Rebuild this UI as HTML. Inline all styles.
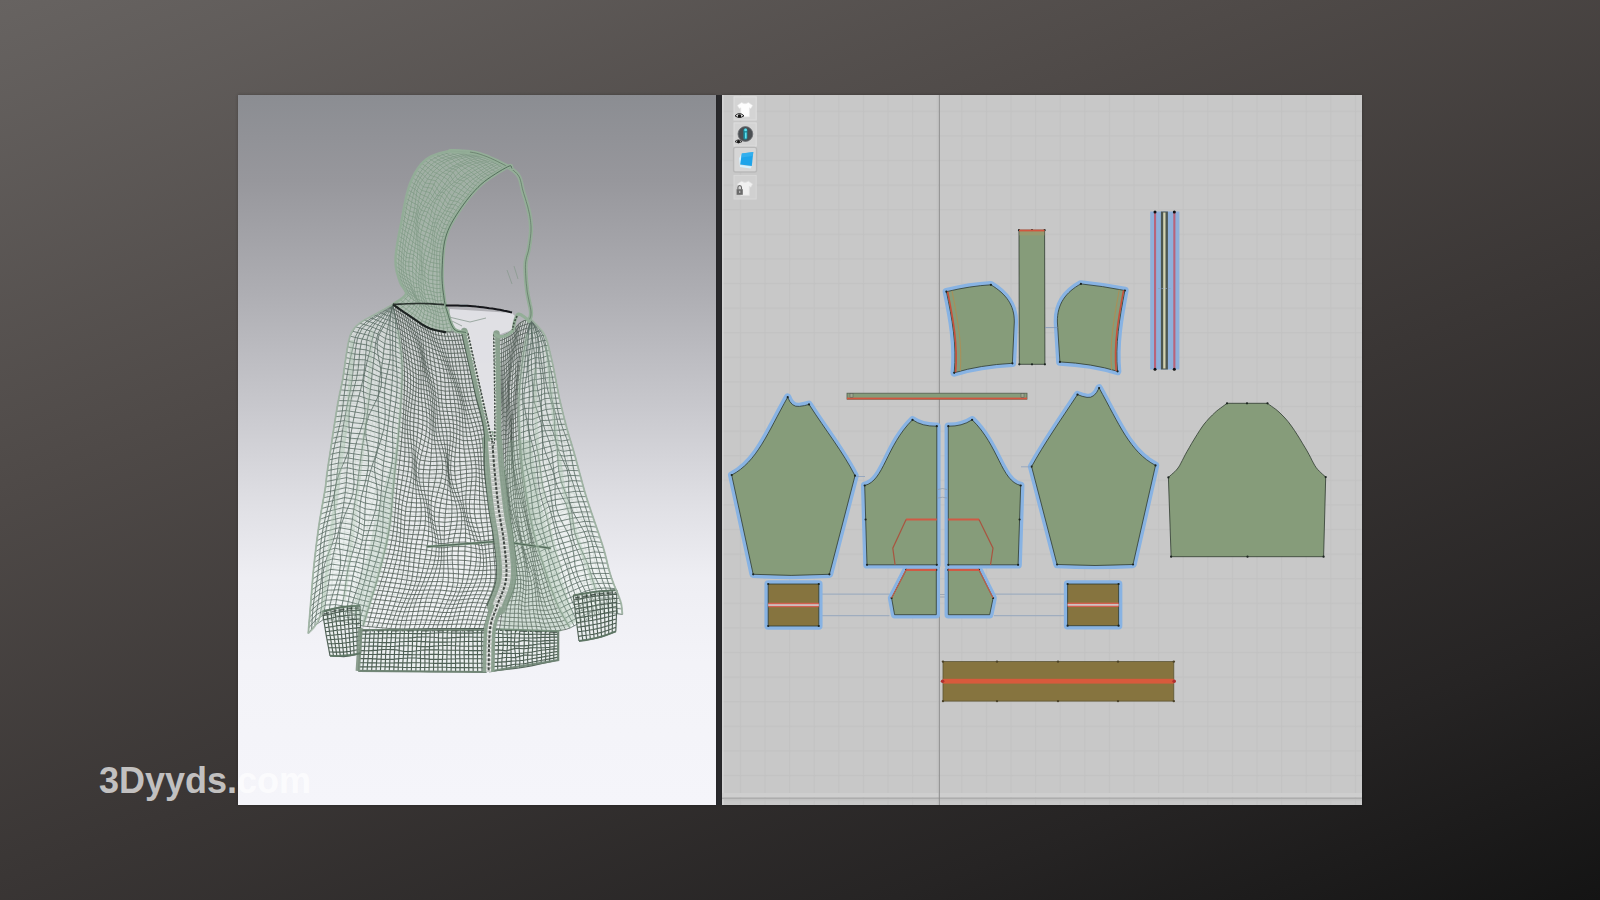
<!DOCTYPE html>
<html>
<head>
<meta charset="utf-8">
<title>3Dyyds hoodie</title>
<style>
html,body{margin:0;padding:0;}
body{width:1600px;height:900px;overflow:hidden;position:relative;
  font-family:"Liberation Sans",sans-serif;
  background:linear-gradient(159deg,#676361 0%,#4f4a48 32%,#3a3635 58%,#262424 82%,#141414 100%);}
#left{position:absolute;left:238px;top:95px;width:478.2px;height:710px;
  background:linear-gradient(to bottom,#8b8d92 0%,#97979c 12%,#aeaeb3 28%,#c8c8cd 44%,#e0e0e5 58%,#eeeef3 68%,#f3f3f8 80%,#f5f5fa 100%);
  box-shadow:0 0 3px rgba(0,0,0,.25);}
#right{position:absolute;left:722.3px;top:95px;width:640px;height:710px;background:#c8c8c8;
  box-shadow:0 0 3px rgba(0,0,0,.25);overflow:hidden;}
#gap{position:absolute;left:716px;top:95px;width:7px;height:710px;background:#2a2a2d;}
#art{position:absolute;left:0;top:0;width:1600px;height:900px;}
#wm{position:absolute;left:99px;top:760.5px;font-weight:bold;font-size:36px;line-height:40px;color:rgba(255,255,255,.7);letter-spacing:0px;white-space:nowrap;}
</style>
</head>
<body>
<div id="gap"></div>
<div id="left"></div>
<div id="right"></div>
<svg id="art" viewBox="0 0 1600 900" width="1600" height="900">
<defs>
  <pattern id="grid" x="1182.7" y="651.9" width="24.6" height="24.6" patternUnits="userSpaceOnUse">
    <path d="M0.5 0V24.6M0 0.5H24.6" stroke="#c2c2c2" stroke-width="1.3" fill="none"/>
  </pattern>
  <clipPath id="lclip"><rect x="238" y="95" width="479" height="710"/></clipPath>
  <filter id="soft" x="0" y="0" width="100%" height="100%" filterUnits="userSpaceOnUse"><feGaussianBlur stdDeviation="0.45"/></filter>
  <path id="bl" d="M392.8 304.4 397 307.3 401.2 310.3 405.4 313.2 409.6 316 413.9 318.9 418.1 321.8 422.3 324.6 426.8 327.1 431.5 329.1 436.4 330.5 441.5 331.5 446.5 332 451.7 332.1 456.8 331.7 461.8 331.2 464.4 331M387.1 307.6 391.4 310.6 395.9 313.5 400.3 316.2 405.4 319.1 411 322.4 415.5 325.8 419.3 328.9 424.3 331.4 430.5 333.3 435.6 334.8 439.8 336.1 445.1 337.1 451.4 337.4 457.5 337 463 336.5 465.6 336.5M381.3 310.8 386.1 313.7 390.8 316.6 395.3 319.5 401.1 322.5 407.7 326 412.8 329.6 416.5 332.7 421.9 335.5 429 337.7 434.4 339.5 438.4 340.9 444.1 341.9 451.6 342.3 458.3 342.1 464 341.9 466.9 342M375.6 314.1 380.9 316.8 385.9 319.7 390.4 322.8 396.7 326.1 404.4 329.7 410 333.3 413.6 336.5 419.5 339.5 427.4 342.1 433.1 344.3 437 345.8 443.4 346.7 451.9 347.1 459 347.2 465 347.3 468.1 347.5M369.8 317.2 375.6 319.7 381 322.7 385.6 325.9 392.4 329.4 400.8 333.3 406.8 337.1 410.6 340.3 416.9 343.6 425.8 346.5 431.9 348.9 435.9 350.5 442.8 351.5 452.1 352 459.7 352.3 465.9 352.7 469.3 353M364 320.2 370.2 322.8 376.2 325.6 381.2 328.8 388.3 332.5 397.2 336.9 403.4 341 407.3 344.5 414.2 347.8 424 350.8 430.9 353.2 435.2 355 442.5 356.3 452.3 357.1 460.1 357.6 466.8 358.1 470.6 358.5M358.6 324 365.3 326.5 371.9 329 377.4 332 384.8 335.8 393.6 340.8 399.9 345.6 404 349.4 411.6 352.5 422.4 355.2 430.1 357.5 434.9 359.5 442.5 361.2 452.5 362.4 460.5 363 467.6 363.6 471.8 364M353.9 328.5 360.9 331 368.2 333.2 374.4 335.8 382 339.6 390.4 345.3 396.5 350.8 401 354.8 409.3 357.7 421 359.9 429.6 361.9 435.1 364.1 442.9 366.3 452.7 367.9 460.8 368.6 468.4 369.1 473 369.6M350.7 334.2 358 336.6 365.9 338.3 372.6 340.5 380.2 344.4 388.1 350.5 393.9 356.7 399 360.9 407.8 363.4 420 365.1 429.4 366.8 435.9 369 443.7 371.6 453.1 373.5 461.2 374.3 469.3 374.7 474.2 375.1M348.8 340.5 356.4 342.6 364.6 344 371.9 346 379.4 349.9 386.5 356.3 392.3 362.7 398.1 366.9 407.3 369.3 419.3 370.7 429.4 372.2 436.9 374.4 445.1 377.1 454 379 461.9 379.9 470.2 380.3 475.4 380.6M347.6 347 355.4 348.5 363.9 349.7 371.5 351.8 378.7 355.9 385.1 362.3 391.3 368.4 398.2 372.4 407.4 374.9 418.6 376.6 429 378.2 437.9 380.2 446.6 382.4 455.1 384.3 462.7 385.3 471.2 385.8 476.7 386.1M346.5 353.5 354.7 354.4 363.2 355.6 370.9 358.1 377.9 362.3 383.7 368.4 390.6 373.8 399 377.4 408 380.3 417.8 382.7 428.3 384.7 438.7 386.3 448.2 387.8 456.4 389.2 463.8 390.4 472.3 391.4 477.9 391.6M345.5 360 354 360.1 362.2 361.4 370.1 364.5 376.8 369.1 382.3 374.6 390.3 379 400.2 382 408.9 385.4 416.9 389 427.2 391.5 439.2 392.6 449.8 393.1 457.8 393.9 465 395.4 473.6 396.9 479.2 397.1M344.6 366.5 353.3 365.9 361.3 367.3 369.3 371.1 375.9 375.8 381 380.8 390.2 384.1 401.9 386.6 410.1 390.5 416.2 395.2 426 398.4 439.6 399 451.2 398.4 459.1 398.6 466.3 400.3 475 402.3 480.6 402.6M343.7 373 352.6 371.8 360.2 373.2 368.5 377.4 375.1 382.4 380 386.9 390.3 389.4 403.5 391.5 411.3 395.8 415.6 401.3 425.1 405 440 405.3 452.4 403.9 460.3 403.5 467.7 405.4 476.5 407.8 482 408M342.7 379.5 351.4 377.9 358.8 379.2 367.7 383.4 374.5 388.3 379.2 392.8 390.1 395.1 404.7 397 412.4 401.4 415.3 407.1 424.5 410.9 440.3 411.1 453.2 409.5 461 408.9 468.8 410.8 478.1 413.2 483.4 413.5M341.4 385.9 349.8 384.3 357.1 385.2 366.7 388.9 374.1 393.7 378.5 398.4 389.6 401.2 405.1 403.2 413 407.3 415.2 412.5 424.3 416.1 440.7 416.6 453.6 415.2 461.2 414.8 469.7 416.4 479.6 418.7 484.7 419M340 392.3 347.8 390.9 355.1 391.2 365.8 394.1 373.9 398.4 377.9 403.8 388.9 407.7 404.9 410.1 413.2 413.6 415.4 417.7 424.6 420.7 441 421.6 453.4 421.1 460.9 421.1 470.3 422.4 481.1 424.1 485.9 424.5M338.7 398.8 345.7 397.6 353.1 397.3 365 399 374 402.9 377.7 409.2 388.1 414.4 404.3 417.4 413.1 420 415.9 422.7 425.3 425 441.3 426.4 453 427.1 460.3 427.7 470.8 428.6 482.5 429.6 487 430M337.5 405.3 343.9 404.4 351.3 403.4 364.1 404 374 407.4 377.7 414.5 387.5 421.2 403.4 424.7 412.9 426.5 416.5 427.7 426.1 429.2 441.4 431.2 452.2 433.2 459.6 434.4 471.1 434.8 483.7 435.2 487.9 435.6M336.5 411.7 342.2 411 349.6 409.5 363.1 409.2 373.9 412.2 377.8 420 387.1 427.7 402.6 431.7 412.5 432.8 417.1 433 426.8 433.9 441.3 436.4 451.4 439.2 459.1 440.8 471.5 440.9 484.7 440.7 488.7 441.2M335.4 418.2 340.8 417.5 348.2 415.6 361.9 414.8 373.3 417.6 377.8 425.7 386.9 433.9 401.8 438 412.1 438.8 417.6 438.5 427.4 439.3 440.8 441.9 450.5 445 458.9 446.8 472 446.6 485.6 446.2 489.4 446.8M334.4 424.7 339.7 423.6 346.9 421.7 360.4 420.8 372.4 423.5 377.9 431.6 387 439.6 401.2 443.5 411.6 444.5 418 444.4 427.6 445.3 440.1 447.8 449.8 450.8 459.1 452.3 472.7 452.1 486.3 451.8 490 452.4M333.4 431.2 338.8 429.6 346 427.7 358.8 427.1 371.1 429.9 377.8 437.6 387.2 445 400.6 448.6 411 449.9 418.3 450.5 427.8 451.8 439.3 454 449.3 456.4 459.6 457.5 473.5 457.4 486.8 457.4 490.6 458M332.4 437.7 338.2 435.5 345.3 433.7 357.4 433.5 369.8 436.4 377.8 443.7 387.4 450.4 399.7 453.6 410.2 455.2 418.7 456.7 428.1 458.4 438.7 460.3 449 461.9 460.4 462.6 474.4 462.6 487.2 463 491.2 463.6M331.5 444.2 337.6 441.5 344.9 439.6 356.2 439.6 368.7 442.7 377.7 449.8 387.3 456 398.4 458.8 409.1 460.7 419.1 462.8 428.7 464.8 438.4 466.4 448.9 467.4 461.3 467.7 475.1 468 487.6 468.6 491.9 469.2M330.5 450.7 337 447.6 344.7 445.5 355.5 445.5 368 448.6 377.6 455.8 386.7 461.9 396.5 464.6 407.7 466.5 419.6 468.7 429.8 470.7 438.6 472.1 449.1 472.9 462.2 473.2 475.7 473.5 487.8 474.2 492.6 474.8M329.5 457.2 336.3 453.9 344.7 451.3 355.1 450.9 367.5 453.9 377.5 461.6 385.7 468.3 394 471.1 405.8 472.7 420.3 474.3 431.4 476 439.3 477.3 449.4 478.4 462.9 479 476.1 479.4 488 479.9 493.3 480.4M328.5 463.7 335.6 460.4 344.7 457.2 355.1 455.9 367.4 458.8 377.4 467.4 384.3 475 391.1 478.1 403.8 479.2 420.9 479.7 433.2 480.7 440.3 482.2 449.9 484 463.4 485.2 476.2 485.4 488.1 485.6 493.9 486M327.5 470.2 334.9 466.9 344.8 463 355.2 460.8 367.4 463.6 377.1 473 382.8 481.9 388.3 485.4 401.8 485.7 421.5 485.1 435 485.2 441.5 487 450.6 489.6 463.9 491.4 476.3 491.6 488.2 491.3 494.6 491.6M326.6 476.7 334.3 473.4 345 468.8 355.4 465.9 367.3 468.5 376.7 478.8 381.4 488.7 385.9 492.5 400.2 492.2 421.9 490.5 436.5 489.9 442.7 491.9 451.4 495.2 464.6 497.6 476.5 497.7 488.3 497 495.3 497.2M325.9 483.3 334 479.7 345.3 474.6 355.4 471.3 367 473.9 376.2 484.7 380.5 495.1 384.4 499 399.1 498.4 422 496.1 437.4 495.2 443.7 497.1 452.4 500.7 465.5 503.3 476.9 503.5 488.5 502.7 496 502.8M325 489.8 333.7 485.7 345.1 480.4 354.9 477.2 366.1 480 375.3 490.8 379.8 501 383.9 504.7 398.6 504.1 421.6 502.1 437.3 501.3 444.1 502.9 453.5 506.2 466.8 508.6 477.7 509 488.9 508.3 496.8 508.4M324 496.2 333.3 491.5 344.6 486.2 353.8 483.5 364.5 486.7 374 497 379.6 506.3 384.4 509.5 398.7 509.4 420.8 508.4 436.4 508.1 444.1 509.2 454.7 511.5 468.3 513.4 478.7 514.1 489.5 513.9 497.7 514M322.8 502.7 332.8 497 343.8 492 352.2 490.2 362.6 493.8 372.5 503.4 379.7 511.2 385.8 513.6 399.4 514.3 419.8 514.8 434.8 515.4 443.8 515.9 455.9 516.8 470.1 517.9 480.1 518.9 490.5 519.5 498.7 519.5M321.6 509.2 332.2 502.6 342.8 497.8 350.6 497.1 360.6 501 371.1 509.7 380.1 516 387.7 517.7 400.6 519.1 418.7 521.3 432.9 522.8 443.3 522.6 457 522.1 471.8 522.3 481.7 523.7 491.6 525 499.9 525.1M320.5 515.7 331.4 508.3 341.4 503.7 348.9 503.7 358.8 507.9 369.7 515.9 380.4 521 389.9 522 402 524.1 417.7 527.7 431 529.9 442.7 529.2 457.9 527.5 473.1 527 483.1 528.6 492.9 530.5 501 530.6M319.4 522.1 330.4 514.2 339.9 509.7 347.5 510 357.5 514.3 368.4 522 380.6 526.3 391.7 526.9 403.3 529.4 416.7 533.7 429.3 536.4 442.3 535.5 458.5 533.1 473.9 532.1 484.2 533.8 494.2 536 502 536.1M318.5 528.7 329.2 520.5 338.3 515.7 346.4 515.9 356.7 520.1 367.3 527.8 380.4 532.2 393.1 532.7 404.4 535.2 416 539.5 428 542.2 442 541.3 458.7 538.8 474 537.8 484.9 539.3 495.3 541.6 502.8 541.7M317.6 535.2 327.8 527 336.5 521.8 345.7 521.4 356.5 525.3 366.5 533.5 379.9 538.5 393.9 539.3 405.2 541.3 415.5 544.9 427.2 547.2 441.9 546.7 458.6 544.8 473.6 543.9 485.2 545.2 496.3 547.1 503.5 547.3M316.7 541.7 326.2 533.7 334.8 527.9 345.1 526.6 356.6 530.2 365.8 539 379.2 545.1 394.3 546.3 405.8 547.6 415.3 550.1 426.9 551.9 442.1 551.8 458.4 550.8 472.9 550.3 485.4 551.3 497.4 552.7 504.1 552.9M315.9 548.2 324.6 540.4 333.1 534.1 344.7 531.8 356.9 535 365.3 544.5 378.3 551.7 394.4 553.4 406.2 554 415.1 555.3 426.8 556.5 442.4 556.9 458 556.8 472 556.8 485.4 557.4 498.4 558.3 504.7 558.6M315.1 554.7 323.1 547 331.5 540.2 344.3 537.2 357.1 540 364.8 550.1 377.5 558.2 394.3 560.2 406.5 560.3 414.9 560.7 426.6 561.4 442.5 562.2 457.6 562.8 471.1 563.1 485.3 563.4 499.1 563.9 505.2 564.2M314.4 561.3 321.8 553.4 330.1 546.3 343.8 542.8 357 545.4 364.2 555.8 376.7 564.4 394.1 566.6 406.5 566.4 414.6 566.2 426.4 566.8 442.5 567.7 457.2 568.6 470.3 569.1 485.1 569.3 499.6 569.5 505.4 569.8M313.7 567.8 320.8 559.7 328.9 552.3 343.1 548.7 356.7 551.3 363.5 561.7 375.9 570.3 393.7 572.4 406.2 572.2 414.1 572.1 425.8 572.6 442.1 573.5 456.6 574.4 469.5 574.8 484.7 574.9 499.6 575.1 505.2 575.5M313.1 574.3 319.9 565.9 327.9 558.4 342.4 554.8 356.1 557.4 362.7 567.6 375 576 393 578 405.4 577.9 413.2 578 425 578.7 441.3 579.5 455.7 580 468.5 580.2 483.9 580.3 499 580.6 504.5 581.1M312.5 580.9 319.1 571.9 327.1 564.3 341.6 560.9 355.4 563.5 361.7 573.6 373.8 581.7 391.6 583.3 404.1 583.4 412 583.9 423.9 584.8 440.2 585.4 454.4 585.5 467.1 585.4 482.4 585.6 497.5 586.1 503 586.5M312 587.4 318.5 578.1 326.4 570.3 340.9 566.8 354.5 569.4 360.7 579.5 372.2 587.4 389.6 588.8 402.2 589 410.7 589.7 422.8 590.6 438.8 591 452.8 590.8 465.3 590.6 480.4 590.8 495.4 591.4 501.1 591.8M311.5 594 317.8 584.3 325.9 576.2 340.3 572.5 353.7 575.1 359.6 585.3 370.5 593.2 387.1 594.6 399.9 594.6 409.3 595.3 421.8 596.1 437.4 596.3 451 596 463.3 595.8 478.1 596 493 596.6 498.8 596.9M311 600.5 317.2 590.6 325.5 582 339.7 578 353 580.5 358.6 591.1 368.5 599.3 384.2 600.8 397.4 600.5 408.1 600.7 421.1 601.2 436.1 601.4 449.1 601.3 461.3 601.2 475.8 601.4 490.5 601.8 496.5 602.1M310.4 607.1 316.6 597 325.2 587.9 339.3 583.4 352.4 585.8 357.7 596.8 366.7 605.6 381.4 607.2 395 606.6 407.1 606.1 420.6 606.2 435 606.5 447.6 606.7 459.6 606.8 473.7 607 488.3 607.2 494.5 607.4M309.9 613.6 316 603.3 324.8 593.8 338.7 588.8 351.7 591.1 356.9 602.6 365.2 612 378.9 613.7 392.8 612.6 406.2 611.6 420.2 611.3 434 611.6 446.2 612.2 458.1 612.6 472 612.6 486.4 612.6 492.8 612.8M309.4 620.2 315.5 609.6 324.4 599.7 338 594.3 350.8 596.6 356 608.4 363.9 618.1 377 619.9 390.9 618.6 405.1 617.2 419.4 616.7 432.7 616.9 444.8 617.6 456.9 618.2 470.4 618.2 484.6 618.1 491.2 618.2M308.8 626.7 315.1 615.8 323.9 605.7 336.9 600.2 349.5 602.4 355 614.3 363 624 375.7 625.6 389.6 624.3 403.9 623 418 622.4 431.1 622.5 443.4 623.1 455.8 623.5 469.1 623.6 482.9 623.5 489.6 623.6M308.3 633.3 314.8 621.8 323 611.7 335 606.5 347.4 608.8 353.7 620.4 362.8 629.4 375.9 630.6 389.1 629.6 402.2 629 415.4 628.8 428.6 628.7 441.8 628.5 455 628.5 468.2 628.7 481.4 628.9 488 629M392.8 304.4 381.3 310.8 369.8 317.2 358.6 324 350.7 334.2 347.6 347 345.5 360 343.7 373 341.4 385.9 338.7 398.8 336.5 411.7 334.4 424.7 332.4 437.7 330.5 450.7 328.5 463.7 326.6 476.7 325 489.8 322.8 502.7 320.5 515.7 318.5 528.7 316.7 541.7 315.1 554.7 313.7 567.8 312.5 580.9 311.5 594 310.4 607.1 309.4 620.2 308.3 633.3M394.9 305.9 383.6 312.3 372.5 318.4 361.7 325.2 354 335.5 351.2 347.9 349.8 360 348.5 372.1 346.2 384.8 342.9 398.2 339.9 411.6 337.5 424.4 335.7 436.6 333.8 449.1 331.6 462.1 329.6 475.4 328.4 488.1 327.1 500 325.7 511.8 324 524.3 321.9 537.6 319.7 550.9 317.9 563.8 316.5 576.4 315.2 589.1 313.7 602.1 312.4 615.1 311.6 627.6M397 307.3 386.1 313.7 375.6 319.7 365.3 326.5 358 336.6 355.4 348.5 354 360.1 352.6 371.8 349.8 384.3 345.7 397.6 342.2 411 339.7 423.6 338.2 435.5 337 447.6 335.6 460.4 334.3 473.4 333.7 485.7 332.8 497 331.4 508.3 329.2 520.5 326.2 533.7 323.1 547 320.8 559.7 319.1 571.9 317.8 584.3 316.6 597 315.5 609.6 314.8 621.8M399.1 308.8 388.5 315.2 378.5 321.2 368.8 327.7 362 337.5 359.7 349.1 358.1 360.5 356.3 372.1 353.1 384.3 348.8 397.2 345 410.3 342.4 422.7 341.1 434.5 340.5 446.3 340 458.6 339.6 471 339.5 483 338.6 494.2 336.8 505.4 333.9 517.5 330.3 530.3 326.7 543.2 324 555.7 322.2 567.7 321 579.8 320 592 319.2 604.3 318.3 616.2M401.2 310.3 390.8 316.6 381 322.7 371.9 329 365.9 338.3 363.9 349.7 362.2 361.4 360.2 373.2 357.1 385.2 353.1 397.3 349.6 409.5 346.9 421.7 345.3 433.7 344.7 445.5 344.7 457.2 345 468.8 345.1 480.4 343.8 492 341.4 503.7 338.3 515.7 334.8 527.9 331.5 540.2 328.9 552.3 327.1 564.3 325.9 576.2 325.2 587.9 324.4 599.7 323 611.7M403.3 311.7 393 318 383.3 324.3 374.7 330.5 369.3 339.3 367.8 350.6 366.3 362.8 364.4 375.1 361.8 386.9 358.8 398 356 409.2 353.2 421.1 350.9 433.4 349.8 445.3 349.7 456.3 350.3 467 350.2 478.4 348.2 490.7 345.3 503.3 342.3 515.4 339.8 526.8 337.6 538.2 335.6 550.1 333.9 562.1 332.7 573.9 331.9 585.1 331 596.5 328.8 608.5M405.4 313.2 395.3 319.5 385.6 325.9 377.4 332 372.6 340.5 371.5 351.8 370.1 364.5 368.5 377.4 366.7 388.9 365 399 363.1 409.2 360.4 420.8 357.4 433.5 355.5 445.5 355.1 455.9 355.4 465.9 354.9 477.2 352.2 490.2 348.9 503.7 346.4 515.9 345.1 526.6 344.3 537.2 343.1 548.7 341.6 560.9 340.3 572.5 339.3 583.4 338 594.3 335 606.5M407.5 314.6 397.9 321 388.6 327.6 380.7 333.7 376.2 342.1 375.1 353.5 373.7 366.6 372.2 379.8 371 391.2 370.3 400.5 369.5 410 367.2 421.4 364 434.2 361.7 446.3 361.1 456.5 361.2 466 360.2 477.4 357 491 353.4 505 351.2 517.3 350.9 527.4 351.1 537.4 350.6 548.7 349.2 560.9 347.7 572.5 346.5 583.1 345 593.9 341.6 606.1M409.6 316 401.1 322.5 392.4 329.4 384.8 335.8 380.2 344.4 378.7 355.9 376.8 369.1 375.1 382.4 374.1 393.7 374 402.9 373.9 412.2 372.4 423.5 369.8 436.4 368 448.6 367.4 458.8 367.3 468.5 366.1 480 362.6 493.8 358.8 507.9 356.7 520.1 356.6 530.2 357.1 540 356.7 551.3 355.4 563.5 353.7 575.1 352.4 585.8 350.8 596.6 347.4 608.8M411.7 317.5 404.5 324.3 396.6 331.4 389.3 338.3 384.3 347.3 382 359 379.5 371.9 377.3 384.9 376 396.3 375.8 406 376 415.9 375.4 427.3 374.1 439.9 373.1 452.1 372.8 462.9 372.6 473.3 371.1 485 367.8 498.4 364.1 512.1 361.8 524.2 361.1 534.6 361 544.9 360.3 556.3 358.7 568.4 356.9 580.1 355.4 591.1 353.8 602.2 350.8 614.5M413.9 318.9 407.7 326 400.8 333.3 393.6 340.8 388.1 350.5 385.1 362.3 382.3 374.6 380 386.9 378.5 398.4 377.7 409.2 377.8 420 377.9 431.6 377.8 443.7 377.6 455.8 377.4 467.4 376.7 478.8 375.3 490.8 372.5 503.4 369.7 515.9 367.3 527.8 365.8 539 364.8 550.1 363.5 561.7 361.7 573.6 359.6 585.3 357.7 596.8 356 608.4 353.7 620.4M416 320.4 410.5 327.9 404.3 335.3 397.2 343.3 391.3 353.8 388.1 365.6 385.8 377 384.3 388.4 382.8 400.1 381.5 412.1 381.1 424.2 381.4 436 381.9 447.5 382 459.3 381.1 471.7 379.5 484.3 378 496.5 376.5 508 375.1 519.1 373.5 530.7 371.7 542.7 370 554.9 368.4 566.8 366.3 578.4 363.7 590.1 361 602.1 358.9 614.2 357.4 625.9M418.1 321.8 412.8 329.6 406.8 337.1 399.9 345.6 393.9 356.7 391.3 368.4 390.3 379 390.3 389.4 389.6 401.2 388.1 414.4 387.1 427.7 387 439.6 387.4 450.4 386.7 461.9 384.3 475 381.4 488.7 379.8 501 379.7 511.2 380.4 521 380.4 532.2 379.2 545.1 377.5 558.2 375.9 570.3 373.8 581.7 370.5 593.2 366.7 605.6 363.9 618.1 362.8 629.4M420.2 323.2 414.6 331.2 408.7 338.7 401.8 347.6 396.3 359 394.6 370.6 395.3 380.5 397.1 390.3 397.7 402 396.4 416.1 394.9 430.1 394.1 442 393.6 452.3 391.6 463.5 387.4 477 383.1 491.3 381.3 503.5 382.4 512.8 385.2 521.5 387.1 532.5 387.1 545.9 386.2 559.6 385 571.9 382.8 582.9 378.8 594.4 373.9 607 370.2 619.6 369.3 630.5M422.3 324.6 416.5 332.7 410.6 340.3 404 349.4 399 360.9 398.2 372.4 400.2 382 403.5 391.5 405.1 403.2 404.3 417.4 402.6 431.7 401.2 443.5 399.7 453.6 396.5 464.6 391.1 478.1 385.9 492.5 383.9 504.7 385.8 513.6 389.9 522 393.1 532.7 394.3 546.3 394.3 560.2 393.7 572.4 391.6 583.3 387.1 594.6 381.4 607.2 377 619.9 375.9 630.6M424.5 325.9 418.8 334.1 413.2 342 407.1 351 402.7 362.3 402.4 373.8 404.8 383.7 408.3 393.4 410.3 405 410.1 418.7 408.7 432.5 407.2 444.3 405.3 454.5 401.9 465.6 396.5 478.8 391.4 492.8 389.5 504.8 391.2 514.1 395.3 522.8 398.8 533.6 400.6 546.8 401.2 560.3 400.9 572.4 398.8 583.4 394.2 594.6 388.5 607 383.9 619.4 382.5 630.1M426.8 327.1 421.9 335.5 416.9 343.6 411.6 352.5 407.8 363.4 407.4 374.9 408.9 385.4 411.3 395.8 413 407.3 413.1 420 412.5 432.8 411.6 444.5 410.2 455.2 407.7 466.5 403.8 479.2 400.2 492.2 398.6 504.1 399.4 514.3 402 524.1 404.4 535.2 405.8 547.6 406.5 560.3 406.2 572.2 404.1 583.4 399.9 594.6 395 606.6 390.9 618.6 389.1 629.6M429.1 328.2 425.5 336.6 421.4 345.1 417 353.9 413.9 364.3 412.9 375.8 412.8 387.2 413.3 398.6 414 409.9 414.4 421.4 414.8 432.9 414.9 444.4 414.5 455.9 413.7 467.6 412.4 479.4 411 491.3 410.1 503.1 409.6 514.5 409.8 525.8 410.2 537.2 410.5 548.8 410.7 560.4 410.1 572 408.1 583.5 404.6 594.8 401 606.2 398 617.7 395.6 629.1M431.5 329.1 429 337.7 425.8 346.5 422.4 355.2 420 365.1 418.6 376.6 416.9 389 415.6 401.3 415.2 412.5 415.9 422.7 417.1 433 418 444.4 418.7 456.7 419.6 468.7 420.9 479.7 421.9 490.5 421.6 502.1 419.8 514.8 417.7 527.7 416 539.5 415.3 550.1 414.9 560.7 414.1 572.1 412 583.9 409.3 595.3 407.1 606.1 405.1 617.2 402.2 629M434 329.8 432 338.6 429.3 347.8 426.9 356.4 425.3 365.9 424.1 377.4 421.7 390.4 419.3 403.5 418.4 414.7 419.3 423.9 420.9 433.3 422.2 444.6 423.1 457.5 425 469.8 428 480.2 430.7 489.9 431 501.4 428.5 515.1 424.8 529.1 421.9 541.2 420.6 551.2 420.1 561 419.1 572.3 417.1 584.4 414.9 595.8 413.6 606.2 412.3 616.8 408.8 628.9M436.4 330.5 434.4 339.5 431.9 348.9 430.1 357.5 429.4 366.8 429 378.2 427.2 391.5 425.1 405 424.3 416.1 425.3 425 426.8 433.9 427.6 445.3 428.1 458.4 429.8 470.7 433.2 480.7 436.5 489.9 437.3 501.3 434.8 515.4 431 529.9 428 542.2 426.9 551.9 426.6 561.4 425.8 572.6 423.9 584.8 421.8 596.1 420.6 606.2 419.4 616.7 415.4 628.8M438.9 331 436.3 340.2 433.8 349.8 432.5 358.5 432.7 367.8 433.6 379.1 433.2 392.2 432.3 405.5 432.2 416.7 433.2 425.8 434.1 435 433.9 446.4 433.3 459.4 434.2 471.5 436.9 481.4 440 490.6 441.1 501.8 439.4 515.6 436.6 529.9 434.6 542.1 434.1 552.1 434.4 561.8 433.8 573 431.9 585.1 429.5 596.3 427.9 606.3 426.2 616.7 422 628.8M441.5 331.5 438.4 340.9 435.9 350.5 434.9 359.5 435.9 369 437.9 380.2 439.2 392.6 440 405.3 440.7 416.6 441.3 426.4 441.3 436.4 440.1 447.8 438.7 460.3 438.6 472.1 440.3 482.2 442.7 491.9 444.1 502.9 443.8 515.9 442.7 529.2 442 541.3 442.1 551.8 442.5 562.2 442.1 573.5 440.2 585.4 437.4 596.3 435 606.5 432.7 616.9 428.6 628.7M444 331.8 440.9 341.5 438.9 351 438.2 360.4 439.4 370.3 442.2 381.3 444.9 392.9 446.9 404.6 448 415.9 448.1 426.8 447.1 437.8 445.4 449.4 443.8 461.2 443.5 472.5 444.5 483.1 446.3 493.5 448 504.5 449.2 516.2 449.9 528.3 450.1 540.1 450.3 551.3 450.4 562.5 449.8 574 447.8 585.5 444.6 596.2 441.6 606.6 438.9 617.3 435.2 628.6M446.5 332 444.1 341.9 442.8 351.5 442.5 361.2 443.7 371.6 446.6 382.4 449.8 393.1 452.4 403.9 453.6 415.2 453 427.1 451.4 439.2 449.8 450.8 449 461.9 449.1 472.9 449.9 484 451.4 495.2 453.5 506.2 455.9 516.8 457.9 527.5 458.7 538.8 458.4 550.8 457.6 562.8 456.6 574.4 454.4 585.5 451 596 447.6 606.7 444.8 617.6 441.8 628.5M449.1 332.1 447.8 342.2 447.5 351.8 447.5 361.9 448.5 372.7 450.9 383.5 454 393.4 456.7 403.4 457.6 414.7 456.6 427.4 455 440.2 454 451.8 454.4 462.3 455.4 473.1 456.5 484.7 457.8 496.7 460.1 507.6 463.2 517.3 466 527 466.8 538 465.9 550.4 464.4 563 462.9 574.7 460.6 585.5 457 595.9 453.4 606.8 450.7 618 448.4 628.5M451.7 332.1 451.6 342.3 452.1 352 452.5 362.4 453.1 373.5 455.1 384.3 457.8 393.9 460.3 403.5 461.2 414.8 460.3 427.7 459.1 440.8 459.1 452.3 460.4 462.6 462.2 473.2 463.4 485.2 464.6 497.6 466.8 508.6 470.1 517.9 473.1 527 474 537.8 472.9 550.3 471.1 563.1 469.5 574.8 467.1 585.4 463.3 595.8 459.6 606.8 456.9 618.2 455 628.5M454.2 331.9 455.1 342.2 456.2 352.2 456.8 362.8 457.4 374 458.9 384.9 461.3 394.6 463.8 404.2 465.1 415.4 465 428.1 464.7 440.9 465.4 452.4 467.2 462.6 469.1 473.3 470.1 485.4 470.8 497.9 472.6 509 475.6 518.5 478.7 527.6 479.9 538.3 479.3 550.7 478.1 563.3 476.8 574.9 474.4 585.5 470.4 595.8 466.4 606.9 463.5 618.2 461.6 628.6M456.8 331.7 458.3 342.1 459.7 352.3 460.5 363 461.2 374.3 462.7 385.3 465 395.4 467.7 405.4 469.7 416.4 470.8 428.6 471.5 440.9 472.7 452.1 474.4 462.6 475.7 473.5 476.2 485.4 476.5 497.7 477.7 509 480.1 518.9 483.1 528.6 484.9 539.3 485.4 551.3 485.3 563.4 484.7 574.9 482.4 585.6 478.1 596 473.7 607 470.4 618.2 468.2 628.7M459.3 331.4 461.2 342 462.8 352.5 463.9 363.3 465.1 374.5 466.7 385.6 469 396.2 471.9 406.7 474.7 417.7 476.9 429.1 478.6 440.7 480.1 451.9 481.3 462.7 482 473.8 482.2 485.4 482.1 497.3 482.8 508.6 484.7 519.3 487.5 529.6 489.7 540.6 491.3 552 492.4 563.6 492.5 574.9 490.4 585.8 485.9 596.3 481.2 607 477.6 618.1 474.8 628.8M461.8 331.2 464 341.9 465.9 352.7 467.6 363.6 469.3 374.7 471.2 385.8 473.6 396.9 476.5 407.8 479.6 418.7 482.5 429.6 484.7 440.7 486.3 451.8 487.2 463 487.8 474.2 488.1 485.6 488.3 497 488.9 508.3 490.5 519.5 492.9 530.5 495.3 541.6 497.4 552.7 499.1 563.9 499.6 575.1 497.5 586.1 493 596.6 488.3 607.2 484.6 618.1 481.4 628.9M464.4 331 466.9 342 469.3 353 471.8 364 474.2 375.1 476.7 386.1 479.2 397.1 482 408 484.7 419 487 430 488.7 441.2 490 452.4 491.2 463.6 492.6 474.8 493.9 486 495.3 497.2 496.8 508.4 498.7 519.5 501 530.6 502.8 541.7 504.1 552.9 505.2 564.2 505.2 575.5 503 586.5 498.8 596.9 494.5 607.4 491.2 618.2 488 629"/>
<path id="br" d="M493.3 333.3 496.6 335.9 500.6 336.6 504.6 335 508.3 333 511.9 330.8 515.1 328.1 517.9 324.9 520.9 322 524.8 320.4 529 319.5 531 319M493.4 339.7 496.6 342.4 502.6 342.4 506.2 340.5 509.8 339.9 514.4 335.6 516.6 333.4 521.7 331.2 524.4 326.1 529.4 325.7 533.2 324.5 535.6 323.8M493.6 346 496.4 348.6 504.6 348.4 507.4 346.1 511.4 346.2 517.3 341 518 338.7 525.9 337.1 527.4 330.6 533.9 331 537.6 329.2 540.2 328.5M493.7 352.4 496.5 354.9 505.9 354.6 508.5 352 512.8 352.6 519.9 346.7 519.5 344.5 529.2 343.1 530 335.7 537.4 336.5 541.3 334.6 544.1 333.9M493.8 358.8 497 361.3 506.2 360.6 509.4 358.4 513.7 358.9 521.5 353 521.3 350.9 530.8 349 532.1 341.9 539.3 342.4 543.9 340.7 546.7 340M494 365.1 498 367.9 505.5 366.6 510.4 365.1 514.4 365 522.4 359.5 523.8 357.7 530.9 354.7 534.3 348.8 540 348.3 545.9 347.2 548.6 346.3M494.1 371.5 499.5 374.5 504.2 372.5 511.2 372 515.1 371 522.7 366.2 526.9 364.7 530.1 360.2 536.5 356 540.1 354.1 547.6 353.8 550.1 352.8M494.2 377.9 500.9 380.9 503 378.6 511.9 378.8 516.2 376.7 522.8 373.2 530.2 371.5 529.3 365.8 538.6 363.2 540.5 359.9 549.3 360.3 551.6 359.2M494.3 384.2 501.9 386.9 502.2 385.1 512.2 385.5 517.5 382.5 522.7 380.4 533 378 529.1 371.6 539.9 370.1 541.3 366 550.5 366.7 553 365.7M494.3 390.6 502.3 392.7 502.4 392 511.9 391.8 518.9 388.3 522.7 387.7 534.7 384.2 529.9 377.9 540.3 376.7 542.8 372.5 551.4 373 554.3 372.2M494.4 397 502 398.1 503.5 399.3 511.2 397.9 520.4 394.2 523 395.2 535.1 390 531.9 384.6 539.9 382.8 545 379.3 552.1 379.1 555.6 378.7M494.5 403.3 501.2 403.5 505.4 406.8 510.7 403.9 521.7 400.2 523.6 402.6 534.3 395.8 534.7 391.4 539.2 388.9 547.6 386.3 552.8 385.1 556.8 385.3M494.5 409.7 500.3 409 507.4 414.2 510.5 410 522.5 406.2 524.4 409.9 532.8 401.7 537.7 398 538.8 395.1 550.1 393.3 553.6 391.2 558.1 391.8M494.6 416.1 499.7 414.8 509.1 421.1 511.2 416.5 522.8 412.2 525.3 416.8 531.3 408 540.2 404.1 539.3 401.7 552.1 399.9 554.9 397.4 559.4 398.3M494.6 422.4 499.6 421.1 510 427.5 512.9 423.3 522.6 418.2 526.3 423.4 530.3 414.8 541.9 409.7 541.2 408.9 553.3 406 556.8 403.7 560.9 404.7M494.6 428.8 500.1 427.9 510 433.3 515.2 430.4 522 424.2 527.3 429.8 530.1 422.1 542.6 414.7 544.1 416.6 553.8 411.7 559.1 410.2 562.4 411.2M494.6 435.1 501 434.9 509.4 438.8 517.6 437.6 521.3 430.2 528.3 435.9 530.7 429.5 542.6 419.6 547.5 424.3 553.8 417.3 561.5 416.9 564 417.6M494.5 441.5 501.9 441.9 508.6 444.3 519.5 444.7 520.9 436.5 529.2 442 532 436.8 542.4 424.8 550.5 431.7 553.8 422.9 563.8 423.5 565.7 424M494.3 447.9 502.4 448.6 507.9 450.1 520.4 451.3 521 443 530.2 448.2 533.6 443.7 542.6 430.7 552.6 438.4 554.5 428.9 565.8 430.1 567.4 430.4M494 454.2 502.3 455 507.9 456.3 520 457.4 521.9 449.8 531.2 454.5 535.3 449.9 543.7 437.6 553.4 444.1 556.1 435.3 567.3 436.4 569.3 436.8M493.9 460.6 501.8 461 508.6 463.1 518.7 463 523.5 456.9 532.4 460.9 537.2 455.6 545.6 445.4 553 448.9 558.5 442.2 568.5 442.7 571.3 443.1M493.9 467 501.3 466.9 509.7 470 516.8 468.2 525.7 464.2 533.5 467.4 539.1 460.9 547.8 453.8 551.9 453.2 561.4 449.4 569.3 448.9 573.2 449.5M494.2 473.3 501.1 472.8 510.9 476.9 515.3 473.5 527.9 471.6 534.6 473.8 541.3 466.3 549.8 462.2 551.1 457.5 564.1 456.5 570 455.2 574.9 455.9M494.6 479.7 501.5 479.1 511.6 483.3 514.6 479.1 529.9 479 535.5 480 543.9 472 551 470.1 551.3 462.3 566.3 463.4 571 461.6 576.7 462.3M495.2 486 502.6 485.9 511.8 489.1 515.2 485.2 531.3 486.3 536.3 485.8 546.8 478.4 551.2 477.3 553.1 467.8 567.6 469.7 572.5 468.2 578.4 468.7M495.8 492.4 504.3 493.2 511.4 494.4 517.2 491.8 532 493.4 537 491.3 549.6 485.3 550.6 483.7 556.3 474 568.1 475.6 574.5 475.1 580.2 475.1M496.6 498.7 506.2 500.7 511 499.3 520.1 498.7 532.1 500.4 537.8 496.5 551.9 492.6 549.8 489.5 560.3 480.9 568.2 481.2 576.8 482 581.9 481.5M497.3 505 507.9 508.2 511.1 504.2 523.4 505.7 531.9 507.4 539 501.8 553.2 499.9 549.7 495.2 564.5 487.8 568.4 486.9 579.3 488.8 583.6 487.9M498.2 511.3 509 515.3 512.2 509.6 526.4 512.4 531.7 514.4 540.7 507.2 553.3 507 550.8 501.1 567.9 494.5 569.4 492.8 581.7 495.5 585.5 494.3M499.2 517.6 509.4 522 514.6 515.5 528.7 518.7 532 521.3 543 512.8 552.3 513.5 553.6 507.5 570.2 500.5 571.5 499.1 584 501.9 587.5 500.6M500.5 523.8 509.2 528 518.1 522.1 530.3 524.5 533 528.2 545.6 518.8 550.8 519.5 557.8 514.5 571.2 506 574.7 505.9 586 508 589.5 506.9M501.7 530.1 508.9 533.7 522 529.1 531.1 530.1 534.5 535 548.3 525.1 549.4 525 562.6 521.8 571.2 511.1 578.4 512.9 587.7 513.9 591.7 513.2M502.9 536.3 508.6 539.2 525.4 536.2 531.3 535.7 536.4 541.6 550.7 531.8 548.8 530.5 566.9 529.1 571 516.3 582 519.9 589.3 519.8 593.8 519.4M503.7 542.6 508.8 544.9 527.5 543.3 531.5 541.5 538.4 547.9 552.3 538.7 549.7 536.3 570 536 571.3 521.9 585 526.6 590.9 525.8 596 525.7M504.5 549 510 550.7 528.2 549.9 532 547.7 540.5 553.8 553.4 545.7 552.3 542.4 571.5 542.2 572.7 528.1 587.1 532.8 592.8 531.9 598.1 532M505.3 555.3 512.1 556.9 527.6 556.1 533 554.4 542.4 559.4 554 552.7 556.5 549 571.4 547.6 575.1 535.1 588.3 538.6 594.9 538.2 600.3 538.3M505.9 561.6 514.6 563.3 526.1 562 534.4 561.5 544.1 564.8 554.2 559.7 561.4 555.9 570.2 552.6 578.2 542.6 588.6 544 597.1 544.6 602.3 544.6M506.3 568 517 569.8 524.4 567.8 535.7 568.6 545.5 570.1 554.3 566.8 566.1 562.9 568.9 557.5 581.2 550.3 588.8 549.4 599.3 551.1 604.3 550.9M506.3 574.3 518.4 576.1 522.8 573.9 536.5 575.6 546.5 575.6 554.3 573.9 569.5 569.9 568.1 562.6 583.5 557.8 589 555.1 601.1 557.5 605.9 557.3M505.6 580.7 518.5 582.2 521.8 580.4 536.4 582.3 546.9 581.2 554.5 581 571.1 576.5 568.3 568.2 584.7 564.9 589.8 561.1 602.7 563.8 607.5 563.8M503.9 586.8 516.8 587.8 521.2 587 535.3 588.5 546.7 587 554.7 588 570.8 582.7 569.6 574.2 584.8 571.3 591.3 567.5 604.1 570 609.1 570.2M501.6 592.7 514 593.1 520.9 593.7 533.6 594.2 546 592.9 555 594.7 569.1 588.5 571.9 580.6 584.3 577.3 593.5 574.1 605.5 576 611 576.6M499 598.5 510.7 598.3 520.8 600.3 531.9 599.8 545.3 598.8 555.5 601.2 567.1 594.2 574.7 586.9 584 583 596.2 580.7 607.4 581.9 613.2 582.8M496.5 604.4 507.8 603.9 520.7 606.6 530.7 605.6 544.5 604.8 556 607.4 565.4 600 577.2 593.2 584.5 588.8 598.8 587.1 609.6 587.8 615.7 589M494.7 610.5 505.9 609.8 520.4 612.8 530.4 611.6 544.1 611 556.6 613.5 564.8 606.1 579.1 599.3 586 594.8 601.1 593.2 612 593.8 618.3 595.1M493 616.6 504.7 616.2 519.5 618.7 530.4 617.9 543.6 617.4 556.8 619.6 565.1 612.5 579.9 605.4 587.9 601 602.7 599.2 614.2 600.1 620.6 601.3M491.5 622.8 503.9 622.8 518.1 624.4 530.3 624.3 543 624 556.4 625.6 565.8 619.1 579.4 611.7 589.4 607.4 603.1 605.4 615.5 606.7 621.9 607.8M490 629 503.1 629.5 516.2 630 529.3 630.5 542.4 631.2 555.5 631.4 567 625.6 578.1 618.7 590 613.2 602.9 611.8 615.9 613.6 622.4 614.4M493.3 333.3 493.6 346 493.8 358.8 494.1 371.5 494.3 384.2 494.4 397 494.5 409.7 494.6 422.4 494.6 435.1 494.3 447.9 493.9 460.6 494.2 473.3 495.2 486 496.6 498.7 498.2 511.3 500.5 523.8 502.9 536.3 504.5 549 505.9 561.6 506.3 574.3 503.9 586.8 499 598.5 494.7 610.5 491.5 622.8 490 629M495 334.5 495.5 347.2 496.2 359.9 496.9 372.6 497.4 385.3 497.5 397.7 497.4 410 497.5 422.4 498 435.1 498.1 447.9 497.9 460.7 498.1 473.6 499.1 486.6 500.7 499.7 502.6 512.6 504.8 525.1 506.9 537.4 508.6 549.8 510.4 562.4 511.3 575 509.4 587.2 504.8 598.6 500.8 610.4 498 622.9 496.6 629.3M496.6 335.9 496.4 348.6 497 361.3 499.5 374.5 501.9 386.9 502 398.1 500.3 409 499.6 421.1 501 434.9 502.4 448.6 501.8 461 501.1 472.8 502.6 485.9 506.2 500.7 509 515.3 509.2 528 508.6 539.2 510 550.7 514.6 563.3 518.4 576.1 516.8 587.8 510.7 598.3 505.9 609.8 503.9 622.8 503.1 629.5M498.5 336.7 499.5 349.2 500.3 361.8 501.7 374.4 503.3 386.8 504.3 398.7 504.3 410.7 504.2 423.2 504.5 436.3 504.8 449.4 504.9 461.9 505.7 474.2 507.6 487 510 500.5 511.9 514 513.3 526.8 514.7 538.9 516.8 551 520 563.2 522.2 575.6 520.7 587.6 516.1 598.9 512.5 610.8 510.6 623.3 509.7 629.8M500.6 336.6 504.6 348.4 506.2 360.6 504.2 372.5 502.2 385.1 503.5 399.3 507.4 414.2 510 427.5 509.4 438.8 507.9 450.1 508.6 463.1 510.9 476.9 511.8 489.1 511 499.3 512.2 509.6 518.1 522.1 525.4 536.2 528.2 549.9 526.1 562 522.8 573.9 521.2 587 520.8 600.3 520.4 612.8 518.1 624.4 516.2 630M502.6 335.9 507.6 347 509.8 359 507.7 371.3 504.7 384.5 504.8 399.3 508.6 414.5 512.7 428.2 514.5 439.9 514.2 451.3 513.7 463.9 513.6 477 513.1 488.6 513.3 498.4 516.9 508.4 524.7 520.4 532.3 534.2 534.3 548 531 560.9 526.9 573.8 525.2 587.5 525.7 600.8 526.5 613.3 524.8 624.9 522.8 630.3M504.6 335 507.4 346.1 509.4 358.4 511.2 372 512.2 385.5 511.2 397.9 510.5 410 512.9 423.3 517.6 437.6 520.4 451.3 518.7 463 515.3 473.5 515.2 485.2 520.1 498.7 526.4 512.4 530.3 524.5 531.3 535.7 532 547.7 534.4 561.5 536.5 575.6 535.3 588.5 531.9 599.8 530.4 611.6 530.3 624.3 529.3 630.5M506.4 334.1 507.7 346.3 509.4 358.9 513.5 372.5 517.8 385.1 518.3 395.6 516.1 405.7 515.8 418.1 519.1 433.1 522 447.8 521.6 459.8 520.1 470.6 522.2 483.7 528.1 499.9 532.5 516.1 532.3 529.2 530 539.7 531.5 550.7 538.4 563.5 544.8 576.7 544.3 588.3 538.9 598.6 535.7 610.1 535.9 623.7 535.9 630.8M508.3 333 511.4 346.2 513.7 358.9 515.1 371 517.5 382.5 520.4 394.2 522.5 406.2 522.6 418.2 521.3 430.2 521 443 523.5 456.9 527.9 471.6 531.3 486.3 532.1 500.4 531.7 514.4 533 528.2 536.4 541.6 540.5 553.8 544.1 564.8 546.5 575.6 546.7 587 545.3 598.8 544.1 611 543 624 542.4 631.2M510.1 331.9 515.9 344.3 519.5 356.6 518.2 368.1 517 380.2 519.8 394.5 525.1 409.4 527.3 422 525.2 432 523.6 442.9 527.2 457.6 533.5 474.1 535.9 488.4 533.4 499.2 532.1 509.5 537.6 522.7 546.6 537.9 551.3 551.9 549.9 563.2 547.1 574 547.5 586.7 550.4 600.3 552.1 613.1 550.5 625.1 549 631.5M511.9 330.8 517.3 341 521.5 353 522.7 366.2 522.7 380.4 523 395.2 524.4 409.9 526.3 423.4 528.3 435.9 530.2 448.2 532.4 460.9 534.6 473.8 536.3 485.8 537.8 496.5 540.7 507.2 545.6 518.8 550.7 531.8 553.4 545.7 554.2 559.7 554.3 573.9 554.7 588 555.5 601.2 556.6 613.5 556.4 625.6 555.5 631.4M513.6 329.6 516.6 338.7 520.4 350.7 526.1 365.6 530.9 380.7 530.3 393.9 526.4 406.2 525.3 420.2 529.4 436 534.3 450.6 535.9 461.5 536 470.3 539.3 480.8 546.3 494.1 551.3 507.7 551 518.9 548.4 529 550 541.4 557.7 557 565.1 573.4 565.8 587.5 561.6 599.2 559.6 611 561 623.8 561.8 629.7M515.1 328.1 518 338.7 521.3 350.9 526.9 364.7 533 378 535.1 390 532.8 401.7 530.3 414.8 530.7 429.5 533.6 443.7 537.2 455.6 541.3 466.3 546.8 478.4 551.9 492.6 553.3 507 550.8 519.5 548.8 530.5 552.3 542.4 561.4 555.9 569.5 569.9 570.8 582.7 567.1 594.2 564.8 606.1 565.8 619.1 567 625.6M516.5 326.6 522.3 339 526.2 351.2 527.4 362.7 529.7 373.9 534 386.3 538 399.3 538.4 411.2 535.7 422 535 433.7 539.9 448.1 547.7 464.1 552.4 479 551.6 491.8 549.4 504.3 551.4 518.1 557.3 532.5 562.9 545.1 566 555.5 567.6 565.6 569.4 577.2 571.3 589.8 572.8 602.2 572.6 614.8 572.3 621.8M517.9 324.9 525.9 337.1 530.8 349 530.1 360.2 529.1 371.6 531.9 384.6 537.7 398 541.9 409.7 542.6 419.6 542.6 430.7 545.6 445.4 549.8 462.2 551.2 477.3 549.8 489.5 550.8 501.1 557.8 514.5 566.9 529.1 571.5 542.2 570.2 552.6 568.1 562.6 569.6 574.2 574.7 586.9 579.1 599.3 579.4 611.7 578.1 618.7M519.3 323.4 526.8 333.3 532 344.9 533.9 358 534.4 371.2 534.3 383.9 535.8 396.4 540.4 409.1 546.7 422.3 550.7 435.3 550.8 447.5 548.8 459.4 548.7 471.9 553 485 559.9 497.9 566.5 509.9 570.5 521.5 572.4 533.8 573.8 547 575.1 560.3 576.4 573.1 578.5 584.9 582.2 596.6 584.5 609.2 583.9 615.7M520.9 322 527.4 330.6 532.1 341.9 536.5 356 539.9 370.1 539.9 382.8 538.8 395.1 541.2 408.9 547.5 424.3 552.6 438.4 553 448.9 551.1 457.5 553.1 467.8 560.3 480.9 567.9 494.5 571.2 506 571 516.3 572.7 528.1 578.2 542.6 583.5 557.8 584.8 571.3 584 583 586 594.8 589.4 607.4 590 613.2M522.8 321.1 530.2 330.3 534.9 341.7 537.8 354.6 541 367.7 543.7 380.9 545.6 394.4 547.2 408.2 549.1 421.8 551.4 434.7 554.4 446.2 557.9 457 562 468 566 479.8 569.3 492.2 572.1 504.5 575 516.8 578.9 529.2 583.6 542.1 587.3 555.4 589.1 568.7 590.4 581.5 593.1 593.8 595.7 606 596.3 611.8M524.8 320.4 533.9 331 539.3 342.4 540.1 354.1 541.3 366 545 379.3 550.1 393.3 553.3 406 553.8 417.3 554.5 428.9 558.5 442.2 564.1 456.5 567.6 469.7 568.2 481.2 569.4 492.8 574.7 505.9 582 519.9 587.1 532.8 588.6 544 589 555.1 591.3 567.5 596.2 580.7 601.1 593.2 603.1 605.4 602.9 611.8M526.9 320 536.1 330.5 542.3 342 544 354.2 545.1 366.3 547.4 378.9 551.4 391.6 555.6 403.8 558.9 415.4 561.4 427.6 564.4 441.1 567.1 455.5 569.1 469.4 571 482.4 574.5 495 580.5 507.9 586.9 521 591.1 533.5 592.7 545 593.8 556.5 596.5 568.5 601.6 580.9 607.1 593 609.8 605.6 609.4 612.6M529 319.5 537.6 329.2 543.9 340.7 547.6 353.8 550.5 366.7 552.1 379.1 553.6 391.2 556.8 403.7 561.5 416.9 565.8 430.1 568.5 442.7 570 455.2 572.5 468.2 576.8 482 581.7 495.5 586 508 589.3 519.8 592.8 531.9 597.1 544.6 601.1 557.5 604.1 570 607.4 581.9 612 593.8 615.5 606.7 615.9 613.6M531 319 540.2 328.5 546.7 340 550.1 352.8 553 365.7 555.6 378.7 558.1 391.8 560.9 404.7 564 417.6 567.4 430.4 571.3 443.1 574.9 455.9 578.4 468.7 581.9 481.5 585.5 494.3 589.5 506.9 593.8 519.4 598.1 532 602.3 544.6 605.9 557.3 609.1 570.2 613.2 582.8 618.3 595.1 621.9 607.8 622.4 614.4"/>
<path id="mh" d="M470 152 474.9 153.3 479.9 154.5 484.8 155.8 489.7 157.4 494.3 159.4 498.9 161.8 503.3 164.3 507.8 166.7M465.7 151.6 470.9 153.2 476 154.9 480.6 156.2 485.9 158.6 490.7 160.8 495.2 163.3 499.8 166.2 504.4 168.8M461.5 151 466.7 153 472.1 155.1 476.5 156.7 481.8 159.5 487.1 162 491.7 164.9 496.1 168.1 501 170.9M457.2 150.6 462.5 152.9 468.2 155.3 472.5 157.5 477.5 160.5 483.5 163.2 488.1 166.6 492.4 169.9 497.6 172.9M452.9 150.6 458.2 153.3 464.2 155.8 468.7 158.6 473.2 161.6 479.9 164.5 484.6 168.4 488.7 171.7 494.2 175M448.7 151.2 454 154.2 460.1 156.6 464.9 160.2 469 163 476.2 166.1 481.1 170.4 485 173.7 490.8 177.1M444.4 152.1 449.8 155.3 456.1 157.7 461.1 162 465 164.4 472.5 168.2 477.6 172.4 481.5 175.9 487.5 179.3M440.3 153.1 445.7 156.5 452 159 457.3 164 461.5 165.8 468.7 170.6 474.1 174.4 478.3 178.3 484.2 181.7M436.2 154.4 441.8 158 448 160.6 453.4 166 458.4 167.5 464.9 173.4 470.6 176.3 475.3 181 481.2 184.2M432.2 155.9 438.1 159.8 444 162.6 449.5 168.1 455.6 169.6 461.1 176.4 467.1 178.4 472.5 183.8 478.3 187M428.4 158 434.5 162 440.2 165.1 445.9 170.3 453 172.3 457.5 179.4 463.6 180.9 469.9 186.7 475.5 189.8M424.9 160.5 431.2 164.7 436.6 168.1 442.6 172.5 450.4 175.7 454.2 182.1 460.3 183.9 467.5 189.7 472.8 192.8M421.8 163.5 428.1 167.7 433.2 171.6 439.9 174.9 447.8 179.6 451.2 184.7 457.2 187.5 465.1 192.7 470.2 195.8M419.1 166.8 425.3 170.9 430.2 175.3 437.6 177.6 445 183.9 448.5 187.1 454.4 191.5 462.7 195.7 467.7 198.9M416.6 170.3 422.6 174.2 427.5 179.1 435.7 180.7 442.2 188.1 446.1 189.6 452 195.8 460.2 198.6 465.3 202.1M414.5 174 420.2 177.7 425.2 183 433.9 184.2 439.4 192.1 443.8 192.4 449.9 200.1 457.7 201.7 462.9 205.3M412.6 177.8 418.1 181.3 423.2 186.8 432.1 188.3 436.9 195.6 441.6 195.9 448 204 455.2 204.9 460.7 208.6M410.9 181.8 416.3 185.1 421.6 190.4 430.1 192.7 434.6 198.7 439.6 200 446.3 207.5 452.7 208.4 458.4 211.9M409.3 185.8 414.8 189 420.3 194 427.8 197.3 432.6 201.6 437.7 204.6 444.6 210.6 450.4 212.1 456.2 215.2M408.1 189.9 413.6 193.2 419.3 197.7 425.5 201.9 430.8 204.7 436 209.4 442.8 213.5 448.1 216 454.1 218.6M406.9 194 412.6 197.6 418.5 201.3 423.2 206.2 429.2 208.1 434.6 214.2 441 216.3 446 220.1 452.1 222M405.9 198.2 411.7 202.1 417.7 205.1 421.2 210.3 427.6 212 433.5 218.7 439.2 219.3 444.1 224.2 450.2 225.5M405 202.4 410.8 206.7 417 209.1 419.5 214.2 425.9 216.4 432.7 222.8 437.5 222.9 442.4 228.3 448.5 229.2M404.2 206.6 409.9 211.2 416.2 213.2 418.3 218 424.3 221.1 431.9 226.5 436 226.9 440.9 232.3 447.1 232.9M403.4 210.8 409 215.5 415.3 217.4 417.5 222 422.8 225.7 431.1 230 434.9 231.3 439.6 236.2 445.8 236.7M402.6 215.1 408 219.6 414.3 221.7 417.1 226.2 421.5 230.1 430.2 233.7 434 236 438.5 240 444.8 240.5M401.9 219.3 407 223.5 413.3 226 416.8 230.7 420.5 234.2 429 237.6 433.5 240.7 437.7 243.7 444.1 244.4M401.1 223.5 406 227.3 412.1 230.4 416.5 235.3 420 238 427.8 241.8 433.1 245.3 437.1 247.5 443.5 248.4M400.3 227.7 405.2 231.1 411 234.9 416.1 239.8 419.8 241.8 426.4 246.2 432.7 249.7 436.8 251.3 443.1 252.3M399.5 232 404.4 235 409.8 239.4 415.5 244 419.9 245.9 425.2 250.5 432.1 253.9 436.6 255.3 442.7 256.3M398.7 236.2 403.7 239.1 408.7 243.9 414.9 247.9 420 250.4 424.2 254.8 431.3 258.1 436.6 259.3 442.5 260.3M397.9 240.4 403.1 243.5 407.7 248.5 414.2 251.4 420.1 255.3 423.5 258.8 430.3 262.2 436.8 263.5 442.3 264.3M397.2 244.6 402.5 248 406.8 253 413.6 254.7 420.1 260.5 423 262.6 429.4 266.4 436.9 267.7 442.1 268.3M396.5 248.9 402 252.5 406.1 257.5 413.1 258.3 419.8 265.6 422.8 266.5 428.6 270.6 437 271.9 442 272.3M396 253.1 401.5 257.1 405.6 261.7 412.7 262.2 419.4 270.3 422.7 270.5 428.1 274.8 437 276.2 442 276.2M395.6 257.4 401.1 261.5 405.4 265.8 412.5 266.7 419 274.5 422.8 274.8 428.1 279 437 280.4 442.1 280.2M395.5 261.7 401 265.8 405.5 269.7 412.6 271.8 418.7 278.1 422.9 279.5 428.6 283 436.9 284.5 442.3 284.2M395.8 266 401.2 270 406.1 273.6 412.9 277.1 418.6 281.2 423.3 284.4 429.4 287 436.9 288.7 442.7 288.2M396.5 270.2 401.8 274.1 407 277.4 413.4 282.5 418.7 284.3 423.8 289.4 430.5 290.9 437 292.8 443.2 292.1M397.6 274.4 402.8 278.1 408.3 281.3 414.1 287.4 419.1 287.7 424.5 294.1 431.6 294.9 437.3 297 443.7 296.1M398.8 278.5 404 282.2 409.7 285.3 414.9 291.9 419.7 291.6 425.5 298.5 432.6 298.9 437.7 301.1 444.3 300M400.2 282.6 405.3 286.4 411.1 289.5 415.7 295.8 420.5 296.1 426.8 302.5 433.5 303 438.4 305.2 445.1 303.9M402.2 286.3 407.3 290.3 413 293.6 417.2 299.1 421.9 300.8 428.5 306.1 434.6 307 439.6 309.1 446.2 307.8M404.8 289.7 409.8 293.9 415.3 297.5 419 302 423.6 305.4 430.3 309.4 435.7 311.1 440.8 313 447.2 311.7M406.1 293.7 411 298 416.3 301.8 420 305.4 424.7 310.2 431.4 313 436.4 315.3 441.9 317 448.1 315.5M403.6 297.1 409 301.5 414.6 305.6 418.8 308.8 424.1 314.4 430.9 316.6 436.3 319.4 442.6 320.8 449.1 319.4M400.2 299.7 406 304.1 412 308.6 417.1 312 423 317.7 430 320.2 436.1 323.1 443.1 324.6 450.1 323.3M396.5 301.9 402.9 306.6 409.3 311.3 415.3 315.3 421.8 320.6 428.9 323.8 435.9 326.8 443.5 328.3 451 327.1M393 304.4 399.8 309.2 406.7 314.1 413.6 318.8 420.6 323.5 427.9 327.6 435.8 330.3 444 332.1 452 331M470 152 461.5 151 452.9 150.6 444.4 152.1 436.2 154.4 428.4 158 421.8 163.5 416.6 170.3 412.6 177.8 409.3 185.8 406.9 194 405 202.4 403.4 210.8 401.9 219.3 400.3 227.7 398.7 236.2 397.2 244.6 396 253.1 395.5 261.7 396.5 270.2 398.8 278.5 402.2 286.3 406.1 293.7 400.2 299.7 393 304.4M472.5 152.6 463.9 152.2 455.4 151.9 447.1 153.3 438.9 155.9 431.3 159.9 425 165.6 420.2 172.4 416.1 180 412.5 188.1 409.5 196.3 407.2 204.1 405.6 212 404.2 220.5 402.7 229.7 401.3 238.7 400.1 247.1 399.1 255 398.7 263.3 399.4 272 401.3 280.4 404.5 288.2 408.3 295.6 402.9 301.8 396.4 306.8M474.9 153.3 466.7 153 458.2 153.3 449.8 155.3 441.8 158 434.5 162 428.1 167.7 422.6 174.2 418.1 181.3 414.8 189 412.6 197.6 410.8 206.7 409 215.5 407 223.5 405.2 231.1 403.7 239.1 402.5 248 401.5 257.1 401 265.8 401.8 274.1 404 282.2 407.3 290.3 411 298 406 304.1 399.8 309.2M477.4 153.9 469.6 153.8 461.2 154.7 452.8 157 444.9 159.8 437.6 163.7 430.9 169.6 424.7 176.5 420 183.5 417.1 190.5 415.8 198.8 414.6 208.5 412.6 218.1 410.1 226 407.9 232.7 406.1 240.1 404.6 249.5 403.4 259.5 403 268.3 404.2 276 406.8 283.7 410.3 292.1 413.8 300.3 409.1 306.5 403.3 311.7M479.9 154.5 472.1 155.1 464.2 155.8 456.1 157.7 448 160.6 440.2 165.1 433.2 171.6 427.5 179.1 423.2 186.8 420.3 194 418.5 201.3 417 209.1 415.3 217.4 413.3 226 411 234.9 408.7 243.9 406.8 253 405.6 261.7 405.5 269.7 407 277.4 409.7 285.3 413 293.6 416.3 301.8 412 308.6 406.7 314.1M482.4 155.1 474.3 156.1 466.7 157 459.1 159.3 450.9 162.9 442.7 167.6 436 173.4 431.4 180 427.7 187.9 424.1 196.5 420.7 204.4 418.2 211.2 416.7 218.2 415.6 227.1 413.8 237.5 411.6 247.2 409.8 254.9 408.8 261.9 408.9 270.2 410.2 279.7 412.3 288.7 415.2 296.2 418.3 303.2 414.6 310.2 410.2 316.4M484.8 155.8 476.5 156.7 468.7 158.6 461.1 162 453.4 166 445.9 170.3 439.9 174.9 435.7 180.7 432.1 188.3 427.8 197.3 423.2 206.2 419.5 214.2 417.5 222 416.8 230.7 416.1 239.8 414.9 247.9 413.6 254.7 412.7 262.2 412.6 271.8 413.4 282.5 414.9 291.9 417.2 299.1 420 305.4 417.1 312 413.6 318.8M487.3 156.5 479 158 470.6 160.2 462.7 163.6 455.7 167 449.6 171 444.3 176.9 439.4 184.3 434.9 192 430.6 199.3 426.2 206.8 422.2 215.2 419.2 224.4 417.9 233.1 417.8 240.9 417.9 248.6 417.4 257.1 416.4 266.1 415.9 275.1 416.3 283.5 417.3 291.8 419.3 300 422 308 419.8 314.9 417.1 321.1M489.7 157.4 481.8 159.5 473.2 161.6 465 164.4 458.4 167.5 453 172.3 447.8 179.6 442.2 188.1 436.9 195.6 432.6 201.6 429.2 208.1 425.9 216.4 422.8 225.7 420.5 234.2 419.8 241.8 420 250.4 420.1 260.5 419.4 270.3 418.7 278.1 418.7 284.3 419.7 291.6 421.9 300.8 424.7 310.2 423 317.7 420.6 323.5M492 158.3 484.5 160.8 476.5 163 468.6 166.1 461.5 170.4 455.4 176.1 449.8 182.5 444.3 188.8 439 195.2 434.7 202.5 431.8 211.1 429.6 220.2 427.3 228.6 424.7 236.1 422.7 243.6 421.8 252.2 421.6 261.5 421.4 270.7 420.9 279 421.1 286.9 422.3 295 425 303.5 428.1 311.9 426.5 319.1 424.1 325.7M494.3 159.4 487.1 162 479.9 164.5 472.5 168.2 464.9 173.4 457.5 179.4 451.2 184.7 446.1 189.6 441.6 195.9 437.7 204.6 434.6 214.2 432.7 222.8 431.1 230 429 237.6 426.4 246.2 424.2 254.8 423 262.6 422.7 270.5 422.9 279.5 423.8 289.4 425.5 298.5 428.5 306.1 431.4 313 430 320.2 427.9 327.6M496.6 160.6 489.4 163.5 482.6 166.3 475.6 169.9 468 174.5 460.2 179.9 453.5 186.1 448.5 192.9 444.6 200.6 441.1 208.5 437.8 215.7 435.2 222.2 433.4 229.4 431.9 238.3 430 248.3 427.6 257.6 425.6 265.4 424.6 272.8 425.2 281.1 427 290.1 429.2 298.8 431.8 306.5 434.1 314 433.1 321.7 431.8 329.1M498.9 161.8 491.7 164.9 484.6 168.4 477.6 172.4 470.6 176.3 463.6 180.9 457.2 187.5 452 195.8 448 204 444.6 210.6 441 216.3 437.5 222.9 434.9 231.3 433.5 240.7 432.7 249.7 431.3 258.1 429.4 266.4 428.1 274.8 428.6 283 430.5 290.9 432.6 298.9 434.6 307 436.4 315.3 436.1 323.1 435.8 330.3M501.1 163 493.9 166.2 486.4 170.3 479.3 174.9 472.8 179.3 467 183.9 461.5 189.8 456.3 196.9 451.7 204 447.6 210.7 443.6 217.7 439.8 226 436.8 235.1 435.1 243.4 434.6 250.6 434.2 257.7 433.5 266 432.7 275.2 432.8 284.1 433.8 292.3 435.1 300.3 436.9 308.5 438.9 316.5 439.4 323.9 439.8 331.3M503.3 164.3 496.1 168.1 488.7 171.7 481.5 175.9 475.3 181 469.9 186.7 465.1 192.7 460.2 198.6 455.2 204.9 450.4 212.1 446 220.1 442.4 228.3 439.6 236.2 437.7 243.7 436.8 251.3 436.6 259.3 436.9 267.7 437 276.2 436.9 284.5 437 292.8 437.7 301.1 439.6 309.1 441.9 317 443.1 324.6 444 332.1M505.5 165.5 498.5 169.8 491.4 173.3 484.4 177.1 478.2 182.2 472.7 188.5 467.8 194.8 463 200.9 458.1 207.3 453.3 214.4 448.9 221.8 445.5 229 442.9 236.1 441 243.7 439.8 252.2 439.4 261.1 439.7 269.5 439.9 277.3 440 284.9 440.2 292.9 440.9 301 442.8 309 445.2 317 446.7 324.9 448.1 332.5M507.8 166.7 501 170.9 494.2 175 487.5 179.3 481.2 184.2 475.5 189.8 470.2 195.8 465.3 202.1 460.7 208.6 456.2 215.2 452.1 222 448.5 229.2 445.8 236.7 444.1 244.4 443.1 252.3 442.5 260.3 442.1 268.3 442 276.2 442.3 284.2 443.2 292.1 444.3 300 446.2 307.8 448.1 315.5 450.1 323.3 452 331"/>
<path id="ml" d="M392.8 304.4 397.6 307.8 402.4 311.1 407.3 314.5 412.1 317.7 417 321.1 421.9 324.3 427 327.2 432.4 329.4 438.1 330.9 443.9 331.8 449.8 332.1 455.6 331.8 461.5 331.2 464.4 331M393.8 309 398.7 312.3 403.5 315.4 408 318.8 412.7 322.5 418.1 325.8 423.6 328.6 428.3 331.2 432.9 333.6 438.5 335.3 445 336.2 451.3 336.3 456.7 336 462.3 335.5 465.4 335.3M394.8 313.6 399.7 316.9 404.6 319.9 409.1 323.3 413.8 327.1 419.1 330.4 424.6 333 429.4 335.5 434 337.9 439.5 339.7 445.9 340.5 452.3 340.6 457.8 340.3 463.3 339.9 466.3 339.6M395.8 318.3 400.7 321.5 405.6 324.4 410.3 327.9 415 331.5 419.9 334.8 425.3 337.4 430.5 339.8 435.4 342.2 440.6 344.1 446.7 344.8 453.1 344.8 458.9 344.5 464.3 344.2 467.3 343.9M396.8 322.9 401.5 326.1 406.5 329.1 411.6 332.4 416.2 335.9 420.7 339.1 425.7 341.7 431.5 344.2 436.9 346.6 441.9 348.4 447.5 349.1 453.8 349.1 459.9 348.8 465.4 348.5 468.3 348.2M397.6 327.6 402.2 330.7 407.3 333.9 412.8 337.1 417.5 340.3 421.3 343.4 426 346.1 432.3 348.7 438.4 351 443.2 352.7 448.1 353.4 454.4 353.3 460.9 353 466.5 352.8 469.2 352.5M398.3 332.2 402.8 335.4 408 338.7 414 341.8 418.7 344.7 421.9 347.6 426.3 350.5 433.1 353.2 439.9 355.5 444.6 357 448.8 357.6 454.9 357.6 461.8 357.3 467.6 357.1 470.2 356.9M399 336.9 403.4 340.1 408.8 343.5 415.1 346.5 419.7 349.1 422.4 351.8 426.5 354.9 433.8 357.7 441.3 360 445.9 361.3 449.6 361.9 455.5 361.8 462.6 361.6 468.6 361.4 471.1 361.2M399.7 341.6 404.1 344.7 409.6 348.4 416 351.3 420.7 353.4 423.1 356 426.9 359.2 434.5 362.3 442.5 364.5 447.3 365.6 450.5 366.1 456 366.1 463.3 365.9 469.6 365.7 472.1 365.5M400.3 346.3 404.7 349.4 410.4 353.2 416.9 356.1 421.5 357.8 423.7 360.2 427.5 363.6 435.1 366.9 443.5 369 448.5 369.9 451.6 370.3 456.7 370.4 464 370.2 470.5 370 473 369.8M400.9 351 405.4 354 411.2 358 417.6 360.8 422.1 362.3 424.5 364.4 428.3 367.9 435.7 371.5 444.2 373.5 449.7 374.1 452.8 374.4 457.5 374.7 464.6 374.6 471.4 374.3 474 374.1M401.3 355.7 406.1 358.7 412 362.8 418.1 365.6 422.5 366.7 425.3 368.6 429.2 372.3 436.3 376.1 444.7 378 450.7 378.4 454.1 378.6 458.4 379 465.2 379 472.3 378.6 474.9 378.4M401.7 360.4 406.6 363.3 412.6 367.6 418.4 370.3 422.9 371.2 426.1 372.9 430.2 376.7 436.8 380.7 445 382.5 451.6 382.6 455.5 382.8 459.3 383.4 465.7 383.4 473.1 382.9 475.9 382.7M402 365.1 407.1 368 413.2 372.3 418.6 375 423.1 375.7 427 377.3 431.2 381.2 437.2 385.2 445.2 386.9 452.4 386.8 456.8 387 460.4 387.8 466.3 387.8 473.9 387.2 476.9 387M402.1 369.9 407.5 372.7 413.5 376.9 418.7 379.6 423.3 380.3 427.8 381.8 432.2 385.7 437.6 389.7 445.3 391.2 453.1 391 458.1 391.3 461.4 392.2 467 392.1 474.7 391.5 477.9 391.4M402.1 374.6 407.6 377.4 413.6 381.5 418.6 384.1 423.5 384.8 428.6 386.4 433 390.2 438 394.1 445.4 395.4 453.7 395.2 459.3 395.7 462.5 396.6 467.8 396.5 475.6 395.7 478.9 395.7M402 379.3 407.7 382.1 413.5 386 418.6 388.6 423.9 389.4 429.3 391.1 433.7 394.8 438.3 398.4 445.7 399.5 454.3 399.4 460.3 400.1 463.6 401.1 468.7 400.8 476.5 400 479.9 399.9M401.9 384.1 407.5 386.8 413.2 390.5 418.5 393 424.3 393.9 430 395.8 434.3 399.5 438.7 402.7 446 403.5 454.9 403.5 461.1 404.5 464.7 405.6 469.8 405.2 477.5 404.2 481 404.2M401.6 388.8 407.3 391.5 412.8 395 418.4 397.3 424.8 398.5 430.5 400.7 434.6 404.2 439.1 406.9 446.6 407.5 455.4 407.7 461.8 409 465.7 410.1 471 409.4 478.6 408.4 482.1 408.5M401.4 393.5 407 396.2 412.2 399.4 418.4 401.6 425.4 403.1 431 405.6 434.9 409 439.6 411.1 447.2 411.4 455.9 411.9 462.2 413.6 466.7 414.6 472.3 413.7 479.7 412.6 483.2 412.8M401.1 398.2 406.6 400.9 411.6 403.8 418.4 405.8 426 407.7 431.5 410.6 435 413.7 440 415.2 448 415.3 456.3 416.2 462.5 418.1 467.6 419.1 473.7 417.9 480.8 416.8 484.2 417.1M400.8 403 406.2 405.6 411.1 408.2 418.4 410.1 426.5 412.3 431.8 415.6 435.2 418.4 440.6 419.3 448.8 419.2 456.7 420.4 462.7 422.7 468.5 423.5 475.1 422.2 481.9 421.1 485.2 421.4M400.5 407.7 405.9 410.4 410.6 412.5 418.4 414.4 426.9 417 432 420.5 435.4 423.1 441.2 423.4 449.5 423.3 456.9 424.8 462.8 427.2 469.3 427.9 476.4 426.4 482.8 425.4 486.2 425.7M400.2 412.4 405.6 415 410.2 416.9 418.4 418.7 427.1 421.7 432.2 425.4 435.6 427.7 441.8 427.6 450 427.4 456.9 429.2 462.9 431.8 470.1 432.2 477.5 430.7 483.7 429.7 487 430M399.9 417.1 405.3 419.7 410 421.3 418.2 423.1 426.9 426.5 432.2 430.3 436.1 432.1 442.5 431.7 450.3 431.7 456.8 433.8 463 436.2 470.9 436.5 478.5 434.9 484.4 434.1 487.7 434.4M399.5 421.8 405.1 424.4 409.9 425.7 417.9 427.6 426.5 431.3 432.1 435.1 436.7 436.5 443.2 435.9 450.4 436.1 456.5 438.4 463.2 440.6 471.7 440.6 479.3 439.2 485 438.5 488.4 438.8M399.1 426.6 405 429 410.1 430.1 417.6 432.2 425.7 436.1 432 439.7 437.5 440.7 443.9 440.1 450.3 440.6 456.2 443 463.6 444.9 472.5 444.7 480 443.5 485.5 443 489 443.1M398.7 431.3 404.9 433.6 410.3 434.5 417.1 436.8 424.7 441 431.9 444.3 438.5 444.9 444.6 444.3 449.9 445.4 455.8 447.7 464 449.1 473.3 448.7 480.4 447.9 485.9 447.5 489.5 447.5M398.3 436 404.9 438.2 410.7 439 416.7 441.6 423.6 445.8 431.6 448.8 439.5 448.9 445.3 448.7 449.5 450.2 455.3 452.4 464.5 453.2 474.1 452.7 480.8 452.2 486.2 452.1 490 451.9M397.9 440.7 405 442.8 411.2 443.6 416.2 446.4 422.3 450.7 431.4 453.1 440.6 452.9 446 453.1 449.1 455.1 454.9 457.1 465 457.3 474.8 456.6 481 456.6 486.5 456.6 490.4 456.3M397.5 445.4 405 447.4 411.7 448.2 415.8 451.2 421.1 455.4 431 457.4 441.5 456.9 446.7 457.5 448.7 460.1 454.6 461.8 465.6 461.3 475.4 460.6 481.2 461 486.8 461.2 490.9 460.7M397.1 450.1 404.9 452 412.1 452.9 415.4 456.1 420.1 460.1 430.7 461.6 442.2 461 447.2 462 448.5 465 454.5 466.4 466 465.3 475.8 464.5 481.4 465.3 487.2 465.7 491.4 465.1M396.6 454.8 404.7 456.6 412.3 457.7 415.2 460.9 419.2 464.7 430.3 465.7 442.6 465.1 447.7 466.6 448.5 469.9 454.6 471 466.4 469.4 476.2 468.5 481.6 469.7 487.7 470.2 491.9 469.5M396.1 459.5 404.4 461.3 412.4 462.5 415.1 465.8 418.8 469.2 429.9 469.9 442.7 469.3 448 471.3 448.9 474.7 454.9 475.5 466.7 473.5 476.3 472.6 481.8 474.1 488.2 474.7 492.5 473.8M395.6 464.3 404 466 412.2 467.4 415.1 470.6 418.6 473.6 429.4 474 442.3 473.7 448.2 476 449.5 479.4 455.5 479.9 466.7 477.6 476.2 476.8 482.2 478.5 488.8 479.1 493 478.2M395.1 469 403.5 470.7 411.8 472.3 415.2 475.4 418.8 477.9 429 478.2 441.5 478.2 448.2 480.7 450.4 484 456.2 484.2 466.6 481.9 476 481.2 482.6 482.8 489.5 483.5 493.5 482.6M394.6 473.7 402.8 475.4 411.2 477.3 415.5 480.1 419.4 482.2 428.7 482.4 440.5 482.8 448 485.4 451.6 488.4 457.1 488.4 466.4 486.2 475.6 485.6 483 487.2 490.3 487.9 494 487M394.2 478.4 402 480.2 410.4 482.3 415.7 484.8 420.2 486.3 428.4 486.6 439.2 487.5 447.7 490.2 452.8 492.7 458.2 492.5 466.1 490.6 475.2 490.1 483.5 491.6 491.1 492.2 494.6 491.4M393.7 483.1 401.3 485 409.5 487.3 416 489.4 421.2 490.4 428.2 490.9 437.8 492.3 447.3 494.9 454.1 496.9 459.3 496.5 465.9 495 474.8 494.8 484 496 491.9 496.5 495.1 495.8M393.3 487.8 400.5 489.8 408.6 492.3 416.3 494 422.3 494.6 428.2 495.3 436.5 497.2 446.9 499.6 455.3 501 460.4 500.6 465.7 499.5 474.4 499.5 484.6 500.4 492.6 500.7 495.6 500.2M392.9 492.5 399.9 494.5 407.7 497.2 416.5 498.5 423.4 498.8 428.3 499.8 435.4 502.1 446.4 504.3 456.3 505 461.5 504.5 465.8 504 474.2 504.2 485.1 504.8 493.4 504.9 496.2 504.5M392.5 497.2 399.3 499.3 406.8 502 416.5 503 424.3 503 428.6 504.3 434.6 507 445.9 508.9 457.1 509 462.5 508.5 466.1 508.6 474.3 509 485.6 509.2 494.1 509.1 496.8 508.9M392.1 501.9 398.8 504 406.1 506.8 416.4 507.5 425 507.3 429 508.9 434.2 511.8 445.4 513.5 457.4 513 463.4 512.5 466.7 513.1 474.6 513.8 486.1 513.6 494.8 513.3 497.5 513.3M391.7 506.7 398.4 508.8 405.5 511.4 416.1 512 425.4 511.7 429.6 513.5 434.2 516.6 445.1 517.9 457.5 517 464.2 516.5 467.6 517.6 475.3 518.5 486.6 518 495.4 517.5 498.3 517.6M391.3 511.4 398.1 513.4 405.1 516 415.7 516.5 425.6 516.2 430.3 518.1 434.6 521.3 444.8 522.3 457.2 521 464.8 520.6 468.9 522.1 476.2 523.2 487.1 522.4 496.1 521.7 499.2 521.9M390.8 516.1 397.9 518.1 404.7 520.6 415.2 521 425.4 520.8 431 522.8 435.4 525.9 444.6 526.7 456.7 525.1 465.3 524.7 470.3 526.5 477.4 527.8 487.6 526.9 496.7 526 500.1 526.3M390.3 520.8 397.7 522.7 404.5 525 414.5 525.5 425 525.5 431.6 527.5 436.3 530.4 444.4 530.9 455.9 529.3 465.5 528.9 471.8 531 478.6 532.3 488 531.3 497.2 530.2 501 530.6M389.7 525.5 397.4 527.3 404.3 529.4 413.7 530.1 424.4 530.2 432.2 532.2 437.3 534.8 444.3 535.2 455 533.5 465.6 533.2 473.2 535.4 479.9 536.8 488.3 535.7 497.6 534.5 501.8 534.9M389 530.2 397.1 531.9 404.1 533.8 412.9 534.6 423.6 535 432.5 536.9 438.1 539.2 444.2 539.4 454 537.8 465.5 537.6 474.4 539.8 480.9 541.2 488.5 540.1 497.9 538.8 502.5 539.3M388.2 534.8 396.6 536.4 403.7 538.2 412 539.1 422.6 539.8 432.5 541.5 438.8 543.5 444.1 543.6 453.1 542.2 465.3 542.1 475.4 544.2 481.8 545.6 488.7 544.4 498.1 543.2 503 543.7M387.3 539.5 396 541 403.3 542.6 411.3 543.7 421.7 544.6 432.3 546.2 439.1 547.8 444 547.8 452.5 546.6 465.1 546.6 476 548.6 482.6 549.9 488.9 548.8 498.4 547.6 503.6 548.1M386.3 544.1 395.2 545.5 402.8 547 410.6 548.2 420.9 549.3 431.9 550.8 439.2 552 444 551.9 452.1 551 464.9 551.2 476.4 553 483.2 554.1 489.3 553.1 498.7 552 504.1 552.5M385.2 548.7 394.3 550.1 402.2 551.4 410 552.7 420.2 554 431.2 555.3 438.9 556.3 444 556.1 452 555.4 464.7 555.8 476.5 557.4 483.5 558.3 489.7 557.3 499.1 556.4 504.6 556.8M384.1 553.3 393.3 554.6 401.5 555.9 409.5 557.3 419.5 558.7 430.3 559.9 438.3 560.5 444 560.3 452.2 559.9 464.5 560.4 476.2 561.7 483.6 562.4 490.1 561.6 499.5 560.8 505 561.2M383 557.9 392.1 559.2 400.6 560.4 409.1 561.8 418.9 563.3 429.2 564.3 437.4 564.7 443.9 564.5 452.5 564.4 464.4 565 475.6 566.1 483.5 566.5 490.5 565.8 499.8 565.3 505.2 565.7M381.8 562.5 390.8 563.8 399.7 565 408.7 566.4 418.3 567.8 428 568.8 436.3 568.9 443.9 568.8 453 568.9 464.1 569.6 474.7 570.5 483.1 570.6 490.8 570 500.1 569.8 505.4 570.1M380.6 567.1 389.5 568.3 398.7 569.5 408.2 570.9 417.7 572.4 426.6 573.2 435 573.2 443.7 573 453.4 573.4 463.7 574.3 473.6 574.9 482.4 574.7 490.9 574.3 500.2 574.2 505.3 574.5M379.4 571.6 388.2 572.9 397.7 574.1 407.7 575.5 416.9 576.9 425.1 577.5 433.6 577.4 443.3 577.3 453.5 578 463.1 578.9 472.3 579.2 481.6 578.8 490.7 578.5 499.9 578.7 504.9 578.9M378.1 576.2 386.9 577.4 396.7 578.6 406.9 580.1 415.9 581.4 423.5 581.9 432.1 581.6 442.7 581.6 453.3 582.5 462.2 583.4 470.8 583.4 480.3 582.8 490 582.7 499.2 583.1 504 583.2M376.8 580.8 385.6 581.9 395.5 583.2 405.9 584.6 414.6 585.8 421.8 586.1 430.6 585.8 441.8 585.9 452.5 586.9 460.9 587.8 469 587.5 478.8 586.8 489 586.8 498.1 587.4 502.7 587.4M375.5 585.3 384.2 586.4 394.3 587.7 404.7 589.1 413 590.2 420.1 590.3 429.1 589.9 440.7 590.1 451.4 591.3 459.3 592.1 467.2 591.5 477.2 590.7 487.5 590.9 496.6 591.6 501.1 591.5M374.1 589.8 382.9 590.9 393 592.1 403.2 593.5 411.3 594.5 418.4 594.5 427.8 594 439.5 594.3 449.9 595.6 457.6 596.2 465.4 595.5 475.4 594.6 485.8 594.9 494.9 595.7 499.4 595.6M372.7 594.3 381.6 595.3 391.7 596.5 401.6 597.9 409.5 598.9 416.8 598.7 426.5 598.1 438.1 598.5 448.1 599.9 455.7 600.3 463.8 599.4 473.8 598.5 484 599 493.1 599.8 497.6 599.6M371.2 598.8 380.2 599.8 390.4 601 399.9 602.3 407.6 603.2 415.4 602.9 425.4 602.3 436.6 602.8 446.2 604.1 454 604.4 462.3 603.3 472.3 602.5 482.3 603.1 491.4 603.9 495.8 603.7M369.8 603.3 379 604.3 389.1 605.4 398.2 606.7 405.9 607.5 414.2 607.1 424.5 606.6 435.2 607.1 444.4 608.3 452.4 608.5 461.1 607.4 471 606.7 480.7 607.3 489.8 608.1 494.4 607.9M368.4 607.9 377.7 608.8 387.7 609.8 396.5 611.1 404.3 611.9 413.2 611.5 423.6 610.9 433.9 611.5 442.6 612.5 450.9 612.5 460.1 611.5 469.8 611 479.3 611.6 488.4 612.3 493 612.1M367.1 612.4 376.5 613.3 386.3 614.3 394.9 615.5 402.9 616.2 412.2 615.8 422.7 615.4 432.5 615.8 441 616.6 449.6 616.6 459 615.7 468.7 615.3 477.9 615.9 487.1 616.5 491.8 616.3M365.7 616.9 375.1 617.8 384.8 618.8 393.4 619.9 401.7 620.5 411.2 620.2 421.5 619.9 431 620.2 439.5 620.7 448.3 620.6 458 619.9 467.5 619.7 476.6 620.2 485.8 620.6 490.5 620.5M364.4 621.5 373.7 622.3 383.2 623.3 392 624.2 400.6 624.8 410.2 624.7 420.2 624.4 429.5 624.5 438.1 624.8 447.2 624.6 456.8 624.2 466.2 624.1 475.3 624.5 484.6 624.8 489.3 624.8M363 626 372.2 626.9 381.5 627.8 390.7 628.6 399.9 629 409.2 629.1 418.5 629 427.8 628.8 437 628.7 446.3 628.5 455.6 628.5 464.8 628.6 474.1 628.8 483.4 628.9 488 629M392.8 304.4 394.8 313.6 396.8 322.9 398.3 332.2 399.7 341.6 400.9 351 401.7 360.4 402.1 369.9 402 379.3 401.6 388.8 401.1 398.2 400.5 407.7 399.9 417.1 399.1 426.6 398.3 436 397.5 445.4 396.6 454.8 395.6 464.3 394.6 473.7 393.7 483.1 392.9 492.5 392.1 501.9 391.3 511.4 390.3 520.8 389 530.2 387.3 539.5 385.2 548.7 383 557.9 380.6 567.1 378.1 576.2 375.5 585.3 372.7 594.3 369.8 603.3 367.1 612.4 364.4 621.5 363 626M395.2 306.1 397.3 315.4 399.1 324.6 400.6 333.8 401.8 343 403 352.2 403.9 361.5 404.5 370.9 404.6 380.4 404.4 389.9 404.1 399.5 403.7 409.1 403.1 418.6 402.5 428.1 401.8 437.5 401.1 446.8 400.2 456.1 399.2 465.4 398.2 474.6 397.2 483.9 396.4 493.3 395.7 502.7 395.1 512.1 394.4 521.5 393.4 530.9 391.8 540.2 389.9 549.4 387.5 558.6 385 567.7 382.5 576.8 379.7 585.8 376.9 594.8 374.1 603.8 371.5 612.8 368.9 621.9 367.6 626.4M397.6 307.8 399.7 316.9 401.5 326.1 402.8 335.4 404.1 344.7 405.4 354 406.6 363.3 407.5 372.7 407.7 382.1 407.3 391.5 406.6 400.9 405.9 410.4 405.3 419.7 405 429 404.9 438.2 405 447.4 404.7 456.6 404 466 402.8 475.4 401.3 485 399.9 494.5 398.8 504 398.1 513.4 397.7 522.7 397.1 531.9 396 541 394.3 550.1 392.1 559.2 389.5 568.3 386.9 577.4 384.2 586.4 381.6 595.3 379 604.3 376.5 613.3 373.7 622.3 372.2 626.9M400 309.4 402.2 318.3 403.9 327.6 405.3 337.1 406.6 346.6 408.1 356.1 409.6 365.5 410.5 374.8 410.7 384.1 410.1 393.3 409 402.4 408 411.5 407.3 420.6 407.3 429.6 407.9 438.6 408.7 447.7 409.1 457 408.7 466.5 407.4 476.3 405.5 486.1 403.6 495.9 402 505.6 401.2 514.9 400.8 524 400.5 532.9 399.8 541.8 398.4 550.8 396.5 559.8 394.1 568.9 391.7 578 389.1 587 386.5 595.9 384 604.8 381.5 613.7 378.6 622.8 376.8 627.3M402.4 311.1 404.6 319.9 406.5 329.1 408 338.7 409.6 348.4 411.2 358 412.6 367.6 413.5 376.9 413.5 386 412.8 395 411.6 403.8 410.6 412.5 410 421.3 410.1 430.1 410.7 439 411.7 448.2 412.3 457.7 412.2 467.4 411.2 477.3 409.5 487.3 407.7 497.2 406.1 506.8 405.1 516 404.5 525 404.1 533.8 403.3 542.6 402.2 551.4 400.6 560.4 398.7 569.5 396.7 578.6 394.3 587.7 391.7 596.5 389.1 605.4 386.3 614.3 383.2 623.3 381.5 627.8M404.8 312.8 406.9 321.5 409.1 330.7 411 340.3 412.9 350 414.5 359.7 415.6 369.2 416.2 378.6 416.1 387.6 415.5 396.3 414.8 404.9 414.1 413.4 413.7 422.1 413.5 430.9 413.6 440 413.9 449.4 414.2 459 414.2 468.8 413.8 478.7 413.1 488.5 412.1 498.1 411.1 507.4 410 516.6 409.1 525.5 408.1 534.4 407 543.2 405.9 552.1 404.8 561.1 403.5 570.2 401.8 579.3 399.6 588.4 396.9 597.2 393.9 606.1 390.8 614.9 387.7 623.8 386.1 628.2M407.3 314.5 409.1 323.3 411.6 332.4 414 341.8 416 351.3 417.6 360.8 418.4 370.3 418.7 379.6 418.6 388.6 418.4 397.3 418.4 405.8 418.4 414.4 418.2 423.1 417.6 432.2 416.7 441.6 415.8 451.2 415.2 460.9 415.1 470.6 415.5 480.1 416 489.4 416.5 498.5 416.4 507.5 415.7 516.5 414.5 525.5 412.9 534.6 411.3 543.7 410 552.7 409.1 561.8 408.2 570.9 406.9 580.1 404.7 589.1 401.6 597.9 398.2 606.7 394.9 615.5 392 624.2 390.7 628.6M409.7 316.1 411.3 325.2 414 334.2 416.6 343.3 418.7 352.4 420.2 361.6 420.8 370.8 421 380 421.1 389.1 421.5 397.9 422.3 406.7 422.9 415.5 422.8 424.6 421.8 434 420 443.7 418 453.4 416.5 463 416.2 472.4 417 481.4 418.6 490.1 420.3 498.7 421.3 507.4 421.2 516.2 420 525.4 418.2 534.7 416.2 544.1 414.8 553.4 413.8 562.6 413 571.7 411.6 580.8 409.2 589.7 405.8 598.5 402.1 607.3 398.9 616 396.2 624.6 395.3 628.8M412.1 317.7 413.8 327.1 416.2 335.9 418.7 344.7 420.7 353.4 422.1 362.3 422.9 371.2 423.3 380.3 423.9 389.4 424.8 398.5 426 407.7 426.9 417 426.9 426.5 425.7 436.1 423.6 445.8 421.1 455.4 419.2 464.7 418.6 473.6 419.4 482.2 421.2 490.4 423.4 498.8 425 507.3 425.6 516.2 425 525.5 423.6 535 421.7 544.6 420.2 554 418.9 563.3 417.7 572.4 415.9 581.4 413 590.2 409.5 598.9 405.9 607.5 402.9 616.2 400.6 624.8 399.9 629M414.6 319.4 416.3 328.8 418.4 337.6 420.3 346.2 422 354.6 423.4 363.1 424.6 371.8 425.6 380.7 426.6 389.9 427.9 399.4 429.1 409 430 418.7 430 428.5 429.1 438.2 427.5 447.7 425.6 456.8 424 465.7 423.1 474.1 423.3 482.4 424.3 490.7 425.9 499.1 427.4 507.8 428.5 516.8 428.9 526.2 428.4 535.7 427.3 545.3 425.9 554.7 424.2 563.9 422.2 572.9 419.7 581.7 416.5 590.4 413 598.9 409.9 607.5 407.3 616.1 405.3 624.8 404.6 629.1M417 321.1 419.1 330.4 420.7 339.1 421.9 347.6 423.1 356 424.5 364.4 426.1 372.9 427.8 381.8 429.3 391.1 430.5 400.7 431.5 410.6 432 420.5 432.2 430.3 432 439.7 431.6 448.8 431 457.4 430.3 465.7 429.4 474 428.7 482.4 428.2 490.9 428.3 499.8 429 508.9 430.3 518.1 431.6 527.5 432.5 536.9 432.3 546.2 431.2 555.3 429.2 564.3 426.6 573.2 423.5 581.9 420.1 590.3 416.8 598.7 414.2 607.1 412.2 615.8 410.2 624.7 409.2 629.1M419.4 322.7 421.9 331.7 423.1 340.5 423.7 349.1 424.5 357.6 426 366 427.9 374.6 429.9 383.5 431.6 392.8 432.7 402.4 433.3 412.3 433.6 422.1 434 431.6 434.7 440.6 435.7 449.1 436.7 457.3 437 465.4 436.3 473.7 434.7 482.3 432.8 491.4 431.3 500.8 431 510.4 432 519.8 433.8 529.1 435.6 538.2 436.3 547.1 435.6 555.9 433.7 564.6 430.8 573.3 427.5 581.8 424.2 590.1 421.3 598.3 419.2 606.8 417.4 615.5 415.3 624.5 413.9 629.1M421.9 324.3 424.6 333 425.7 341.7 426.3 350.5 426.9 359.2 428.3 367.9 430.2 376.7 432.2 385.7 433.7 394.8 434.6 404.2 435 413.7 435.4 423.1 436.1 432.1 437.5 440.7 439.5 448.9 441.5 456.9 442.6 465.1 442.3 473.7 440.5 482.8 437.8 492.3 435.4 502.1 434.2 511.8 434.6 521.3 436.3 530.4 438.1 539.2 439.1 547.8 438.9 556.3 437.4 564.7 435 573.2 432.1 581.6 429.1 589.9 426.5 598.1 424.5 606.6 422.7 615.4 420.2 624.4 418.5 629M424.4 325.8 427.1 334.2 428.6 343 429.5 351.9 430.4 360.9 431.6 369.9 433.1 378.9 434.6 387.9 435.8 396.9 436.6 405.8 437.2 414.7 437.8 423.5 438.9 432.1 440.6 440.4 442.8 448.6 444.9 456.9 446.2 465.5 446.3 474.4 445 483.8 442.8 493.5 440.6 503.3 439.2 513 438.9 522.2 439.7 531.1 440.8 539.6 441.5 548 441.5 556.3 440.7 564.7 439.2 573.1 437.3 581.5 434.8 589.9 432.3 598.2 430 606.7 427.7 615.5 425 624.4 423.1 628.9M427 327.2 429.4 335.5 431.5 344.2 433.1 353.2 434.5 362.3 435.7 371.5 436.8 380.7 437.6 389.7 438.3 398.4 439.1 406.9 440 415.2 441.2 423.4 442.5 431.7 443.9 440.1 445.3 448.7 446.7 457.5 447.7 466.6 448.2 476 448 485.4 447.3 494.9 446.4 504.3 445.4 513.5 444.8 522.3 444.4 530.9 444.2 539.4 444 547.8 444 556.1 443.9 564.5 443.7 573 442.7 581.6 440.7 590.1 438.1 598.5 435.2 607.1 432.5 615.8 429.5 624.5 427.8 628.8M429.7 328.4 431.7 336.7 434.3 345.4 436.7 354.4 438.8 363.5 440.2 372.8 440.9 381.9 441.2 390.8 441.6 399.3 442.5 407.4 443.8 415.3 445.2 423.2 446.5 431.4 447.2 440.1 447.5 449.2 447.6 458.7 448 468.3 448.8 477.8 449.9 487.1 451.1 496.1 451.9 504.9 451.9 513.4 451.3 521.8 450.1 530.2 448.6 538.6 447.5 547.2 447.3 555.7 447.8 564.4 448.4 573.1 448.2 582 446.4 590.7 443.4 599.2 440.1 607.7 436.8 616.3 433.8 624.7 432.4 628.8M432.4 329.4 434 337.9 436.9 346.6 439.9 355.5 442.5 364.5 444.2 373.5 445 382.5 445.3 391.2 445.7 399.5 446.6 407.5 448 415.3 449.5 423.3 450.3 431.7 450.3 440.6 449.5 450.2 448.7 460.1 448.5 469.9 449.5 479.4 451.6 488.4 454.1 496.9 456.3 505 457.4 513 457.2 521 455.9 529.3 454 537.8 452.5 546.6 452 555.4 452.5 564.4 453.4 573.4 453.3 582.5 451.4 591.3 448.1 599.9 444.4 608.3 441 616.6 438.1 624.8 437 628.7M435.2 330.2 436.6 338.9 439.4 347.6 442.5 356.4 445.3 365.2 447.4 373.9 448.7 382.6 449.4 391.2 450.1 399.4 451.1 407.5 452.3 415.5 453.4 423.8 453.8 432.5 453.2 441.7 452 451.4 450.9 461.2 450.6 470.9 451.6 480.2 453.8 488.8 456.7 497 459.5 504.8 461.2 512.6 461.8 520.5 461.2 528.8 459.9 537.4 458.6 546.3 458 555.4 458.2 564.6 458.5 573.8 457.9 583 455.6 591.8 452.1 600.3 448.4 608.6 445.2 616.8 442.6 624.7 441.7 628.6M438.1 330.9 439.5 339.7 441.9 348.4 444.6 357 447.3 365.6 449.7 374.1 451.6 382.6 453.1 391 454.3 399.4 455.4 407.7 456.3 416.2 456.9 424.8 456.8 433.8 456.2 443 455.3 452.4 454.6 461.8 454.6 471 455.5 479.9 457.1 488.4 459.3 496.5 461.5 504.5 463.4 512.5 464.8 520.6 465.5 528.9 465.5 537.6 465.1 546.6 464.7 555.8 464.4 565 463.7 574.3 462.2 583.4 459.3 592.1 455.7 600.3 452.4 608.5 449.6 616.6 447.2 624.6 446.3 628.5M441 331.4 442.6 340.2 444.5 348.9 446.6 357.5 448.8 365.9 451.3 374.3 453.8 382.6 456 391 457.8 399.6 459 408.2 459.7 417.1 459.9 426.1 459.8 435.1 459.6 444.1 459.6 453 459.8 461.8 460.3 470.4 460.9 478.8 461.5 487.3 462.3 495.8 463.3 504.2 464.8 512.7 466.8 521.2 468.9 529.8 470.4 538.6 471.1 547.5 471.1 556.5 470.3 565.6 468.8 574.6 466.4 583.5 463.1 591.9 459.5 600 456.6 608 454.2 616.1 452 624.3 450.9 628.5M443.9 331.8 445.9 340.5 447.5 349.1 448.8 357.6 450.5 366.1 452.8 374.4 455.5 382.8 458.1 391.3 460.3 400.1 461.8 409 462.5 418.1 462.8 427.2 463 436.2 463.6 444.9 464.5 453.2 465.6 461.3 466.4 469.4 466.7 477.6 466.4 486.2 465.9 495 465.8 504 466.7 513.1 468.9 522.1 471.8 531 474.4 539.8 476 548.6 476.5 557.4 475.6 566.1 473.6 574.9 470.8 583.4 467.2 591.5 463.8 599.4 461.1 607.4 459 615.7 456.8 624.2 455.6 628.5M446.8 332.1 449.2 340.6 450.6 349.2 451.6 357.7 452.9 366.1 454.8 374.6 457.2 383.1 459.7 391.8 462 400.7 463.8 409.7 465 418.9 465.9 427.9 466.8 436.7 468 445 469.5 453 471 460.8 471.9 468.7 472 476.9 471.2 485.5 470.1 494.6 469.4 504.1 469.9 513.5 471.9 522.9 474.9 531.9 477.8 540.8 479.7 549.5 480.5 558 479.9 566.5 478.2 574.9 475.4 583.1 472 591 468.6 598.8 466 606.9 463.9 615.3 461.6 624.1 460.2 628.6M449.8 332.1 452.3 340.6 453.8 349.1 454.9 357.6 456 366.1 457.5 374.7 459.3 383.4 461.4 392.2 463.6 401.1 465.7 410.1 467.6 419.1 469.3 427.9 470.9 436.5 472.5 444.7 474.1 452.7 475.4 460.6 476.2 468.5 476.2 476.8 475.6 485.6 474.8 494.8 474.2 504.2 474.6 513.8 476.2 523.2 478.6 532.3 480.9 541.2 482.6 549.9 483.5 558.3 483.5 566.5 482.4 574.7 480.3 582.8 477.2 590.7 473.8 598.5 471 606.7 468.7 615.3 466.2 624.1 464.8 628.6M452.7 332 455.1 340.5 457 348.9 458.4 357.4 459.7 366 460.9 374.7 462.2 383.5 463.8 392.3 465.7 401.2 468 410 470.5 418.7 472.9 427.3 475 435.8 476.6 444.1 477.8 452.4 478.6 460.6 479.1 469 479.4 477.5 479.5 486.3 479.5 495.3 479.7 504.5 480.4 513.7 481.6 522.9 483.1 532 484.4 540.9 485.5 549.5 486.3 558 486.8 566.3 486.6 574.5 485.3 582.7 482.5 590.6 479 598.6 475.9 606.9 473.3 615.5 470.8 624.3 469.5 628.7M455.6 331.8 457.8 340.3 459.9 348.8 461.8 357.3 463.3 365.9 464.6 374.6 465.7 383.4 467 392.1 468.7 400.8 471 409.4 473.7 417.9 476.4 426.4 478.5 434.9 480 443.5 480.8 452.2 481.2 461 481.6 469.7 482.2 478.5 483 487.2 484 496 485.1 504.8 486.1 513.6 487.1 522.4 488 531.3 488.5 540.1 488.9 548.8 489.7 557.3 490.5 565.8 490.9 574.3 490 582.7 487.5 590.9 484 599 480.7 607.3 477.9 615.9 475.3 624.5 474.1 628.8M458.5 331.5 460.5 340.1 462.7 348.6 464.8 357.2 466.7 365.8 468.2 374.5 469.5 383.1 470.8 391.8 472.5 400.4 474.7 408.8 477.2 417.2 479.7 425.7 481.6 434.3 482.8 443.1 483.4 452.1 483.7 461.2 484.2 470.2 485.2 479.1 486.6 487.9 488.2 496.4 489.7 504.9 491 513.4 492.1 522 492.8 530.5 493.1 539.2 493.3 548 494 556.7 494.8 565.4 495.4 574.2 494.7 582.9 492.2 591.3 488.7 599.5 485.3 607.8 482.5 616.3 479.9 624.7 478.7 628.9M461.5 331.2 463.3 339.9 465.4 348.5 467.6 357.1 469.6 365.7 471.4 374.3 473.1 382.9 474.7 391.5 476.5 400 478.6 408.4 480.8 416.8 482.8 425.4 484.4 434.1 485.5 443 486.2 452.1 486.8 461.2 487.7 470.2 488.8 479.1 490.3 487.9 491.9 496.5 493.4 504.9 494.8 513.3 496.1 521.7 497.2 530.2 497.9 538.8 498.4 547.6 499.1 556.4 499.8 565.3 500.2 574.2 499.2 583.1 496.6 591.6 493.1 599.8 489.8 608.1 487.1 616.5 484.6 624.8 483.4 628.9M464.4 331 466.3 339.6 468.3 348.2 470.2 356.9 472.1 365.5 474 374.1 475.9 382.7 477.9 391.4 479.9 399.9 482.1 408.5 484.2 417.1 486.2 425.7 487.7 434.4 489 443.1 490 451.9 490.9 460.7 491.9 469.5 493 478.2 494 487 495.1 495.8 496.2 504.5 497.5 513.3 499.2 521.9 501 530.6 502.5 539.3 503.6 548.1 504.6 556.8 505.2 565.7 505.3 574.5 504 583.2 501.1 591.5 497.6 599.6 494.4 607.9 491.8 616.3 489.3 624.8 488 629"/>
<path id="mr" d="M493.3 333.3 497.5 336.4 502.5 335.9 507.2 333.6 511.7 330.9 515.7 327.6 519 323.6 523.4 320.9 528.5 319.6 531 319M493.4 337.7 497.3 340.9 502.1 340.2 506.8 337.7 511.1 335.6 515.1 332.2 518.2 327.7 522.1 325.7 527.3 324 529.7 323.5M493.5 342.1 497.2 345.3 501.9 344.5 506.4 342.1 510.5 340 514.3 336.8 517.4 332 521 330.4 526.1 328.4 528.4 328M493.6 346.5 497.2 349.6 501.7 348.9 506.1 346.5 510.1 344.4 513.7 341.3 516.7 336.5 520.1 335 525.1 333 527.3 332.5M493.7 350.9 497.2 354 501.6 353.3 505.8 351 509.7 348.7 513.1 345.8 516.1 341.2 519.5 339.6 524.3 337.6 526.4 337.1M493.8 355.3 497.3 358.2 501.6 357.7 505.5 355.7 509.4 352.9 512.5 350.3 515.5 345.9 519 344.1 523.4 342.3 525.6 341.7M493.9 359.7 497.3 362.5 501.6 362.1 505.2 360.4 509.1 357.1 511.9 354.7 515 350.8 518.6 348.4 522.6 347.1 524.8 346.3M493.9 364.1 497.4 366.7 501.6 366.5 504.9 365.1 508.8 361.2 511.4 359.1 514.4 355.8 518.3 352.8 521.9 351.8 524 351M494 368.5 497.5 370.9 501.7 370.9 504.6 369.8 508.5 365.3 510.8 363.5 513.9 360.8 518 357.1 521.1 356.6 523.3 355.6M494.1 372.9 497.5 375.1 501.7 375.4 504.3 374.5 508.3 369.5 510.3 367.9 513.4 365.8 517.8 361.4 520.4 361.4 522.6 360.2M494.2 377.3 497.6 379.4 501.7 379.8 504.1 379.1 508 373.9 509.9 372.2 513 370.8 517.5 365.8 519.8 366.2 522 364.9M494.2 381.7 497.6 383.7 501.7 384.3 503.9 383.6 507.8 378.3 509.5 376.6 512.6 375.6 517.3 370.3 519.2 371 521.5 369.5M494.3 386.1 497.7 388 501.6 388.8 503.8 387.9 507.5 382.9 509.1 381 512.3 380.3 517 374.9 518.7 375.7 520.9 374.2M494.3 390.5 497.7 392.5 501.6 393.3 503.7 392.1 507.3 387.6 508.8 385.4 511.9 384.9 516.6 379.7 518.2 380.4 520.4 378.8M494.4 394.9 497.6 396.9 501.4 397.8 503.6 396.1 507 392.4 508.6 389.9 511.7 389.3 516.3 384.5 517.8 385 520 383.5M494.4 399.3 497.6 401.4 501.3 402.3 503.6 400.1 506.8 397.4 508.5 394.4 511.5 393.6 515.8 389.4 517.5 389.6 519.6 388.1M494.5 403.7 497.5 406 501.1 406.7 503.6 404.1 506.6 402.4 508.5 399 511.3 397.9 515.4 394.4 517.3 394.2 519.3 392.8M494.5 408.1 497.5 410.5 500.9 411.1 503.6 408 506.5 407.3 508.5 403.7 511.3 402 515 399.5 517.1 398.7 519.1 397.5M494.5 412.5 497.4 415 500.7 415.5 503.7 412.1 506.4 412.3 508.7 408.4 511.2 406.2 514.6 404.5 517.1 403.3 519 402.2M494.6 416.9 497.3 419.6 500.6 419.8 503.7 416.2 506.4 417.1 508.9 413.2 511.3 410.4 514.2 409.5 517.1 407.8 518.9 406.8M494.6 421.3 497.2 424.1 500.4 424 503.8 420.5 506.5 421.8 509.1 418 511.3 414.6 513.9 414.4 517.3 412.3 518.9 411.5M494.6 425.7 497.2 428.5 500.2 428.1 503.8 425 506.6 426.3 509.4 422.9 511.4 418.9 513.6 419.3 517.4 416.8 519 416.2M494.6 430.1 497.1 432.9 500.1 432.2 503.8 429.6 506.7 430.7 509.7 427.7 511.5 423.4 513.4 424 517.7 421.4 519.1 420.9M494.6 434.5 497.1 437.2 500 436.3 503.8 434.4 506.9 435 510.1 432.5 511.6 428 513.3 428.6 517.9 426 519.3 425.6M494.5 438.9 497 441.5 499.9 440.4 503.8 439.3 507 439.1 510.4 437.3 511.7 432.7 513.3 433.1 518.2 430.6 519.5 430.2M494.4 443.3 496.9 445.8 499.7 444.5 503.8 444.2 507.2 443.2 510.6 442.1 511.8 437.4 513.3 437.6 518.5 435.2 519.7 434.9M494.3 447.7 496.7 450.1 499.7 448.6 503.7 449.1 507.2 447.3 510.9 446.8 511.9 442.3 513.4 442 518.8 439.8 520 439.6M494.1 452.1 496.6 454.3 499.6 452.8 503.7 454 507.3 451.4 511 451.4 512 447.1 513.6 446.4 519.2 444.5 520.3 444.3M493.9 456.5 496.5 458.6 499.6 457.1 503.7 458.8 507.3 455.6 511.2 455.9 512.2 452 513.9 450.9 519.5 449.2 520.6 448.9M493.9 460.9 496.5 462.9 499.7 461.5 503.8 463.4 507.3 459.9 511.3 460.3 512.4 456.8 514.2 455.5 519.9 453.9 521 453.6M493.9 465.3 496.5 467.3 499.9 466 504 467.8 507.4 464.4 511.5 464.7 512.8 461.6 514.7 460.1 520.2 458.7 521.4 458.3M494 469.7 496.7 471.7 500.2 470.7 504.3 472 507.5 469 511.7 469 513.2 466.3 515.3 464.8 520.7 463.4 521.9 462.9M494.2 474.1 497 476.1 500.7 475.3 504.8 476.1 507.6 473.8 511.9 473.2 513.7 471 516.1 469.6 521.1 468.1 522.4 467.6M494.5 478.5 497.4 480.5 501.2 480.1 505.3 480 507.8 478.7 512.2 477.4 514.3 475.6 516.8 474.5 521.6 472.8 522.9 472.2M494.9 482.8 497.9 485 501.8 484.9 505.9 483.9 508 483.6 512.5 481.6 514.9 480.1 517.7 479.4 522.1 477.6 523.6 476.9M495.3 487.2 498.4 489.4 502.4 489.7 506.6 487.8 508.3 488.5 512.8 485.7 515.6 484.7 518.6 484.2 522.7 482.3 524.2 481.5M495.8 491.6 498.9 493.8 503.1 494.4 507.2 491.7 508.7 493.3 513.1 489.9 516.3 489.3 519.6 489.1 523.3 487 524.9 486.1M496.2 496 499.5 498.2 503.8 499.1 507.8 495.7 509.2 498.1 513.5 494.2 517.1 493.9 520.6 493.8 523.9 491.8 525.6 490.7M496.8 500.4 500.2 502.5 504.5 503.7 508.4 499.9 509.8 502.6 513.9 498.5 517.8 498.5 521.6 498.5 524.5 496.5 526.3 495.4M497.3 504.7 500.8 506.8 505.2 508.2 508.9 504.3 510.5 507 514.3 502.9 518.5 503.2 522.6 503 525.2 501.3 527.1 500M497.9 509.1 501.5 511 505.9 512.6 509.4 508.9 511.3 511.2 514.8 507.3 519.2 508 523.6 507.4 525.9 506 527.9 504.6M498.5 513.4 502.3 515.2 506.7 516.9 509.9 513.6 512.2 515.3 515.4 511.9 519.9 512.8 524.6 511.8 526.6 510.8 528.7 509.2M499.3 517.8 503.1 519.4 507.5 521.1 510.5 518.5 513.3 519.2 516.1 516.5 520.7 517.7 525.6 516 527.4 515.5 529.6 513.8M500.1 522.1 504.1 523.5 508.3 525.2 511.1 523.5 514.5 523 516.9 521.2 521.5 522.5 526.6 520.2 528.2 520.1 530.5 518.4M501 526.4 505 527.5 509.2 529.2 511.7 528.5 515.7 526.8 517.9 526 522.3 527.2 527.6 524.4 529.1 524.8 531.4 523M501.9 530.7 505.9 531.7 510 533.1 512.4 533.4 517 530.6 518.9 530.8 523.2 531.9 528.5 528.7 530.1 529.4 532.4 527.6M502.6 535 506.8 535.8 510.7 537.1 513 538.3 518.2 534.5 519.9 535.6 524.1 536.5 529.4 533 531.2 533.9 533.5 532.1M503.3 539.4 507.5 540.1 511.4 541.1 513.7 543.1 519.4 538.6 521 540.4 525.1 540.9 530.3 537.5 532.4 538.4 534.7 536.6M503.8 543.8 508.1 544.4 511.9 545.2 514.4 547.6 520.5 542.8 522.1 545.2 526.1 545.2 531.2 542 533.6 542.8 535.9 541.2M504.4 548.1 508.6 548.8 512.4 549.3 515.1 552 521.5 547.2 523.3 550 527.2 549.4 532 546.7 535 547.2 537.2 545.7M504.9 552.5 509.2 553.2 513 553.4 516 556.2 522.5 551.8 524.5 554.6 528.4 553.5 533 551.4 536.4 551.6 538.6 550.1M505.4 556.9 509.7 557.7 513.5 557.7 516.9 560.2 523.4 556.6 525.8 559.2 529.6 557.5 533.9 556.3 537.8 555.9 540 554.6M505.9 561.2 510.1 562.2 514 562 517.8 564.1 524.2 561.4 527 563.8 530.8 561.5 534.8 561.2 539.3 560.2 541.4 559.1M506.2 565.6 510.5 566.8 514.4 566.4 518.7 567.9 524.9 566.4 528.2 568.2 532 565.5 535.8 566.1 540.8 564.5 542.9 563.5M506.3 570 510.7 571.3 514.8 570.8 519.5 571.7 525.4 571.3 529.3 572.6 533.2 569.6 536.8 570.9 542.3 568.8 544.3 567.9M506.3 574.4 510.7 575.8 515 575.2 520.2 575.6 525.9 576.2 530.3 576.9 534.3 573.7 537.9 575.7 543.8 573.2 545.8 572.4M505.9 578.8 510.5 580.3 515.1 579.7 520.6 579.5 526.1 581.1 531.1 581.1 535.3 578.1 538.9 580.5 545.2 577.6 547.3 576.8M505 583.1 509.9 584.6 514.8 584.1 520.8 583.5 526.1 585.7 531.7 585.3 536.1 582.5 540 585 546.6 582 548.8 581.3M503.8 587.3 508.9 588.8 514.2 588.4 520.6 587.6 525.9 590.2 532.1 589.4 536.8 587 541.1 589.5 548 586.5 550.3 585.7M502.2 591.4 507.7 592.9 513.4 592.6 520.3 591.7 525.6 594.5 532.4 593.4 537.5 591.6 542.2 593.8 549.4 590.9 551.8 590.1M500.4 595.5 506.3 596.8 512.5 596.7 519.7 595.9 525.2 598.5 532.5 597.4 538.1 596.3 543.4 598 550.7 595.4 553.4 594.5M498.6 599.5 504.9 600.7 511.6 600.8 519.2 600.1 524.9 602.5 532.7 601.4 538.7 601 544.6 602.1 552.2 599.9 555.1 598.9M496.9 603.5 503.7 604.6 510.9 604.9 518.7 604.5 524.8 606.4 532.9 605.4 539.4 605.7 546 606.2 553.7 604.4 556.8 603.2M495.5 607.7 502.8 608.6 510.4 609.1 518.4 608.9 524.9 610.4 533.3 609.5 540.3 610.3 547.5 610.3 555.3 608.8 558.7 607.5M494.3 611.9 502 612.7 510 613.3 518.3 613.3 525.2 614.3 533.9 613.7 541.4 614.8 549.2 614.4 557.1 613.1 560.7 611.7M493.2 616.2 501.3 616.8 509.8 617.4 518.3 617.6 525.7 618.2 534.6 617.8 542.6 619.1 550.9 618.4 559.1 617.3 562.9 615.9M492.1 620.5 500.7 620.9 509.5 621.6 518.3 621.9 526.4 622.2 535.5 622 544 623.3 552.8 622.5 561.3 621.4 565.3 619.9M491.1 624.7 500.1 625.1 509.3 625.7 518.4 626.1 527.1 626.3 536.4 626.3 545.4 627.3 554.6 626.7 563.4 625.5 567.7 623.9M490 629 499.5 629.4 508.9 629.7 518.4 630.1 527.8 630.4 537.3 630.7 546.8 631.1 556.2 631.1 565.5 629.5 570 628M493.3 333.3 493.5 342.1 493.7 350.9 493.9 359.7 494 368.5 494.2 377.3 494.3 386.1 494.4 394.9 494.5 403.7 494.5 412.5 494.6 421.3 494.6 430.1 494.5 438.9 494.3 447.7 493.9 456.5 493.9 465.3 494.2 474.1 494.9 482.8 495.8 491.6 496.8 500.4 497.9 509.1 499.3 517.8 501 526.4 502.6 535 503.8 543.8 504.9 552.5 505.9 561.2 506.3 570 505.9 578.8 503.8 587.3 500.4 595.5 496.9 603.5 494.3 611.9 492.1 620.5 490 629M495.4 334.9 495.4 343.7 495.5 352.4 495.5 361.2 495.4 370 495.4 378.7 495.4 387.3 495.5 395.9 495.6 404.5 495.8 413.3 496 422.1 496.1 431.2 496.2 440.3 496 449.4 495.7 458.3 495.6 467.1 496 475.5 496.6 483.8 497.5 492 498.4 500.4 499.5 509.1 500.8 517.9 502.4 526.9 504.1 535.9 505.4 544.9 506.7 553.8 507.9 562.5 508.6 571 508.5 579.5 506.7 587.8 503.7 595.8 500.6 603.8 498.3 612.1 496.5 620.6 494.7 629.2M497.5 336.4 497.2 345.3 497.2 354 497.3 362.5 497.5 370.9 497.6 379.4 497.7 388 497.6 396.9 497.5 406 497.4 415 497.2 424.1 497.1 432.9 497 441.5 496.7 450.1 496.5 458.6 496.5 467.3 497 476.1 497.9 485 498.9 493.8 500.2 502.5 501.5 511 503.1 519.4 505 527.5 506.8 535.8 508.1 544.4 509.2 553.2 510.1 562.2 510.7 571.3 510.5 580.3 508.9 588.8 506.3 596.8 503.7 604.6 502 612.7 500.7 620.9 499.5 629.4M500 336.7 499.5 345.5 499.5 354.1 499.6 362.5 499.9 371 500.1 379.6 500.1 388.6 499.9 397.8 499.6 407.1 499.2 416.3 498.7 425.1 498.4 433.4 498.2 441.2 498 449.1 497.8 457.2 497.9 466 498.6 475.5 499.5 485.3 500.7 495.2 502.1 504.6 503.7 513.3 505.5 521.2 507.5 528.7 509.4 536.1 510.6 543.9 511.6 552.3 512.4 561.3 512.9 570.7 512.7 580.1 511.2 589 509.1 597.3 507 605.2 505.8 613.2 505 621.4 504.2 629.6M502.5 335.9 501.9 344.5 501.6 353.3 501.6 362.1 501.7 370.9 501.7 379.8 501.6 388.8 501.4 397.8 501.1 406.7 500.7 415.5 500.4 424 500.1 432.2 499.9 440.4 499.7 448.6 499.6 457.1 499.9 466 500.7 475.3 501.8 484.9 503.1 494.4 504.5 503.7 505.9 512.6 507.5 521.1 509.2 529.2 510.7 537.1 511.9 545.2 513 553.4 514 562 514.8 570.8 515.1 579.7 514.2 588.4 512.5 596.7 510.9 604.9 510 613.3 509.5 621.6 508.9 629.7M504.9 334.9 504.2 343.4 503.7 352.3 503.3 361.5 503 370.8 502.8 379.9 502.6 388.7 502.5 397 502.4 405.1 502.3 413.3 502.1 421.7 502 430.6 501.8 439.9 501.6 449.4 501.6 458.7 502 467.6 502.9 476.1 504.2 484.3 505.6 492.4 506.9 500.9 508 509.8 509.1 519.2 510.3 528.8 511.5 538.3 512.6 547.3 513.9 555.8 515.4 563.9 516.8 571.7 517.7 579.6 517.5 587.7 516.3 595.9 515.1 604.3 514.4 613 514.1 621.6 513.6 629.9M507.2 333.6 506.4 342.1 505.8 351 505.2 360.4 504.6 369.8 504.1 379.1 503.8 387.9 503.6 396.1 503.6 404.1 503.7 412.1 503.8 420.5 503.8 429.6 503.8 439.3 503.7 449.1 503.7 458.8 504 467.8 504.8 476.1 505.9 483.9 507.2 491.7 508.4 499.9 509.4 508.9 510.5 518.5 511.7 528.5 513 538.3 514.4 547.6 516 556.2 517.8 564.1 519.5 571.7 520.6 579.5 520.6 587.6 519.7 595.9 518.7 604.5 518.3 613.3 518.3 621.9 518.4 630.1M509.4 332.3 508.5 340.9 507.8 349.7 507.2 358.6 506.6 367.7 506 376.8 505.6 385.9 505.2 394.9 505 403.7 505 412.4 505.2 421.1 505.4 429.9 505.6 438.8 505.6 447.7 505.6 456.8 505.7 465.8 506.2 474.8 506.9 483.8 507.8 492.7 508.9 501.6 510.2 510.5 511.8 519.4 513.7 528.1 515.7 536.7 517.5 545.3 519.4 553.8 521.2 562.3 522.7 570.9 523.6 579.7 523.4 588.5 522.5 597.1 521.6 605.6 521.6 614 522.2 622.3 523.1 630.3M511.7 330.9 510.5 340 509.7 348.7 509.1 357.1 508.5 365.3 508 373.9 507.5 382.9 507 392.4 506.6 402.4 506.4 412.3 506.5 421.8 506.7 430.7 507 439.1 507.2 447.3 507.3 455.6 507.4 464.4 507.6 473.8 508 483.6 508.7 493.3 509.8 502.6 511.3 511.2 513.3 519.2 515.7 526.8 518.2 534.5 520.5 542.8 522.5 551.8 524.2 561.4 525.4 571.3 526.1 581.1 525.9 590.2 525.2 598.5 524.8 606.4 525.2 614.3 526.4 622.2 527.8 630.4M513.8 329.4 512.4 339 511.4 347.8 510.6 356 509.9 364 509.3 372.1 508.7 380.8 508.2 390.2 507.9 400.2 507.7 410.5 507.9 420.7 508.2 430.3 508.6 439.3 509 447.8 509.2 456.2 509.4 464.8 509.6 473.7 510.1 482.8 510.7 492 511.7 500.8 513 509.3 514.8 517.4 517.1 525.4 519.5 533.9 521.8 543 523.9 552.7 525.9 562.7 527.4 572.7 528.5 582.2 528.8 590.9 528.6 598.7 528.7 606.2 529.5 613.8 530.9 621.8 532.6 630.6M515.7 327.6 514.3 336.8 513.1 345.8 511.9 354.7 510.8 363.5 509.9 372.2 509.1 381 508.6 389.9 508.5 399 508.7 408.4 509.1 418 509.7 427.7 510.4 437.3 510.9 446.8 511.2 455.9 511.5 464.7 511.9 473.2 512.5 481.6 513.1 489.9 513.9 498.5 514.8 507.3 516.1 516.5 517.9 526 519.9 535.6 522.1 545.2 524.5 554.6 527 563.8 529.3 572.6 531.1 581.1 532.1 589.4 532.5 597.4 532.9 605.4 533.9 613.7 535.5 622 537.3 630.7M517.3 325.6 516 334 514.7 343.2 513.3 352.8 512 362.7 510.8 372.5 510 381.9 509.4 390.6 509.3 398.9 509.7 407.2 510.2 415.6 510.9 424.7 511.5 434.2 512 444 512.4 453.8 512.8 463.2 513.4 472 514.1 480.5 515 489.1 515.8 498 516.7 507.4 517.8 517.4 519.3 527.5 521.2 537.3 523.3 546.5 525.9 555 528.7 562.9 531.4 570.7 533.6 578.7 535 587.2 535.8 596 536.5 605.1 537.8 614.2 539.8 622.8 542 630.9M519 323.6 517.4 332 516.1 341.2 515 350.8 513.9 360.8 513 370.8 512.3 380.3 511.7 389.3 511.3 397.9 511.2 406.2 511.3 414.6 511.5 423.4 511.7 432.7 511.9 442.3 512.2 452 512.8 461.6 513.7 471 514.9 480.1 516.3 489.3 517.8 498.5 519.2 508 520.7 517.7 522.3 527.2 524.1 536.5 526.1 545.2 528.4 553.5 530.8 561.5 533.2 569.6 535.3 578.1 536.8 587 538.1 596.3 539.4 605.7 541.4 614.8 544 623.3 546.8 631.1M521 322 518.9 331.1 517.6 340.2 516.7 349.4 516.1 358.4 515.7 367.6 515.2 376.8 514.5 386.2 513.8 395.6 513.1 405.1 512.5 414.5 512 423.8 511.8 433.1 511.7 442.3 512.1 451.6 512.9 460.9 514.1 470.4 515.8 479.9 517.8 489.4 519.8 498.7 521.8 507.7 523.8 516.6 525.7 525.3 527.5 534 529.2 542.9 531 551.9 532.8 561.1 534.7 570.3 536.7 579.6 538.4 588.7 540.3 597.6 542.4 606.2 545.1 614.7 548.3 623 551.5 631.1M523.4 320.9 521 330.4 519.5 339.6 518.6 348.4 518 357.1 517.5 365.8 517 374.9 516.3 384.5 515.4 394.4 514.6 404.5 513.9 414.4 513.4 424 513.3 433.1 513.4 442 513.9 450.9 514.7 460.1 516.1 469.6 517.7 479.4 519.6 489.1 521.6 498.5 523.6 507.4 525.6 516 527.6 524.4 529.4 533 531.2 542 533 551.4 534.8 561.2 536.8 570.9 538.9 580.5 541.1 589.5 543.4 598 546 606.2 549.2 614.4 552.8 622.5 556.2 631.1M525.9 320.2 523.6 329.3 521.9 338.6 520.6 347.7 519.5 356.9 518.5 366.1 517.6 375.5 516.8 385 516.1 394.6 515.7 404.2 515.5 413.6 515.6 422.8 515.9 431.8 516.4 440.7 517 449.7 517.9 459 518.9 468.6 520.1 478.4 521.5 488.3 523 497.9 524.6 507.3 526.3 516.3 528.1 525.1 530.1 533.9 532.2 542.7 534.6 551.7 537.1 560.9 539.6 570.1 542.2 579.3 544.7 588.2 547.3 597 550 605.6 553.3 614 557.2 622.3 560.9 630.7M528.5 319.6 526.1 328.4 524.3 337.6 522.6 347.1 521.1 356.6 519.8 366.2 518.7 375.7 517.8 385 517.3 394.2 517.1 403.3 517.3 412.3 517.7 421.4 518.2 430.6 518.8 439.8 519.5 449.2 520.2 458.7 521.1 468.1 522.1 477.6 523.3 487 524.5 496.5 525.9 506 527.4 515.5 529.1 524.8 531.2 533.9 533.6 542.8 536.4 551.6 539.3 560.2 542.3 568.8 545.2 577.6 548 586.5 550.7 595.4 553.7 604.4 557.1 613.1 561.3 621.4 565.5 629.5M531 319 528.4 328 526.4 337.1 524.8 346.3 523.3 355.6 522 364.9 520.9 374.2 520 383.5 519.3 392.8 519 402.2 518.9 411.5 519.1 420.9 519.5 430.2 520 439.6 520.6 448.9 521.4 458.3 522.4 467.6 523.6 476.9 524.9 486.1 526.3 495.4 527.9 504.6 529.6 513.8 531.4 523 533.5 532.1 535.9 541.2 538.6 550.1 541.4 559.1 544.3 567.9 547.3 576.8 550.3 585.7 553.4 594.5 556.8 603.2 560.7 611.7 565.3 619.9 570 628"/>
<path id="msl" d="M392.8 304.4 392.8 304.4 392.8 304.4 392.8 304.4 392.8 304.4 392.8 304.4 392.8 304.4M388 307.1 389.1 307.3 389.7 307.8 390.8 308.2 391.9 308 392.8 308.9 393.8 309.3M383.3 309.7 385.3 310.2 386.8 311 389 312 391.1 311.9 392.9 313.4 394.9 314.2M378.5 312.4 381.4 313.1 383.9 314.2 387.2 315.7 390.3 316.1 392.9 317.9 396 319.1M373.8 315.1 377.4 316 380.9 317.4 385.3 319.4 389.5 320.3 393 322.3 397 324M368.9 317.6 373.3 318.7 377.9 320.5 383.4 322.9 388.6 324.7 392.9 326.8 397.8 329M364.1 320.2 369.2 321.6 375 323.6 381.5 326.4 387.5 329.2 392.7 331.3 398.6 334M359.5 323.2 365.4 324.8 372.2 327.1 379.6 330.1 386.5 333.8 392.6 335.9 399.3 338.9M355.4 326.8 362 328.5 369.8 330.9 377.9 334 385.5 338.6 392.6 340.6 400 343.9M352.2 331.1 359.2 333 368 335.2 376.5 338.3 384.7 343.6 392.6 345.4 400.6 348.9M350 336.1 357.5 338 366.9 340 375.6 343 384 348.7 392.7 350.3 401.2 353.9M348.6 341.4 356.4 343.3 366.4 344.9 375 347.9 383.5 353.7 392.9 355.3 401.6 358.9M347.6 346.8 355.6 348.6 366.1 349.9 374.5 352.9 383 358.6 393 360.3 401.9 363.9M346.7 352.2 355 354.1 365.8 354.9 373.9 358 382.3 363.3 393 365.3 402.1 368.9M345.9 357.6 354.3 359.4 365.3 359.9 373.3 363.1 381.5 367.9 392.9 370.3 402.1 374M345 363 353.7 364.8 364.9 364.9 372.7 368.4 380.7 372.4 392.6 375.3 402 379M344.3 368.4 353.2 370.1 364.3 370 372.1 373.7 380 377 392.3 380.4 401.9 384M343.6 373.8 352.7 375.4 363.7 375.1 371.5 378.9 379.4 381.6 391.9 385.4 401.6 389M342.8 379.2 352 380.6 362.8 380.2 371 384.2 378.8 386.2 391.5 390.4 401.3 394M341.7 384.5 351.1 385.7 361.7 385.4 370.3 389.3 378.5 391.1 391 395.4 401.1 399M340.6 389.9 350.2 390.7 360.4 390.6 369.7 394.4 378.2 396.1 390.6 400.5 400.8 404.1M339.4 395.2 349.1 395.7 359 395.9 369.1 399.4 378.2 401.2 390.1 405.5 400.5 409.1M338.4 400.6 348.1 400.7 357.6 401.3 368.4 404.3 378.3 406.5 389.6 410.6 400.1 414.1M337.4 405.9 347.2 405.6 356.3 406.6 367.9 409.2 378.5 411.9 389.1 415.6 399.7 419.1M336.5 411.3 346.2 410.6 355.1 412 367.3 414.1 378.8 417.3 388.6 420.7 399.3 424.1M335.6 416.7 345.3 415.6 353.9 417.4 366.6 419 379.1 422.7 388 425.8 398.9 429.1M334.8 422.1 344.3 420.6 352.9 422.7 365.9 424 379.2 428.1 387.4 430.8 398.5 434.1M333.9 427.5 343.4 425.7 351.9 427.9 365.2 429 379.2 433.3 386.8 435.9 398.1 439.1M333.1 432.9 342.5 430.9 351.1 433.1 364.4 434 379 438.3 386.2 440.9 397.6 444.1M332.3 438.3 341.7 436.2 350.4 438.2 363.6 439.2 378.4 443.1 385.6 445.9 397.2 449.1M331.5 443.7 341 441.5 349.8 443.3 362.8 444.4 377.6 447.8 385 451 396.7 454.1M330.7 449.1 340.3 446.8 349.2 448.2 362 449.6 376.5 452.4 384.4 456 396.2 459.1M329.9 454.5 339.6 452.2 348.7 453.1 361.3 454.9 375.2 456.9 383.8 460.9 395.6 464.1M329.1 459.9 339 457.7 348.2 458 360.5 460.1 373.7 461.4 383.3 465.9 395.1 469.1M328.2 465.3 338.4 463.1 347.7 462.9 359.8 465.3 372.1 466 382.8 470.9 394.6 474.1M327.4 470.7 337.8 468.6 347.2 467.8 359.1 470.3 370.6 470.7 382.4 475.8 394.1 479.1M326.7 476.1 337.2 474.1 346.9 472.7 358.5 475.4 369.2 475.6 382 480.8 393.6 484.1M326.1 481.5 336.7 479.5 346.6 477.6 358 480.3 368 480.8 381.7 485.7 393.2 489.1M325.5 487 336 484.9 346.3 482.6 357.4 485.1 367.1 486.1 381.3 490.7 392.8 494.1M324.6 492.4 335.1 490.2 345.8 487.6 356.8 489.9 366.3 491.7 380.9 495.7 392.4 499.1M323.7 497.7 334 495.5 345.2 492.6 356.1 494.7 365.7 497.3 380.5 500.7 391.9 504.1M322.7 503.1 332.8 500.7 344.6 497.6 355.4 499.4 365.3 503.1 380 505.7 391.5 509.1M321.7 508.5 331.5 505.8 343.9 502.6 354.6 504.2 365.1 508.8 379.4 510.7 391 514.1M320.8 513.9 330.2 510.9 343.2 507.6 353.9 509.1 364.9 514.5 378.7 515.7 390.5 519.1M319.9 519.3 328.9 516 342.4 512.6 353.2 514.1 364.7 520.1 378 520.7 389.9 524.1M319.1 524.6 327.8 521 341.5 517.6 352.4 519.2 364.4 525.5 377.1 525.7 389.1 529.1M318.3 530.1 326.7 526.1 340.5 522.7 351.7 524.4 363.9 530.6 376.2 530.7 388.3 534M317.5 535.5 325.8 531.2 339.5 527.7 351 529.7 363.3 535.5 375.2 535.6 387.4 539M316.8 540.9 325 536.3 338.3 532.8 350.2 535 362.4 540.2 374.2 540.6 386.3 543.9M316.2 546.3 324.4 541.5 337.2 537.9 349.3 540.3 361.4 544.7 373.1 545.5 385.2 548.8M315.5 551.7 323.9 546.6 336 543 348.5 545.6 360.2 549 372 550.4 384 553.7M314.9 557.1 323.4 551.9 334.8 548.2 347.5 550.8 358.9 553.3 370.8 555.3 382.8 558.5M314.3 562.6 323.1 557.1 333.6 553.5 346.5 555.9 357.6 557.6 369.7 560.2 381.5 563.4M313.7 568 322.7 562.4 332.6 558.8 345.4 560.9 356.4 562 368.5 565.2 380.3 568.3M313.2 573.4 322.3 567.8 331.6 564.1 344.3 565.9 355.2 566.5 367.4 570.1 379 573.1M312.7 578.9 322 573.1 330.7 569.4 343.1 570.7 354.1 571.2 366.2 575 377.6 578M312.2 584.3 321.5 578.4 329.9 574.6 341.9 575.5 353 576 364.9 580 376.3 582.8M311.8 589.8 320.9 583.7 329.1 579.9 340.7 580.2 352.1 580.9 363.6 584.9 374.8 587.6M311.4 595.2 320.2 589 328.3 585.1 339.5 585 351.1 586 362.2 589.7 373.3 592.4M310.9 600.6 319.5 594.2 327.5 590.2 338.4 589.8 350.2 591.1 360.9 594.6 371.8 597.2M310.5 606.1 318.6 599.4 326.7 595.2 337.4 594.6 349.2 596.3 359.5 599.5 370.3 602M310.1 611.5 317.8 604.6 325.9 600.2 336.4 599.6 348.2 601.5 358.2 604.3 368.8 606.8M309.6 617 317 609.8 325.2 605.1 335.6 604.6 347.2 606.7 356.9 609.1 367.3 611.6M309.2 622.4 316.2 614.9 324.4 610 334.8 609.7 346 611.8 355.6 614 365.9 616.4M308.7 627.9 315.4 620.2 323.7 614.9 333.9 614.8 344.7 616.8 354.3 618.8 364.4 621.2M308.3 633.3 314.8 625.5 323 619.8 333.1 619.9 343.1 621.7 353.1 623.6 363 626M392.8 304.4 383.3 309.7 373.8 315.1 364.1 320.2 355.4 326.8 350 336.1 347.6 346.8 345.9 357.6 344.3 368.4 342.8 379.2 340.6 389.9 338.4 400.6 336.5 411.3 334.8 422.1 333.1 432.9 331.5 443.7 329.9 454.5 328.2 465.3 326.7 476.1 325.5 487 323.7 497.7 321.7 508.5 319.9 519.3 318.3 530.1 316.8 540.9 315.5 551.7 314.3 562.6 313.2 573.4 312.2 584.3 311.4 595.2 310.5 606.1 309.6 617 308.7 627.9 308.3 633.3M392.8 304.4 383.7 310.3 375.2 315.9 367 321.1 360 327.6 355.5 336.6 353 347 350.5 357.7 348.2 368.5 346.4 379.4 344.8 390 343.5 400.6 342.3 411.2 340.5 422 337.8 432.9 335 443.9 332.7 454.6 331.4 465.1 331 475.2 331.1 485.4 330.2 495.5 328.2 506 325.6 516.7 323.2 527.7 321.4 538.7 320.2 549.5 319.3 560.2 318.3 570.8 316.9 581.5 315.2 592.2 313.6 602.9 312.5 613.6 311.9 624.2 311.6 629.5M392.8 304.4 385.3 310.2 377.4 316 369.2 321.6 362 328.5 357.5 338 355.6 348.6 354.3 359.4 353.2 370.1 352 380.6 350.2 390.7 348.1 400.7 346.2 410.6 344.3 420.6 342.5 430.9 341 441.5 339.6 452.2 338.4 463.1 337.2 474.1 336 484.9 334 495.5 331.5 505.8 328.9 516 326.7 526.1 325 536.3 323.9 546.6 323.1 557.1 322.3 567.8 321.5 578.4 320.2 589 318.6 599.4 317 609.8 315.4 620.2 314.8 625.5M392.8 304.4 386.5 310 380.1 316.4 372.8 323.2 365.9 331.2 361.5 340.9 359.9 350.6 359.1 359.7 358.2 368.7 356.6 378.2 353.9 388.7 351 400 349.2 411.8 348.9 423.1 349.4 433.5 349.5 442.9 348.1 451.8 344.6 460.9 340.2 470.7 336.6 481.5 334.5 492.9 334.4 504.4 335.5 515.5 336.1 526 334.8 535.9 331.7 545.4 327.8 554.9 324.5 564.6 322.8 574.7 322.5 585.1 322.4 595.8 321.6 606.5 319.8 616.9 318.4 621.9M392.8 304.4 386.8 311 380.9 317.4 375 323.6 369.8 330.9 366.9 340 366.1 349.9 365.3 359.9 364.3 370 362.8 380.2 360.4 390.6 357.6 401.3 355.1 412 352.9 422.7 351.1 433.1 349.8 443.3 348.7 453.1 347.7 462.9 346.9 472.7 346.3 482.6 345.2 492.6 343.9 502.6 342.4 512.6 340.5 522.7 338.3 532.8 336 543 333.6 553.5 331.6 564.1 329.9 574.6 328.3 585.1 326.7 595.2 325.2 605.1 323.7 614.9 323 619.8M392.8 304.4 387.7 311.4 382.8 318.2 378.2 324.7 374.4 332.1 371.7 341.4 369.6 352 366.8 363 364.4 374 363.3 384.3 363.6 393.8 364.5 402.6 365 411.4 363.6 420.6 360.4 430.7 356.7 441.5 353.9 452.6 353 463.6 353.5 474.1 354.1 484.3 352.8 494.2 349.4 504.2 345 514.4 341.2 524.6 339.3 534.8 339.4 544.8 340.3 554.5 340.5 564.2 339.1 574 336.2 583.9 332.9 593.9 330.2 604 328.6 614.2 328 619.4M392.8 304.4 389 312 385.3 319.4 381.5 326.4 377.9 334 375.6 343 374.5 352.9 373.3 363.1 372.1 373.7 371 384.2 369.7 394.4 368.4 404.3 367.3 414.1 365.9 424 364.4 434 362.8 444.4 361.3 454.9 359.8 465.3 358.5 475.4 357.4 485.1 356.1 494.7 354.6 504.2 353.2 514.1 351.7 524.4 350.2 535 348.5 545.6 346.5 555.9 344.3 565.9 341.9 575.5 339.5 585 337.4 594.6 335.6 604.6 333.9 614.8 333.1 619.9M392.8 304.4 390.8 312.4 387.7 319.8 383.2 327 379 334.9 377 344.2 377.9 354.3 380 364.7 381.7 375.3 381.3 386 378.1 396.5 373.1 406.6 368.5 416.2 365.9 425.6 365.8 435.1 367.4 445.1 368.7 455.7 368.4 466.8 366.3 477.9 363.6 488.3 361.2 497.7 360 506.4 359.8 514.9 359.4 523.9 357.8 534 354.9 545 351.4 556.4 348.4 567.6 346.4 578 345.2 587.5 343.8 596.7 341.8 605.9 339.3 615.6 338.1 620.8M392.8 304.4 391.1 311.9 389.5 320.3 387.5 329.2 385.5 338.6 384 348.7 383 358.6 381.5 367.9 380 377 378.8 386.2 378.2 396.1 378.3 406.5 378.8 417.3 379.2 428.1 379 438.3 377.6 447.8 375.2 456.9 372.1 466 369.2 475.6 367.1 486.1 365.7 497.3 365.1 508.8 364.7 520.1 363.9 530.6 362.4 540.2 360.2 549 357.6 557.6 355.2 566.5 353 576 351.1 586 349.2 596.3 347.2 606.7 344.7 616.8 343.1 621.7M392.8 304.4 391.1 313 390.1 321.5 389.8 329.9 390 338.8 390.3 348.5 390 358.5 388.3 368.5 386.1 378.5 384.8 388.4 384.6 398.3 385.1 408.4 385.1 418.8 383.7 429.5 380.8 440.1 377.5 450.4 375.1 460.2 374.5 469.5 375.6 478.7 377.1 488.3 377.4 498.3 375.8 508.8 372.6 519.4 369.1 529.7 366.4 539.5 364.8 548.9 363.8 558.3 362.6 568 360.4 578.2 357.2 588.6 353.7 598.7 350.9 608.5 348.9 617.9 348.1 622.5M392.8 304.4 392.9 313.4 393 322.3 392.7 331.3 392.6 340.6 392.7 350.3 393 360.3 392.9 370.3 392.3 380.4 391.5 390.4 390.6 400.5 389.6 410.6 388.6 420.7 387.4 430.8 386.2 440.9 385 451 383.8 460.9 382.8 470.9 382 480.8 381.3 490.7 380.5 500.7 379.4 510.7 378 520.7 376.2 530.7 374.2 540.6 372 550.4 369.7 560.2 367.4 570.1 364.9 580 362.2 589.7 359.5 599.5 356.9 609.1 354.3 618.8 353.1 623.6M392.8 304.4 394.5 313.7 395.6 323.2 395.8 332.8 395.6 342.5 395.7 352.5 396.3 362.5 396.9 372.4 397.2 382.4 396.8 392.4 395.8 402.5 394.3 412.5 393.1 422.4 392.5 432.2 392.7 441.9 392.8 451.7 392.2 461.7 390.5 472 388 482.4 385.6 492.8 383.9 503 383.2 512.9 383 522.7 382.6 532.6 381.2 542.5 378.7 552.4 375.6 562.3 372.6 571.9 369.9 581.4 367.6 590.7 365.2 600.2 362.7 609.9 359.7 619.8 358.1 624.8M392.8 304.4 394.9 314.2 397 324 398.6 334 400 343.9 401.2 353.9 401.9 363.9 402.1 374 401.9 384 401.3 394 400.8 404.1 400.1 414.1 399.3 424.1 398.5 434.1 397.6 444.1 396.7 454.1 395.6 464.1 394.6 474.1 393.6 484.1 392.8 494.1 391.9 504.1 391 514.1 389.9 524.1 388.3 534 386.3 543.9 384 553.7 381.5 563.4 379 573.1 376.3 582.8 373.3 592.4 370.3 602 367.3 611.6 364.4 621.2 363 626"/>
<path id="msr" d="M531 319 531 319 531 319 531 319 531 319 531 319 531 319M529.4 324.3 530 324.1 531.4 323.6 532.1 323.7 532.9 323.1 533.7 323.1 534.7 322.9M528 329.5 529.1 329.2 531.9 328.1 533.4 328.3 534.8 327.2 536.4 327 538.5 326.7M526.8 334.9 528.6 334.3 532.4 332.9 534.7 333.1 536.6 331.7 539.2 331.1 542 330.7M525.8 340.3 528.2 339.5 532.7 338 535.7 337.9 538 336.5 541.4 335.6 544.9 335.3M524.9 345.7 528 344.8 532.5 343.3 536.3 342.7 538.8 341.8 543.2 340.5 546.8 340.3M524 351.1 527.8 350.1 532.1 348.6 536.4 347.6 539.4 347.3 544.7 345.5 548.3 345.5M523.1 356.5 527.8 355.5 531.7 354 536.4 352.5 540 352.8 546 350.6 549.6 350.7M522.4 362 527.7 361 531.4 359.3 536.2 357.5 540.7 358.2 547.2 355.9 550.8 355.9M521.7 367.4 527.5 366.5 531.4 364.5 536 362.7 541.6 363.5 548.2 361.2 552 361.1M521.1 372.9 527 372 531.5 369.7 535.9 368.1 542.4 368.5 548.9 366.5 553.2 366.4M520.5 378.3 526.2 377.5 531.9 374.8 535.9 373.8 543.1 373.4 549.3 372 554.2 371.7M520 383.8 525.4 382.9 532.3 379.9 536.2 379.5 543.7 378.3 549.6 377.4 555.2 377M519.5 389.3 524.6 388.2 532.7 385.2 536.9 385.2 544.1 383.1 549.9 382.7 556.3 382.2M519.2 394.7 524 393.4 533 390.7 537.8 390.7 544.4 388.1 550.2 388 557.3 387.5M519 400.2 523.8 398.5 533.1 396.4 538.9 396 544.6 393.3 550.8 393.1 558.3 392.8M518.9 405.7 524 403.5 533 402.2 540 401.1 544.8 398.6 551.6 398.2 559.3 398.1M518.9 411.2 524.6 408.5 532.8 408 541 406 545.3 404 552.8 403.4 560.5 403.3M519 416.7 525.6 413.7 532.6 413.8 541.7 410.8 546.2 409.5 554.2 408.5 561.8 408.5M519.1 422.2 526.7 419 532.5 419.4 542.1 415.6 547.4 415 555.6 413.8 563.1 413.7M519.3 427.7 527.8 424.5 532.7 424.8 542.1 420.5 548.9 420.3 557 419.2 564.4 419M519.6 433.1 528.8 430.1 533.2 429.9 541.9 425.7 550.6 425.4 558.3 424.7 565.7 424.2M519.9 438.6 529.4 435.9 534 434.9 541.8 431.1 552.5 430.3 559.4 430.3 567.1 429.3M520.3 444.1 529.8 441.6 535 439.8 542 436.7 554.2 435.1 560.5 435.8 568.6 434.5M520.7 449.6 530 447.2 536.2 444.8 542.7 442.4 555.7 439.8 561.4 441.1 570.2 439.6M521.1 455 530.1 452.6 537.4 449.9 544 448 556.8 444.7 562.3 446.3 571.8 444.8M521.6 460.5 530.2 457.8 538.5 455.2 545.8 453.5 557.4 449.7 563.3 451.3 573.3 449.9M522.2 466 530.4 462.9 539.3 460.7 547.9 458.9 557.7 454.9 564.4 456.1 574.7 455.1M522.8 471.4 531 467.9 540 466.4 550.1 464 557.9 460.3 565.7 460.9 576.2 460.3M523.6 476.9 531.8 473 540.6 472 552.2 469 558.2 465.9 567.2 465.6 577.6 465.5M524.3 482.3 532.9 478.2 541.3 477.5 553.8 473.9 558.8 471.4 568.8 470.4 579 470.7M525.1 487.7 534.1 483.6 542.1 482.7 554.8 478.8 559.9 477 570.5 475.4 580.4 475.9M526 493.1 535.4 489.3 543.1 487.7 555.2 483.9 561.4 482.4 572.2 480.6 581.8 481M526.9 498.5 536.6 495.2 544.3 492.5 555.2 489 563.3 487.7 573.9 485.9 583.2 486.2M527.8 504 537.7 501.1 545.8 497.2 555 494.4 565.4 492.8 575.5 491.3 584.6 491.4M528.8 509.4 538.8 507 547.3 501.8 555.1 499.8 567.4 497.8 577 496.7 586.2 496.6M529.8 514.8 539.7 512.8 549 506.6 555.6 505.2 569.3 502.8 578.5 501.9 587.8 501.7M530.8 520.1 540.6 518.2 550.6 511.6 556.9 510.5 570.8 507.9 580.1 507 589.5 506.8M532 525.5 541.4 523.4 552.1 516.8 558.8 515.7 571.9 513 581.6 511.9 591.2 511.9M533.2 530.9 542.4 528.4 553.4 522.3 561.2 520.8 572.7 518.2 583.2 516.7 593 517M534.5 536.2 543.5 533.1 554.7 527.9 563.9 525.8 573.3 523.5 584.8 521.3 594.7 522M536 541.5 544.8 537.9 556.1 533.5 566.7 530.8 574.1 528.7 586.4 526 596.4 527.1M537.5 546.7 546.2 542.7 557.5 539 569.1 535.7 575.1 533.9 588.1 530.9 598.2 532.2M539.1 552 547.8 547.7 559 544.3 571 540.7 576.6 539 589.8 535.9 600 537.3M540.8 557.2 549.6 552.9 560.6 549.4 572.4 545.8 578.6 543.9 591.5 541.1 601.6 542.4M542.5 562.4 551.4 558.3 562.4 554.4 573.3 550.9 580.8 548.8 593.1 546.4 603.3 547.5M544.2 567.6 553.3 563.7 564.1 559.3 573.9 556.1 583.2 553.7 594.6 551.9 604.7 552.7M545.9 572.8 555.3 569.2 565.8 564.2 574.4 561.3 585.5 558.6 596 557.5 606.1 557.9M547.7 578.1 557.2 574.5 567.4 569.2 575.1 566.4 587.5 563.5 597.3 562.9 607.3 563.1M549.4 583.3 559 579.7 568.8 574.4 576.3 571.5 589.3 568.6 598.6 568.3 608.6 568.3M551.2 588.4 560.9 584.7 570.3 579.7 578 576.5 590.8 573.7 600.1 573.4 610 573.5M553.1 593.6 562.8 589.5 571.8 585 580.2 581.4 592.2 578.7 601.7 578.4 611.7 578.6M555 598.7 564.7 594.3 573.5 590.4 582.8 586.3 593.7 583.8 603.5 583.2 613.6 583.7M557.1 603.8 566.7 599.1 575.3 595.6 585.5 591.2 595.3 588.7 605.5 588 615.6 588.6M559.3 608.8 568.7 603.9 577.5 600.7 588.1 596.2 597.1 593.6 607.5 592.8 617.7 593.6M561.8 613.7 571 608.7 579.8 605.6 590.5 601.1 599.1 598.4 609.4 597.7 619.7 598.6M564.5 618.5 573.4 613.6 582.2 610.3 592.5 606.1 601.1 603.3 611.1 602.7 621.2 603.7M567.3 623.2 575.8 618.6 584.5 614.9 593.9 611.1 602.7 608.3 612.2 607.9 622 609M570 628 578.2 623.7 586.5 619.5 595.1 616 604 613.5 613.2 613.1 622.4 614.4M531 319 528 329.5 525.8 340.3 524 351.1 522.4 362 521.1 372.9 520 383.8 519.2 394.7 518.9 405.7 519 416.7 519.3 427.7 519.9 438.6 520.7 449.6 521.6 460.5 522.8 471.4 524.3 482.3 526 493.1 527.8 504 529.8 514.8 532 525.5 534.5 536.2 537.5 546.7 540.8 557.2 544.2 567.6 547.7 578.1 551.2 588.4 555 598.7 559.3 608.8 564.5 618.5 570 628M531 319 528.7 329.3 527.5 339.7 526.3 350.1 525 360.7 523.7 371.8 522.7 383.3 522.4 394.7 523 405.7 523.6 416.2 523.7 426.8 523.4 437.8 523.5 449.1 524.8 460 527.1 470.4 529.4 480.4 531 490.7 531.8 501.5 533.1 512.5 535.6 523.3 539.4 533.8 543.5 544.2 546.9 554.8 549.5 565.6 552.1 576.4 555.4 586.9 559.7 596.9 564.4 606.8 569.3 616.5 574.1 625.9M531 319 529.1 329.2 528.2 339.5 527.8 350.1 527.7 361 527 372 525.4 382.9 524 393.4 524 403.5 525.6 413.7 527.8 424.5 529.4 435.9 530 447.2 530.2 457.8 531 467.9 532.9 478.2 535.4 489.3 537.7 501.1 539.7 512.8 541.4 523.4 543.5 533.1 546.2 542.7 549.6 552.9 553.3 563.7 557.2 574.5 560.9 584.7 564.7 594.3 568.7 603.9 573.4 613.6 578.2 623.7M531 319 531.4 328.8 531.4 339.1 529.9 350 528.4 360.5 528 370.5 528.6 380.3 529.4 390.7 529.2 402 528.5 413.5 528.2 424.3 529.6 434.4 532.3 444.5 535.1 455.5 536.9 467.7 538.1 479.7 539.5 490.6 541.8 500.2 544.7 509.6 547.5 519.9 549.9 531.1 552.3 542.1 555.3 552.1 558.6 561.2 561.9 570.5 564.9 580.7 568.3 591.6 572.5 602.2 577.7 612 582.3 621.6M531 319 531.9 328.1 532.7 338 532.1 348.6 531.4 359.3 531.5 369.7 532.3 379.9 533 390.7 533 402.2 532.6 413.8 532.7 424.8 534 434.9 536.2 444.8 538.5 455.2 540 466.4 541.3 477.5 543.1 487.7 545.8 497.2 549 506.6 552.1 516.8 554.7 527.9 557.5 539 560.6 549.4 564.1 559.3 567.4 569.2 570.3 579.7 573.5 590.4 577.5 600.7 582.2 610.3 586.5 619.5M531 319 531.1 328.1 532.2 337.7 533.7 347.9 535.2 358.8 535.4 370.3 534.2 381.9 533.2 392.6 534.3 402.3 537.5 411.8 540.9 422.1 542.7 433.5 542.7 444.7 542.4 454.5 543.3 463.2 545.7 472 548.5 482.6 550.8 494.8 552.4 507 554.4 517.8 557.1 527.1 560.6 536.3 564.5 546.8 568.2 558.4 571.9 569.9 575.7 580.1 579.6 589.1 583.5 598 587.4 607.5 590.8 617.7M531 319 533.4 328.3 535.7 337.9 536.4 347.6 536.2 357.5 535.9 368.1 536.2 379.5 537.8 390.7 540 401.1 541.7 410.8 542.1 420.5 541.8 431.1 542.7 442.4 545.8 453.5 550.1 464 553.8 473.9 555.2 483.9 555 494.4 555.6 505.2 558.8 515.7 563.9 525.8 569.1 535.7 572.4 545.8 573.9 556.1 575.1 566.4 578 576.5 582.8 586.3 588.1 596.2 592.5 606.1 595.1 616M531 319 534.8 327.6 537.6 336.9 538.3 347.5 538.8 358.1 540 367.8 541.3 377 541.8 386.9 541.4 398 541.2 409.8 542.4 421.2 545.4 431.4 549.2 441.1 551.8 451.5 553 463.1 554.2 474.9 557 485.7 561.4 495 566 503.9 569.1 513.5 570.5 524 571.9 534.6 574.7 544.5 578.7 553.7 582.4 563.2 585.1 573.6 587.6 584.5 591.1 594.9 595.6 604.7 599.5 614.6M531 319 534.8 327.2 538 336.5 539.4 347.3 540.7 358.2 542.4 368.5 543.7 378.3 544.4 388.1 544.8 398.6 546.2 409.5 548.9 420.3 552.5 430.3 555.7 439.8 557.4 449.7 557.9 460.3 558.8 471.4 561.4 482.4 565.4 492.8 569.3 502.8 571.9 513 573.3 523.5 575.1 533.9 578.6 543.9 583.2 553.7 587.5 563.5 590.8 573.7 593.7 583.8 597.1 593.6 601.1 603.3 604 613.5M531 319 535.7 327.4 540.1 336.3 542.3 345.9 543.4 355.9 544.2 366.8 545.3 378.6 547.7 390.1 550.8 400.4 553.5 409.8 554.7 419.3 554.7 429.6 555.7 440.6 558.8 451.1 563.3 460.8 567.2 469.9 568.8 479.5 568.6 490.1 569.3 501.1 572.8 511.7 578.5 521.9 584.2 531.9 587.9 542.2 589.5 553 590.7 563.7 593.5 573.9 598.3 583.5 603.6 593 607.3 602.8 608.6 612.9M531 319 536.4 327 541.4 335.6 544.7 345.5 547.2 355.9 548.9 366.5 549.6 377.4 550.2 388 551.6 398.2 554.2 408.5 557 419.2 559.4 430.3 561.4 441.1 563.3 451.3 565.7 460.9 568.8 470.4 572.2 480.6 575.5 491.3 578.5 501.9 581.6 511.9 584.8 521.3 588.1 530.9 591.5 541.1 594.6 551.9 597.3 562.9 600.1 573.4 603.5 583.2 607.5 592.8 611.1 602.7 613.2 613.1M531 319 537.9 326.9 543.4 335.8 546 346.2 547.9 356.8 550.1 366.9 552.3 376.8 554.1 386.8 555.6 397.4 557.3 408.3 559.7 418.9 563 429 566.7 438.8 569.9 449.2 572 460.2 574.1 471.4 576.7 482.1 580.1 492.3 583.8 502.1 587.1 512.1 589.6 522.6 592.2 532.9 595.5 542.9 599.2 552.5 602.4 562.4 605.2 572.6 608.3 583 612.2 593.1 616 603.2 617.8 613.8M531 319 538.5 326.7 544.9 335.3 548.3 345.5 550.8 355.9 553.2 366.4 555.2 377 557.3 387.5 559.3 398.1 561.8 408.5 564.4 419 567.1 429.3 570.2 439.6 573.3 449.9 576.2 460.3 579 470.7 581.8 481 584.6 491.4 587.8 501.7 591.2 511.9 594.7 522 598.2 532.2 601.6 542.4 604.7 552.7 607.3 563.1 610 573.5 613.6 583.7 617.7 593.6 621.2 603.7 622.4 614.4"/>
<path id="mcl" d="M322.5 611.7 330.7 609.4 338.9 607.4 347.3 606.3 355.8 606 360 605.8M323.1 615.7 331.2 613.7 339.3 611.9 347.6 610.8 355.9 610.4 360.1 610.1M323.7 619.7 331.7 618 339.8 616.3 347.9 615.3 356.1 614.7 360.2 614.4M324.4 623.8 332.2 622.2 340.2 620.8 348.2 619.8 356.3 619.1 360.3 618.8M325 627.8 332.8 626.5 340.6 625.3 348.6 624.3 356.5 623.5 360.5 623.1M325.6 631.8 333.3 630.8 341.1 629.8 348.9 628.8 356.7 627.9 360.6 627.4M326.3 635.8 333.9 635 341.5 634.3 349.2 633.3 356.8 632.2 360.6 631.7M327 639.8 334.5 639.3 342 638.7 349.5 637.8 356.9 636.6 360.7 636M327.8 643.8 335.1 643.5 342.4 643.2 349.8 642.3 357.1 641 360.7 640.3M328.5 647.8 335.7 647.8 342.9 647.7 350.1 646.8 357.2 645.4 360.7 644.7M329.3 651.8 336.3 652.1 343.4 652.1 350.4 651.3 357.3 649.7 360.8 649M330 655.8 336.9 656.3 343.8 656.6 350.7 655.8 357.4 654.1 360.8 653.3M322.5 611.7 323.7 619.7 325 627.8 326.3 635.8 327.8 643.8 329.3 651.8 330 655.8M326.6 610.6 327.7 618.9 328.9 627.1 330.1 635.4 331.4 643.7 332.8 651.9 333.5 656M330.7 609.4 331.7 618 332.8 626.5 333.9 635 335.1 643.5 336.3 652.1 336.9 656.3M334.8 608.3 335.7 617.1 336.7 625.9 337.7 634.6 338.8 643.4 339.8 652.2 340.4 656.5M338.9 607.4 339.8 616.3 340.6 625.3 341.5 634.3 342.4 643.2 343.4 652.1 343.8 656.6M343.1 606.7 343.8 615.8 344.6 624.8 345.4 633.8 346.1 642.8 346.9 651.9 347.3 656.4M347.3 606.3 347.9 615.3 348.6 624.3 349.2 633.3 349.8 642.3 350.4 651.3 350.7 655.8M351.5 606.1 352 615 352.5 623.9 353 632.8 353.4 641.7 353.9 650.6 354.1 655M355.8 606 356.1 614.7 356.5 623.5 356.8 632.2 357.1 641 357.3 649.7 357.4 654.1M360 605.8 360.2 614.4 360.5 623.1 360.6 631.7 360.7 640.3 360.8 649 360.8 653.3"/>
<path id="mcr" d="M573.3 595.5 581.9 593.8 590.5 592.2 599.3 591 608 590.5 616.8 590M573.8 600 582.4 598.4 590.9 596.8 599.5 595.6 608.1 594.9 616.8 594.1M574.4 604.6 582.8 603 591.3 601.5 599.8 600.2 608.3 599.2 616.7 598.3M574.9 609.1 583.3 607.6 591.7 606.2 600 604.8 608.4 603.6 616.7 602.4M575.5 613.7 583.7 612.3 592 610.8 600.3 609.4 608.5 608 616.7 606.6M576 618.2 584.2 616.9 592.4 615.5 600.5 614 608.6 612.4 616.6 610.7M576.6 622.8 584.7 621.5 592.7 620.2 600.7 618.6 608.6 616.7 616.5 614.8M577.2 627.3 585.2 626.1 593.1 624.8 600.9 623.2 608.6 621.1 616.3 619M577.8 631.8 585.6 630.7 593.4 629.5 601.1 627.8 608.7 625.5 616.1 623.1M578.4 636.4 586.1 635.3 593.8 634.2 601.3 632.4 608.7 629.9 616 627.3M579 640.9 586.6 639.9 594.2 638.8 601.6 636.9 608.7 634.2 615.8 631.4M573.3 595.5 574.4 604.6 575.5 613.7 576.6 622.8 577.8 631.8 579 640.9M577.6 594.7 578.6 603.8 579.6 613 580.6 622.1 581.7 631.2 582.8 640.4M581.9 593.8 582.8 603 583.7 612.3 584.7 621.5 585.6 630.7 586.6 639.9M586.2 592.9 587.1 602.2 587.9 611.6 588.7 620.9 589.5 630.1 590.4 639.4M590.5 592.2 591.3 601.5 592 610.8 592.7 620.2 593.4 629.5 594.2 638.8M594.9 591.5 595.5 600.8 596.2 610.1 596.8 619.4 597.3 628.7 597.9 638M599.3 591 599.8 600.2 600.3 609.4 600.7 618.6 601.1 627.8 601.6 636.9M603.6 590.7 604 599.7 604.4 608.7 604.7 617.7 604.9 626.7 605.1 635.6M608 590.5 608.3 599.2 608.5 608 608.6 616.7 608.7 625.5 608.7 634.2M612.4 590.3 612.5 598.8 612.6 607.3 612.5 615.8 612.4 624.3 612.2 632.8M616.8 590 616.7 598.3 616.7 606.6 616.5 614.8 616.1 623.1 615.8 631.4"/>
<path id="mhl" d="M361.7 630 370.3 629.8 378.8 629.7 387.4 629.5 396 629.4 404.6 629.2 413.1 629.1 421.7 629 430.3 628.9 438.8 628.8 447.4 628.8 456 628.7 464.6 628.6 473.1 628.6 481.7 628.5 486 628.5M361.4 634.1 370 633.9 378.6 633.6 387 633.6 395.6 633.5 404.4 633.4 413 633.5 421.4 633.6 430.1 633.2 438.9 632.7 447.4 632.8 455.7 633.1 464.4 633.1 473.2 632.9 481.7 632.9 486 632.9M361 638.2 369.6 638.2 378.1 638.2 386.9 637.7 395.6 637.7 404 638 412.6 637.6 421.5 636.9 430 637 438.4 637.8 447.1 638.1 456 637.4 464.5 636.9 472.9 637 481.6 637.2 486 637.2M360.7 642.2 369.3 642 378 642.3 386.6 642.6 395.2 642.3 403.9 641.5 412.5 641.1 421.1 641.4 429.8 641.9 438.5 642.1 447 642 455.6 641.8 464.3 641.5 473.1 641.3 481.7 641.4 486 641.6M360.3 646.3 369 646.1 377.7 646.1 386.2 646.5 394.9 646.2 403.8 645.6 412.4 645.7 420.8 646.6 429.5 646.6 438.5 645.7 447.1 645.2 455.5 645.8 464.2 646.3 473 646.1 481.7 645.9 486 645.9M360 650.4 368.5 650.7 377.3 650.1 386.3 649.2 394.9 649.6 403.1 651.2 411.9 651.5 421.1 650.3 429.7 649.6 437.9 649.9 446.7 650.2 455.8 650 464.4 650.2 472.8 650.6 481.6 650.5 486 650.3M359.6 654.5 368.5 654.5 377.2 654.3 385.6 654.4 394.4 654.5 403.5 654.4 412.1 654.6 420.4 654.7 429.2 654.4 438.4 654.2 447 654.5 455.4 654.8 464.1 654.6 473.1 654.4 481.8 654.6 486.1 654.6M359.3 658.6 368 658.4 376.8 658.9 385.6 659.4 394.3 659.1 403 658.2 411.7 657.8 420.6 658.4 429.4 659.1 438 659.4 446.7 659 455.6 658.8 464.3 658.8 473 658.8 481.8 658.8 486.2 659M359 662.6 367.7 662.7 376.5 662.9 385.4 663 394.2 662.9 402.8 662.9 411.6 662.7 420.6 662.7 429.3 663 437.9 663.4 446.7 663.4 455.6 663.1 464.4 663.1 473.1 663.2 481.9 663.3 486.3 663.3M358.6 666.7 367.5 666.9 376.3 666.7 384.9 666.7 393.8 666.9 402.8 667.2 411.6 667.5 420.1 667.5 429 667.2 438.1 667 446.9 667.3 455.4 667.6 464.3 667.6 473.2 667.5 482 667.7 486.4 667.7M358.3 670.8 367.1 670.9 376 671 384.8 671.1 393.7 671.2 402.5 671.3 411.3 671.4 420.2 671.5 429 671.6 437.9 671.7 446.7 671.7 455.6 671.8 464.4 671.8 473.2 671.9 482.1 672 486.5 672M361.7 630 361 638.2 360.3 646.3 359.6 654.5 359 662.6 358.3 670.8M366 629.9 365.3 638.2 364.7 646.2 364 654.5 363.3 662.6 362.7 670.9M370.3 629.8 369.6 638.2 369 646.1 368.5 654.5 367.7 662.7 367.1 670.9M374.6 629.8 373.8 638.3 373.4 646 372.9 654.4 372.1 662.8 371.6 671M378.8 629.7 378.1 638.2 377.7 646.1 377.2 654.3 376.5 662.9 376 671M383.1 629.6 382.5 637.9 381.9 646.3 381.4 654.4 380.9 663 380.4 671.1M387.4 629.5 386.9 637.7 386.2 646.5 385.6 654.4 385.4 663 384.8 671.1M391.7 629.4 391.3 637.6 390.5 646.5 389.9 654.5 389.8 662.9 389.2 671.2M396 629.4 395.6 637.7 394.9 646.2 394.4 654.5 394.2 662.9 393.7 671.2M400.3 629.3 399.8 637.8 399.4 645.9 399 654.5 398.4 662.9 398.1 671.3M404.6 629.2 404 638 403.8 645.6 403.5 654.4 402.8 662.9 402.5 671.3M408.8 629.2 408.3 637.9 408.2 645.5 407.9 654.5 407.1 662.8 406.9 671.4M413.1 629.1 412.6 637.6 412.4 645.7 412.1 654.6 411.6 662.7 411.3 671.4M417.4 629 417.1 637.2 416.6 646.2 416.2 654.7 416.1 662.7 415.8 671.5M421.7 629 421.5 636.9 420.8 646.6 420.4 654.7 420.6 662.7 420.2 671.5M426 628.9 425.8 636.8 425.1 646.7 424.7 654.6 425 662.8 424.6 671.5M430.3 628.9 430 637 429.5 646.6 429.2 654.4 429.3 663 429 671.6M434.6 628.9 434.2 637.4 434 646.2 433.8 654.2 433.6 663.3 433.5 671.6M438.8 628.8 438.4 637.8 438.5 645.7 438.4 654.2 437.9 663.4 437.9 671.7M443.1 628.8 442.7 638.1 442.8 645.3 442.8 654.3 442.2 663.5 442.3 671.7M447.4 628.8 447.1 638.1 447.1 645.2 447 654.5 446.7 663.4 446.7 671.7M451.7 628.7 451.6 637.8 451.3 645.4 451.2 654.7 451.2 663.2 451.1 671.7M456 628.7 456 637.4 455.5 645.8 455.4 654.8 455.6 663.1 455.6 671.8M460.3 628.7 460.3 637 459.8 646.1 459.7 654.8 460.1 663.1 460 671.8M464.6 628.6 464.5 636.9 464.2 646.3 464.1 654.6 464.4 663.1 464.4 671.8M468.9 628.6 468.7 636.9 468.6 646.3 468.6 654.4 468.7 663.1 468.8 671.9M473.1 628.6 472.9 637 473 646.1 473.1 654.4 473.1 663.2 473.2 671.9M477.4 628.6 477.2 637.2 477.4 646 477.5 654.5 477.4 663.2 477.7 671.9M481.7 628.5 481.6 637.2 481.7 645.9 481.8 654.6 481.9 663.3 482.1 672M486 628.5 486 637.2 486 645.9 486.1 654.6 486.3 663.3 486.5 672"/>
<path id="mhr" d="M490 629 498.5 629.4 507 629.8 515.6 630.1 524.1 630.5 532.6 630.7 541.1 631 549.7 631.2 558.2 631.4M489.9 633.2 498.4 633.3 506.9 634.2 515.8 633.5 523.9 634.4 532.6 634.1 541.2 634.3 549.7 634.4 558.2 634.3M489.8 637.5 498.5 637.5 507.4 637.4 514.7 638 524.3 638 532.8 637.9 540.9 637.4 549.7 637.1 558.2 637.1M489.7 641.7 498 642.4 506.1 641.4 516.7 642.1 523.6 640.4 532.3 641.3 541.6 641.1 549.5 640.4 558.2 640M489.6 646 498.5 645.4 507.5 645.3 514.3 645.6 524.2 645.9 532.9 644.9 540.7 643.7 549.8 643.1 558.2 642.8M489.5 650.2 497.7 649.9 506.4 650.9 515.8 648.2 524.2 648.7 532.4 647.6 541.2 647.7 549.5 647.2 558.2 645.7M489.4 654.5 498.2 653.8 506.8 653.1 515.3 653.5 523.6 653 532.3 652 541.3 650.3 549.8 649.2 558.2 648.6M489.3 658.7 498.1 658.8 506.6 657.2 515 657.6 524.2 655.1 533 655.2 540.6 654.3 549.5 652.7 558.2 651.4M489.2 663 497.7 662.1 506.3 661.6 515.9 660.7 523.5 660.2 532.1 658.7 541.6 657.1 549.7 655.7 558.2 654.3M489.1 667.2 497.9 666.1 506.8 665.9 514.6 664.2 524.2 663.8 532.7 662 540.7 660.5 549.7 658.9 558.2 657.1M489 671.5 497.7 670.5 506.4 669.5 515.2 668.4 523.8 667.2 532.5 665.6 541.1 663.8 549.6 661.9 558.2 660M490 629 489.8 637.5 489.6 646 489.4 654.5 489.2 663 489 671.5M494.3 629.2 494.1 637.5 493.9 645.8 493.8 654.1 493.6 662.6 493.4 671M498.5 629.4 498.5 637.5 498.5 645.4 498.2 653.8 497.7 662.1 497.7 670.5M502.8 629.6 503 637.5 503.2 645.2 502.5 653.4 501.8 661.8 502.1 670M507 629.8 507.4 637.4 507.5 645.3 506.8 653.1 506.3 661.6 506.4 669.5M511.3 630 511.1 637.7 510.9 645.4 511.1 653.2 511.2 661.1 510.8 669M515.6 630.1 514.7 638 514.3 645.6 515.3 653.5 515.9 660.7 515.2 668.4M519.8 630.3 519.3 638 519 646 519.4 653.3 519.9 660.5 519.5 667.8M524.1 630.5 524.3 638 524.2 645.9 523.6 653 523.5 660.2 523.8 667.2M528.4 630.6 528.7 638.1 528.7 645.3 527.9 652.8 527.5 659.4 528.2 666.4M532.6 630.7 532.8 637.9 532.9 644.9 532.3 652 532.1 658.7 532.5 665.6M536.9 630.9 536.9 637.5 536.9 644.5 536.9 650.9 536.9 658 536.8 664.7M541.1 631 540.9 637.4 540.7 643.7 541.3 650.3 541.6 657.1 541.1 663.8M545.4 631.1 545 637.4 545 643.2 545.6 649.8 545.8 656.2 545.3 662.9M549.7 631.2 549.7 637.1 549.8 643.1 549.8 649.2 549.7 655.7 549.6 661.9M553.9 631.3 554.2 637.1 554.3 643 554 648.9 553.7 655 553.9 660.9M558.2 631.4 558.2 637.1 558.2 642.8 558.2 648.6 558.2 654.3 558.2 660"/>
  <clipPath id="rclip"><rect x="722" y="95" width="640" height="710"/></clipPath>
</defs>
<!-- RIGHT PANEL -->
<g id="rp" clip-path="url(#rclip)">
  <rect x="722" y="95" width="640" height="710" fill="url(#grid)"/>
  <rect x="722.3" y="95" width="1.2" height="710" fill="#d8d8d8"/>
  <rect x="722" y="793" width="640" height="4" fill="#cecece"/>
  <rect x="722" y="797.5" width="640" height="1.6" fill="#adadad"/>
  <rect x="938.8" y="95" width="1" height="710" fill="#8c8c8c"/>
</g>
<!-- PIECES -->
<g id="pieces" clip-path="url(#rclip)">
<rect x="847" y="393.2" width="180" height="6" fill="#869c7a" stroke="#55604f" stroke-width="0.8"/>
<rect x="847" y="397.6" width="180" height="1.8" fill="#d2553e"/>
<rect x="850" y="393.6" width="3" height="3.6" fill="#a0a890" stroke="#555" stroke-width=".5"/><rect x="1021" y="393.6" width="3" height="3.6" fill="#a0a890" stroke="#555" stroke-width=".5"/>
<path d="M946.4 291.7 Q970 286 990.9 284.8 C1006 294 1014.5 305 1014.3 322 L1012.4 363.3 Q980 365 954.2 372.8 C957 345 952 318 946.4 291.7Z" fill="#88b3e3" stroke="#88b3e3" stroke-width="7.5" stroke-linejoin="round"/>
<path d="M946.4 291.7 Q970 286 990.9 284.8 C1006 294 1014.5 305 1014.3 322 L1012.4 363.3 Q980 365 954.2 372.8 C957 345 952 318 946.4 291.7Z" fill="#869c7a" stroke="#2e3a30" stroke-width="0.8" stroke-linejoin="round"/>
<circle cx="946.4" cy="291.7" r="1.1" fill="#1c2420"/>
<circle cx="990.9" cy="284.8" r="1.1" fill="#1c2420"/>
<circle cx="1012.4" cy="363.3" r="1.1" fill="#1c2420"/>
<circle cx="954.2" cy="372.8" r="1.1" fill="#1c2420"/>

<path d="M947.6 291.6 C953 318 958 345 955.6 372.2" fill="none" stroke="#c8503c" stroke-width="1.6"/>
<path d="M952 290.8 C957.5 318 962.5 345 960.2 371" fill="none" stroke="#a8905a" stroke-width="1.1"/>
<path d="M1019 230.2 L1044.6 230.2 L1044.9 364.3 L1019.3 364.3Z" fill="#869c7a" stroke="#2e3a30" stroke-width="0.8" stroke-linejoin="round"/>
<circle cx="1019" cy="230.2" r="1.1" fill="#1c2420"/>
<circle cx="1044.6" cy="230.2" r="1.1" fill="#1c2420"/>
<circle cx="1044.9" cy="364.3" r="1.1" fill="#1c2420"/>
<circle cx="1019.3" cy="364.3" r="1.1" fill="#1c2420"/>
<circle cx="1032" cy="364.3" r="1.1" fill="#1c2420"/>
<circle cx="1032" cy="230.2" r="1.1" fill="#1c2420"/>

<rect x="1019.4" y="230.2" width="25" height="5.2" fill="#9a9a6e" opacity=".8"/>
<rect x="1019" y="229.6" width="25.6" height="1.8" fill="#d2553e"/>
<path d="M1124.9 290.5 Q1102 286 1080.9 283.9 C1066 292 1057 304 1057.4 322 L1059.9 361.9 Q1092 363.5 1117.6 371.3 C1115 345 1119.5 318 1124.9 290.5Z" fill="#88b3e3" stroke="#88b3e3" stroke-width="7.5" stroke-linejoin="round"/>
<path d="M1124.9 290.5 Q1102 286 1080.9 283.9 C1066 292 1057 304 1057.4 322 L1059.9 361.9 Q1092 363.5 1117.6 371.3 C1115 345 1119.5 318 1124.9 290.5Z" fill="#869c7a" stroke="#2e3a30" stroke-width="0.8" stroke-linejoin="round"/>
<circle cx="1124.9" cy="290.5" r="1.1" fill="#1c2420"/>
<circle cx="1080.9" cy="283.9" r="1.1" fill="#1c2420"/>
<circle cx="1059.9" cy="361.9" r="1.1" fill="#1c2420"/>
<circle cx="1117.6" cy="371.3" r="1.1" fill="#1c2420"/>

<path d="M1123.6 290.4 C1118.3 318 1113.7 345 1116.2 370.8" fill="none" stroke="#c8503c" stroke-width="1.6"/>
<path d="M1119.3 289.6 C1114 318 1109.3 345 1111.6 369.6" fill="none" stroke="#a8905a" stroke-width="1.1"/>
<path d="M1045 327.6H1057.5" stroke="#7f97b8" stroke-width="0.8"/>
<rect x="1150.2" y="211.5" width="29.2" height="158" fill="#8fb0da"/>
<rect x="1154" y="211.5" width="2.1" height="158" fill="#b8637a"/><rect x="1173.3" y="211.5" width="2.1" height="158" fill="#b8637a"/>
<rect x="1160.9" y="211.5" width="7" height="158" fill="#4d5650"/><rect x="1163.2" y="212.5" width="2.3" height="156" fill="#d2d2b2"/>
<circle cx="1155" cy="212" r="1.5" fill="#111"/><circle cx="1155" cy="369.3" r="1.5" fill="#111"/>
<circle cx="1174.3" cy="212" r="1.5" fill="#111"/><circle cx="1174.3" cy="369.3" r="1.5" fill="#111"/>
<path d="M1158 288.5H1171" stroke="#8f9fb5" stroke-width="0.7" stroke-dasharray="2 1.5"/>
<path d="M787.7 397.2 Q791.5 407.5 799.4 406.4 Q805 405.8 809 404.4 C826 431 843 452 855 475.7 L829.4 574.3 Q791 576.5 753.2 574.3 L731.7 475 C757 462 768 432 787.7 397.2Z" fill="#88b3e3" stroke="#88b3e3" stroke-width="7.5" stroke-linejoin="round"/>
<path d="M787.7 397.2 Q791.5 407.5 799.4 406.4 Q805 405.8 809 404.4 C826 431 843 452 855 475.7 L829.4 574.3 Q791 576.5 753.2 574.3 L731.7 475 C757 462 768 432 787.7 397.2Z" fill="#869c7a" stroke="#2e3a30" stroke-width="0.8" stroke-linejoin="round"/>
<circle cx="787.7" cy="397.2" r="1.1" fill="#1c2420"/>
<circle cx="809" cy="404.4" r="1.1" fill="#1c2420"/>
<circle cx="855" cy="475.7" r="1.1" fill="#1c2420"/>
<circle cx="829.4" cy="574.3" r="1.1" fill="#1c2420"/>
<circle cx="753.2" cy="574.3" r="1.1" fill="#1c2420"/>
<circle cx="731.7" cy="475" r="1.1" fill="#1c2420"/>

<path d="M1099.1 388 Q1094.5 398.5 1087 397.4 Q1082 396.6 1077.5 394.6 C1060 421 1044 444 1031.6 466.6 L1057.1 564.5 Q1095 566.5 1133 564.5 L1155.5 465.4 C1130 452 1119 424 1099.1 388Z" fill="#88b3e3" stroke="#88b3e3" stroke-width="7.5" stroke-linejoin="round"/>
<path d="M1099.1 388 Q1094.5 398.5 1087 397.4 Q1082 396.6 1077.5 394.6 C1060 421 1044 444 1031.6 466.6 L1057.1 564.5 Q1095 566.5 1133 564.5 L1155.5 465.4 C1130 452 1119 424 1099.1 388Z" fill="#869c7a" stroke="#2e3a30" stroke-width="0.8" stroke-linejoin="round"/>
<circle cx="1099.1" cy="388" r="1.1" fill="#1c2420"/>
<circle cx="1077.5" cy="394.6" r="1.1" fill="#1c2420"/>
<circle cx="1031.6" cy="466.6" r="1.1" fill="#1c2420"/>
<circle cx="1057.1" cy="564.5" r="1.1" fill="#1c2420"/>
<circle cx="1133" cy="564.5" r="1.1" fill="#1c2420"/>
<circle cx="1155.5" cy="465.4" r="1.1" fill="#1c2420"/>

<path d="M912.5 419.8 Q922 426.5 936.8 426.2 L936.8 564.8 L867 564.8 L864.7 485.5 C884 481 886 446 912.5 419.8Z" fill="#88b3e3" stroke="#88b3e3" stroke-width="7.5" stroke-linejoin="round"/>
<path d="M912.5 419.8 Q922 426.5 936.8 426.2 L936.8 564.8 L867 564.8 L864.7 485.5 C884 481 886 446 912.5 419.8Z" fill="#869c7a" stroke="#2e3a30" stroke-width="0.8" stroke-linejoin="round"/>
<circle cx="912.5" cy="419.8" r="1.1" fill="#1c2420"/>
<circle cx="936.8" cy="426.2" r="1.1" fill="#1c2420"/>
<circle cx="936.8" cy="564.8" r="1.1" fill="#1c2420"/>
<circle cx="867" cy="564.8" r="1.1" fill="#1c2420"/>
<circle cx="864.7" cy="485.5" r="1.1" fill="#1c2420"/>
<circle cx="865.6" cy="519.5" r="1.1" fill="#1c2420"/>

<path d="M936.8 519.5H906.1" stroke="#d05a45" stroke-width="2" fill="none"/><path d="M906.1 519.5L892.8 548.2L895.1 564.8" stroke="#a85540" stroke-width="1.2" fill="none"/>
<path d="M972.1 419.8 Q962 426.5 948.3 426.2 L948.3 564.8 L1018.1 564.8 L1020.7 485.5 C1001 481 999 446 972.1 419.8Z" fill="#88b3e3" stroke="#88b3e3" stroke-width="7.5" stroke-linejoin="round"/>
<path d="M972.1 419.8 Q962 426.5 948.3 426.2 L948.3 564.8 L1018.1 564.8 L1020.7 485.5 C1001 481 999 446 972.1 419.8Z" fill="#869c7a" stroke="#2e3a30" stroke-width="0.8" stroke-linejoin="round"/>
<circle cx="972.1" cy="419.8" r="1.1" fill="#1c2420"/>
<circle cx="948.3" cy="426.2" r="1.1" fill="#1c2420"/>
<circle cx="948.3" cy="564.8" r="1.1" fill="#1c2420"/>
<circle cx="1018.1" cy="564.8" r="1.1" fill="#1c2420"/>
<circle cx="1020.7" cy="485.5" r="1.1" fill="#1c2420"/>
<circle cx="1019.6" cy="519.5" r="1.1" fill="#1c2420"/>

<path d="M948.3 519.5H979" stroke="#d05a45" stroke-width="2" fill="none"/><path d="M979 519.5L993 548.2L990.5 564.8" stroke="#a85540" stroke-width="1.2" fill="none"/>
<path d="M819 594.2H889.5M994 594.2H1067" stroke="#9fadbf" stroke-width="1.3" fill="none"/>
<path d="M819 615.6H889.5M994 615.6H1067" stroke="#9fadbf" stroke-width="1.3" fill="none"/>
<path d="M856 476.5H865M1021 466.8H1031" stroke="#8aa0bc" stroke-width="0.8"/>
<path d="M938 489.5Q942.5 487.5 947 489.5M938 498Q942.5 496.5 947 498M938 594.5H947M938 597H947" stroke="#8f9aa8" stroke-width="0.7" fill="none"/>
<path d="M906.1 569.9 L936.3 569.9 L936.3 614.7 L894.6 614.7 L891.6 598Z" fill="#88b3e3" stroke="#88b3e3" stroke-width="7.5" stroke-linejoin="round"/>
<path d="M906.1 569.9 L936.3 569.9 L936.3 614.7 L894.6 614.7 L891.6 598Z" fill="#869c7a" stroke="#2e3a30" stroke-width="0.8" stroke-linejoin="round"/>
<circle cx="906.1" cy="569.9" r="1.1" fill="#1c2420"/>
<circle cx="936.3" cy="569.9" r="1.1" fill="#1c2420"/>
<circle cx="891.6" cy="598" r="1.1" fill="#1c2420"/>

<path d="M906.1 569.9H936.3" stroke="#d05a45" stroke-width="2.2"/><path d="M906.1 569.9L891.6 598" stroke="#c0604a" stroke-width="1.2"/>
<path d="M948.3 569.9 L979 569.9 L993.1 598 L989.7 614.7 L948.3 614.7Z" fill="#88b3e3" stroke="#88b3e3" stroke-width="7.5" stroke-linejoin="round"/>
<path d="M948.3 569.9 L979 569.9 L993.1 598 L989.7 614.7 L948.3 614.7Z" fill="#869c7a" stroke="#2e3a30" stroke-width="0.8" stroke-linejoin="round"/>
<circle cx="948.3" cy="569.9" r="1.1" fill="#1c2420"/>
<circle cx="979" cy="569.9" r="1.1" fill="#1c2420"/>
<circle cx="993.1" cy="598" r="1.1" fill="#1c2420"/>

<path d="M948.3 569.9H979" stroke="#d05a45" stroke-width="2.2"/><path d="M979 569.9L993.1 598" stroke="#c0604a" stroke-width="1.2"/>
<path d="M768.2 584H818.8V626H768.2Z" fill="#88b3e3" stroke="#88b3e3" stroke-width="7.5" stroke-linejoin="round"/>
<path d="M768.2 584H818.8V626H768.2Z" fill="#86743f" stroke="#2e3a30" stroke-width="0.8" stroke-linejoin="round"/>
<circle cx="768.2" cy="584" r="1.1" fill="#1c2420"/>
<circle cx="818.8" cy="584" r="1.1" fill="#1c2420"/>
<circle cx="818.8" cy="626" r="1.1" fill="#1c2420"/>
<circle cx="768.2" cy="626" r="1.1" fill="#1c2420"/>
<rect x="768.2" y="602.8" width="50.59999999999991" height="4.4" fill="#d2604f"/><rect x="768.2" y="604.3" width="50.59999999999991" height="1.5" fill="#cfd3d8"/>
<path d="M1067.6 584H1118.6V625.7H1067.6Z" fill="#88b3e3" stroke="#88b3e3" stroke-width="7.5" stroke-linejoin="round"/>
<path d="M1067.6 584H1118.6V625.7H1067.6Z" fill="#86743f" stroke="#2e3a30" stroke-width="0.8" stroke-linejoin="round"/>
<circle cx="1067.6" cy="584" r="1.1" fill="#1c2420"/>
<circle cx="1118.6" cy="584" r="1.1" fill="#1c2420"/>
<circle cx="1118.6" cy="625.7" r="1.1" fill="#1c2420"/>
<circle cx="1067.6" cy="625.7" r="1.1" fill="#1c2420"/>
<rect x="1067.6" y="602.65" width="51.0" height="4.4" fill="#d2604f"/><rect x="1067.6" y="604.15" width="51.0" height="1.5" fill="#cfd3d8"/>
<path d="M1227 403.3 L1267.5 403.3 L1269.6 404.9 L1271.7 406.4 L1273.8 407.9 L1275.9 409.4 L1277.9 411.1 L1280.0 413.0 L1282.0 415.0 L1284.0 417.0 L1285.9 419.1 L1287.9 421.4 L1289.9 424.0 L1292.1 427.0 L1294.5 430.5 L1297.1 434.5 L1299.8 438.8 L1302.4 443.2 L1304.9 447.3 L1307.1 451.0 L1308.9 454.3 L1310.5 457.3 L1311.9 460.2 L1313.3 462.8 L1314.6 465.2 L1316.1 467.5 L1317.7 469.5 L1319.3 471.2 L1320.9 472.7 L1322.5 474.2 L1324.1 475.6 L1325.7 477.1 L1323.6 556.7 L1171.1 556.7 L1168.4 477.4 L1170.0 475.9 L1171.6 474.5 L1173.2 473.1 L1174.8 471.7 L1176.4 470.0 L1178.0 468.0 L1179.5 465.8 L1180.8 463.3 L1182.2 460.7 L1183.6 457.9 L1185.2 454.8 L1187.0 451.5 L1189.2 447.8 L1191.6 443.5 L1194.3 439.1 L1197.0 434.7 L1199.6 430.6 L1202.0 427.0 L1204.2 424.0 L1206.4 421.4 L1208.4 419.1 L1210.4 417.0 L1212.4 415.0 L1214.5 413.0 L1216.6 411.1 L1218.7 409.4 L1220.8 407.9 L1222.8 406.4 L1224.9 404.9 L1227.0 403.3Z" fill="#869c7a" stroke="#2e3a30" stroke-width="0.8" stroke-linejoin="round"/>
<circle cx="1227" cy="403.3" r="1.1" fill="#1c2420"/>
<circle cx="1247" cy="403.3" r="1.1" fill="#1c2420"/>
<circle cx="1267.5" cy="403.3" r="1.1" fill="#1c2420"/>
<circle cx="1325.7" cy="477.1" r="1.1" fill="#1c2420"/>
<circle cx="1323.6" cy="556.7" r="1.1" fill="#1c2420"/>
<circle cx="1171.1" cy="556.7" r="1.1" fill="#1c2420"/>
<circle cx="1168.4" cy="477.4" r="1.1" fill="#1c2420"/>
<circle cx="1247.5" cy="556.7" r="1.1" fill="#1c2420"/>

<rect x="943" y="661.6" width="230.8" height="39.5" fill="#86743f" stroke="#5c5535" stroke-width="0.8"/>
<rect x="943" y="678.8" width="230.8" height="4.8" fill="#d85a3c"/>
<circle cx="943" cy="661.6" r="1.2" fill="#4a4228"/><circle cx="943" cy="701.1" r="1.2" fill="#4a4228"/>
<circle cx="997" cy="661.6" r="1.2" fill="#4a4228"/><circle cx="997" cy="701.1" r="1.2" fill="#4a4228"/>
<circle cx="1058" cy="661.6" r="1.2" fill="#4a4228"/><circle cx="1058" cy="701.1" r="1.2" fill="#4a4228"/>
<circle cx="1118" cy="661.6" r="1.2" fill="#4a4228"/><circle cx="1118" cy="701.1" r="1.2" fill="#4a4228"/>
<circle cx="1173.8" cy="661.6" r="1.2" fill="#4a4228"/><circle cx="1173.8" cy="701.1" r="1.2" fill="#4a4228"/>
<circle cx="942.6" cy="681.2" r="1.8" fill="#b03030"/><circle cx="1174.2" cy="681.2" r="1.8" fill="#b03030"/>
</g>
<g id="icons">
<g>
<rect x="734" y="96.8" width="22.2" height="23.2" fill="#d4d4d4" stroke="#dedede" stroke-width="1"/>
<rect x="734" y="122.9" width="22.2" height="23.2" fill="#d4d4d4" stroke="#dedede" stroke-width="1"/>
<rect x="733.6" y="147.4" width="23" height="24.6" rx="2" fill="#d6d6d6" stroke="#b9b9b9" stroke-width="1.4"/>
<rect x="734" y="175.4" width="22.2" height="23.6" fill="#d0d0d0" stroke="#d8d8d8" stroke-width="1"/>
<!-- tshirt + eye -->
<path d="M741.6 102.6 Q745 105 748.4 102.6 L752.6 105.4 L750.8 108.6 L749.4 107.8 L749.4 116.8 L740.8 116.8 L740.8 107.8 L739.4 108.6 L737.4 105.4Z" fill="#fdfdfd" stroke="#e8e8e8" stroke-width=".6"/>
<path d="M735 115.8 Q739.4 111.4 744 115.8 Q739.4 119.2 735 115.8Z" fill="#e8e8e8" stroke="#222" stroke-width="1"/>
<circle cx="739.5" cy="115.9" r="1.7" fill="#111"/>
<!-- info + eye -->
<circle cx="745.4" cy="134" r="7.4" fill="#4b4f53"/>
<circle cx="745.4" cy="134" r="7.4" fill="none" stroke="#6c6f72" stroke-width=".8"/>
<rect x="743.4" y="128.6" width="4" height="11" rx="1.6" fill="#1c8a9c"/>
<circle cx="745.6" cy="129.9" r="1.4" fill="#5fe0ee"/>
<path d="M745 132.4h1.6v6.2h-1.6z" fill="#5fe0ee"/>
<path d="M735 141.6 Q738.4 138.2 742 141.6 Q738.4 144.4 735 141.6Z" fill="#ddd" stroke="#222" stroke-width=".9"/>
<circle cx="738.5" cy="141.6" r="1.5" fill="#111"/>
<!-- blue sheet -->
<path d="M739 158.6 L741.6 153.6 L740.4 165 L751.8 166.6 L750.6 168.4 L740 167Z" fill="#d8f2ff"/>
<path d="M741.8 153.4 L753.3 152 L751.8 166 L740.2 164.6Z" fill="#1ea4ea"/>
<path d="M741.8 153.4 L753.3 152 L752.8 156 L741.4 157.4Z" fill="#3ab4f0" opacity=".7"/>
<!-- tshirt + lock -->
<path d="M741.6 181.2 Q745 183.6 748.4 181.2 L752.6 184 L750.8 187.2 L749.4 186.4 L749.4 195.4 L740.8 195.4 L740.8 186.4 L739.4 187.2 L737.4 184Z" fill="#f4f4f4" stroke="#e0e0e0" stroke-width=".6" opacity=".9"/>
<path d="M737.9 189.4 V187.6 Q737.9 185.6 739.7 185.6 Q741.5 185.6 741.5 187.6 V189.4" fill="none" stroke="#666" stroke-width="1.1"/>
<rect x="736.6" y="189.2" width="6.2" height="5.6" fill="#6a6a6a"/>
<rect x="739.1" y="190.8" width="1.2" height="2.2" fill="#bbb"/>
</g>

</g>
<!-- HOODIE -->
<g id="hoodie" clip-path="url(#lclip)"><g filter="url(#soft)">
<path d="M392.8 304.4 394.9 305.9 397.0 307.3 399.1 308.8 401.2 310.3 403.3 311.7 405.4 313.2 407.5 314.6 409.6 316.0 411.7 317.5 413.9 318.9 416.0 320.4 418.1 321.8 420.2 323.2 422.3 324.6 424.5 325.9 426.8 327.1 429.1 328.2 431.5 329.1 434.0 329.8 436.4 330.5 438.9 331.0 441.5 331.5 444.0 331.8 446.5 332.0 449.1 332.1 451.7 332.1 454.2 331.9 456.8 331.7 459.3 331.4 461.8 331.2 464.4 331.0 465.6 336.5 466.9 342.0 468.1 347.5 469.3 353.0 470.6 358.5 471.8 364.0 473.0 369.6 474.2 375.1 475.4 380.6 476.7 386.1 477.9 391.6 479.2 397.1 480.6 402.6 482.0 408.0 483.4 413.5 484.7 419.0 485.9 424.5 487.0 430.0 487.9 435.6 488.7 441.2 489.4 446.8 490.0 452.4 490.6 458.0 491.2 463.6 491.9 469.2 492.6 474.8 493.3 480.4 493.9 486.0 494.6 491.6 495.3 497.2 496.0 502.8 496.8 508.4 497.7 514.0 498.7 519.5 499.9 525.1 501.0 530.6 502.0 536.1 502.8 541.7 503.5 547.3 504.1 552.9 504.7 558.6 505.2 564.2 505.4 569.8 505.2 575.5 504.5 581.1 503.0 586.5 501.1 591.8 498.8 596.9 496.5 602.1 494.5 607.4 492.8 612.8 491.2 618.2 489.6 623.6 488.0 629.0 481.4 628.9 474.8 628.8 468.2 628.7 461.6 628.6 455.0 628.5 448.4 628.5 441.8 628.5 435.2 628.6 428.6 628.7 422.0 628.8 415.4 628.8 408.8 628.9 402.2 629.0 395.6 629.1 389.1 629.6 382.5 630.1 375.9 630.6 369.3 630.5 362.8 629.4 357.4 625.9 353.7 620.4 350.8 614.5 347.4 608.8 341.6 606.1 335.0 606.5 328.8 608.5 323.0 611.7 318.3 616.2 314.8 621.8 311.6 627.6 308.3 633.3 308.8 626.7 309.4 620.2 309.9 613.6 310.4 607.1 311.0 600.5 311.5 594.0 312.0 587.4 312.5 580.9 313.1 574.3 313.7 567.8 314.4 561.3 315.1 554.7 315.9 548.2 316.7 541.7 317.6 535.2 318.5 528.7 319.4 522.1 320.5 515.7 321.6 509.2 322.8 502.7 324.0 496.2 325.0 489.8 325.9 483.3 326.6 476.7 327.5 470.2 328.5 463.7 329.5 457.2 330.5 450.7 331.5 444.2 332.4 437.7 333.4 431.2 334.4 424.7 335.4 418.2 336.5 411.7 337.5 405.3 338.7 398.8 340.0 392.3 341.4 385.9 342.7 379.5 343.7 373.0 344.6 366.5 345.5 360.0 346.5 353.5 347.6 347.0 348.8 340.5 350.7 334.2 353.9 328.5 358.6 324.0 364.0 320.2 369.8 317.2 375.6 314.1 381.3 310.8 387.1 307.6Z" fill="rgba(200,222,204,0.04)"/><use href="#bl" fill="none" stroke="#bcd2be" stroke-width="1.6" stroke-opacity="0.0"/><use href="#bl" fill="none" stroke="#7d8a81" stroke-width="0.85" stroke-opacity="0.4"/>
<path d="M493.3 333.3 495.0 334.5 496.6 335.9 498.5 336.7 500.6 336.6 502.6 335.9 504.6 335.0 506.4 334.1 508.3 333.0 510.1 331.9 511.9 330.8 513.6 329.6 515.1 328.1 516.5 326.6 517.9 324.9 519.3 323.4 520.9 322.0 522.8 321.1 524.8 320.4 526.9 320.0 529.0 319.5 531.0 319.0 535.6 323.8 540.2 328.5 544.1 333.9 546.7 340.0 548.6 346.3 550.1 352.8 551.6 359.2 553.0 365.7 554.3 372.2 555.6 378.7 556.8 385.3 558.1 391.8 559.4 398.3 560.9 404.7 562.4 411.2 564.0 417.6 565.7 424.0 567.4 430.4 569.3 436.8 571.3 443.1 573.2 449.5 574.9 455.9 576.7 462.3 578.4 468.7 580.2 475.1 581.9 481.5 583.6 487.9 585.5 494.3 587.5 500.6 589.5 506.9 591.7 513.2 593.8 519.4 596.0 525.7 598.1 532.0 600.3 538.3 602.3 544.6 604.3 550.9 605.9 557.3 607.5 563.8 609.1 570.2 611.0 576.6 613.2 582.8 615.7 589.0 618.3 595.1 620.6 601.3 621.9 607.8 622.4 614.4 615.9 613.6 609.4 612.6 602.9 611.8 596.3 611.8 590.0 613.2 583.9 615.7 578.1 618.7 572.3 621.8 567.0 625.6 561.8 629.7 555.5 631.4 549.0 631.5 542.4 631.2 535.9 630.8 529.3 630.5 522.8 630.3 516.2 630.0 509.7 629.8 503.1 629.5 496.6 629.3 490.0 629.0 491.5 622.8 493.0 616.6 494.7 610.5 496.5 604.4 499.0 598.5 501.6 592.7 503.9 586.8 505.6 580.7 506.3 574.3 506.3 568.0 505.9 561.6 505.3 555.3 504.5 549.0 503.7 542.6 502.9 536.3 501.7 530.1 500.5 523.8 499.2 517.6 498.2 511.3 497.3 505.0 496.6 498.7 495.8 492.4 495.2 486.0 494.6 479.7 494.2 473.3 493.9 467.0 493.9 460.6 494.0 454.2 494.3 447.9 494.5 441.5 494.6 435.1 494.6 428.8 494.6 422.4 494.6 416.1 494.5 409.7 494.5 403.3 494.4 397.0 494.3 390.6 494.3 384.2 494.2 377.9 494.1 371.5 494.0 365.1 493.8 358.8 493.7 352.4 493.6 346.0 493.4 339.7Z" fill="rgba(200,222,204,0.04)"/><use href="#br" fill="none" stroke="#bcd2be" stroke-width="1.6" stroke-opacity="0.0"/><use href="#br" fill="none" stroke="#7d8a81" stroke-width="0.85" stroke-opacity="0.4"/>
<path d="M470.0 152.0 472.5 152.6 474.9 153.3 477.4 153.9 479.9 154.5 482.4 155.1 484.8 155.8 487.3 156.5 489.7 157.4 492.0 158.3 494.3 159.4 496.6 160.6 498.9 161.8 501.1 163.0 503.3 164.3 505.5 165.5 507.8 166.7 504.4 168.8 501.0 170.9 497.6 172.9 494.2 175.0 490.8 177.1 487.5 179.3 484.2 181.7 481.2 184.2 478.3 187.0 475.5 189.8 472.8 192.8 470.2 195.8 467.7 198.9 465.3 202.1 462.9 205.3 460.7 208.6 458.4 211.9 456.2 215.2 454.1 218.6 452.1 222.0 450.2 225.5 448.5 229.2 447.1 232.9 445.8 236.7 444.8 240.5 444.1 244.4 443.5 248.4 443.1 252.3 442.7 256.3 442.5 260.3 442.3 264.3 442.1 268.3 442.0 272.3 442.0 276.2 442.1 280.2 442.3 284.2 442.7 288.2 443.2 292.1 443.7 296.1 444.3 300.0 445.1 303.9 446.2 307.8 447.2 311.7 448.1 315.5 449.1 319.4 450.1 323.3 451.0 327.1 452.0 331.0 448.1 332.5 444.0 332.1 439.8 331.3 435.8 330.3 431.8 329.1 427.9 327.6 424.1 325.7 420.6 323.5 417.1 321.1 413.6 318.8 410.2 316.4 406.7 314.1 403.3 311.7 399.8 309.2 396.4 306.8 393.0 304.4 396.5 301.9 400.2 299.7 403.6 297.1 406.1 293.7 404.8 289.7 402.2 286.3 400.2 282.6 398.8 278.5 397.6 274.4 396.5 270.2 395.8 266.0 395.5 261.7 395.6 257.4 396.0 253.1 396.5 248.9 397.2 244.6 397.9 240.4 398.7 236.2 399.5 232.0 400.3 227.7 401.1 223.5 401.9 219.3 402.6 215.1 403.4 210.8 404.2 206.6 405.0 202.4 405.9 198.2 406.9 194.0 408.1 189.9 409.3 185.8 410.9 181.8 412.6 177.8 414.5 174.0 416.6 170.3 419.1 166.8 421.8 163.5 424.9 160.5 428.4 158.0 432.2 155.9 436.2 154.4 440.3 153.1 444.4 152.1 448.7 151.2 452.9 150.6 457.2 150.6 461.5 151.0 465.7 151.6Z" fill="rgba(168,191,171,0.60)"/><use href="#mh" fill="none" stroke="#a3bca6" stroke-width="2.0" stroke-opacity="0.2"/><use href="#mh" fill="none" stroke="#7d9782" stroke-width="1.0" stroke-opacity="0.65"/>
<path d="M392.8 304.4 395.2 306.1 397.6 307.8 400.0 309.4 402.4 311.1 404.8 312.8 407.3 314.5 409.7 316.1 412.1 317.7 414.6 319.4 417.0 321.1 419.4 322.7 421.9 324.3 424.4 325.8 427.0 327.2 429.7 328.4 432.4 329.4 435.2 330.2 438.1 330.9 441.0 331.4 443.9 331.8 446.8 332.1 449.8 332.1 452.7 332.0 455.6 331.8 458.5 331.5 461.5 331.2 464.4 331.0 465.4 335.3 466.3 339.6 467.3 343.9 468.3 348.2 469.2 352.5 470.2 356.9 471.1 361.2 472.1 365.5 473.0 369.8 474.0 374.1 474.9 378.4 475.9 382.7 476.9 387.0 477.9 391.4 478.9 395.7 479.9 399.9 481.0 404.2 482.1 408.5 483.2 412.8 484.2 417.1 485.2 421.4 486.2 425.7 487.0 430.0 487.7 434.4 488.4 438.8 489.0 443.1 489.5 447.5 490.0 451.9 490.4 456.3 490.9 460.7 491.4 465.1 491.9 469.5 492.5 473.8 493.0 478.2 493.5 482.6 494.0 487.0 494.6 491.4 495.1 495.8 495.6 500.2 496.2 504.5 496.8 508.9 497.5 513.3 498.3 517.6 499.2 521.9 500.1 526.3 501.0 530.6 501.8 534.9 502.5 539.3 503.0 543.7 503.6 548.1 504.1 552.5 504.6 556.8 505.0 561.2 505.2 565.7 505.4 570.1 505.3 574.5 504.9 578.9 504.0 583.2 502.7 587.4 501.1 591.5 499.4 595.6 497.6 599.6 495.8 603.7 494.4 607.9 493.0 612.1 491.8 616.3 490.5 620.5 489.3 624.8 488.0 629.0 483.4 628.9 478.7 628.9 474.1 628.8 469.5 628.7 464.8 628.6 460.2 628.6 455.6 628.5 450.9 628.5 446.3 628.5 441.7 628.6 437.0 628.7 432.4 628.8 427.8 628.8 423.1 628.9 418.5 629.0 413.9 629.1 409.2 629.1 404.6 629.1 399.9 629.0 395.3 628.8 390.7 628.6 386.1 628.2 381.5 627.8 376.8 627.3 372.2 626.9 367.6 626.4 363.0 626.0 364.4 621.5 365.7 616.9 367.1 612.4 368.4 607.9 369.8 603.3 371.2 598.8 372.7 594.3 374.1 589.8 375.5 585.3 376.8 580.8 378.1 576.2 379.4 571.6 380.6 567.1 381.8 562.5 383.0 557.9 384.1 553.3 385.2 548.7 386.3 544.1 387.3 539.5 388.2 534.8 389.0 530.2 389.7 525.5 390.3 520.8 390.8 516.1 391.3 511.4 391.7 506.7 392.1 501.9 392.5 497.2 392.9 492.5 393.3 487.8 393.7 483.1 394.2 478.4 394.6 473.7 395.1 469.0 395.6 464.3 396.1 459.5 396.6 454.8 397.1 450.1 397.5 445.4 397.9 440.7 398.3 436.0 398.7 431.3 399.1 426.6 399.5 421.8 399.9 417.1 400.2 412.4 400.5 407.7 400.8 403.0 401.1 398.2 401.4 393.5 401.6 388.8 401.9 384.1 402.0 379.3 402.1 374.6 402.1 369.9 402.0 365.1 401.7 360.4 401.3 355.7 400.9 351.0 400.3 346.3 399.7 341.6 399.0 336.9 398.3 332.2 397.6 327.6 396.8 322.9 395.8 318.3 394.8 313.6 393.8 309.0Z" fill="rgba(248,251,249,0.50)"/><use href="#ml" fill="none" stroke="#b1c6b4" stroke-width="1.8" stroke-opacity="0.0"/><use href="#ml" fill="none" stroke="#4b5750" stroke-width="0.9" stroke-opacity="0.85"/>
<path d="M493.3 333.3 495.4 334.9 497.5 336.4 500.0 336.7 502.5 335.9 504.9 334.9 507.2 333.6 509.4 332.3 511.7 330.9 513.8 329.4 515.7 327.6 517.3 325.6 519.0 323.6 521.0 322.0 523.4 320.9 525.9 320.2 528.5 319.6 531.0 319.0 529.7 323.5 528.4 328.0 527.3 332.5 526.4 337.1 525.6 341.7 524.8 346.3 524.0 351.0 523.3 355.6 522.6 360.2 522.0 364.9 521.5 369.5 520.9 374.2 520.4 378.8 520.0 383.5 519.6 388.1 519.3 392.8 519.1 397.5 519.0 402.2 518.9 406.8 518.9 411.5 519.0 416.2 519.1 420.9 519.3 425.6 519.5 430.2 519.7 434.9 520.0 439.6 520.3 444.3 520.6 448.9 521.0 453.6 521.4 458.3 521.9 462.9 522.4 467.6 522.9 472.2 523.6 476.9 524.2 481.5 524.9 486.1 525.6 490.7 526.3 495.4 527.1 500.0 527.9 504.6 528.7 509.2 529.6 513.8 530.5 518.4 531.4 523.0 532.4 527.6 533.5 532.1 534.7 536.6 535.9 541.2 537.2 545.7 538.6 550.1 540.0 554.6 541.4 559.1 542.9 563.5 544.3 567.9 545.8 572.4 547.3 576.8 548.8 581.3 550.3 585.7 551.8 590.1 553.4 594.5 555.1 598.9 556.8 603.2 558.7 607.5 560.7 611.7 562.9 615.9 565.3 619.9 567.7 623.9 570.0 628.0 565.5 629.5 560.9 630.7 556.2 631.1 551.5 631.1 546.8 631.1 542.0 630.9 537.3 630.7 532.6 630.6 527.8 630.4 523.1 630.3 518.4 630.1 513.6 629.9 508.9 629.7 504.2 629.6 499.5 629.4 494.7 629.2 490.0 629.0 491.1 624.7 492.1 620.5 493.2 616.2 494.3 611.9 495.5 607.7 496.9 603.5 498.6 599.5 500.4 595.5 502.2 591.4 503.8 587.3 505.0 583.1 505.9 578.8 506.3 574.4 506.3 570.0 506.2 565.6 505.9 561.2 505.4 556.9 504.9 552.5 504.4 548.1 503.8 543.8 503.3 539.4 502.6 535.0 501.9 530.7 501.0 526.4 500.1 522.1 499.3 517.8 498.5 513.4 497.9 509.1 497.3 504.7 496.8 500.4 496.2 496.0 495.8 491.6 495.3 487.2 494.9 482.8 494.5 478.5 494.2 474.1 494.0 469.7 493.9 465.3 493.9 460.9 493.9 456.5 494.1 452.1 494.3 447.7 494.4 443.3 494.5 438.9 494.6 434.5 494.6 430.1 494.6 425.7 494.6 421.3 494.6 416.9 494.5 412.5 494.5 408.1 494.5 403.7 494.4 399.3 494.4 394.9 494.3 390.5 494.3 386.1 494.2 381.7 494.2 377.3 494.1 372.9 494.0 368.5 493.9 364.1 493.9 359.7 493.8 355.3 493.7 350.9 493.6 346.5 493.5 342.1 493.4 337.7Z" fill="rgba(248,251,249,0.50)"/><use href="#mr" fill="none" stroke="#b1c6b4" stroke-width="1.8" stroke-opacity="0.0"/><use href="#mr" fill="none" stroke="#4b5750" stroke-width="0.9" stroke-opacity="0.85"/>
<path d="M392.8 304.4 392.8 304.4 392.8 304.4 392.8 304.4 392.8 304.4 392.8 304.4 392.8 304.4 392.8 304.4 392.8 304.4 392.8 304.4 392.8 304.4 392.8 304.4 392.8 304.4 393.8 309.3 394.9 314.2 396.0 319.1 397.0 324.0 397.8 329.0 398.6 334.0 399.3 338.9 400.0 343.9 400.6 348.9 401.2 353.9 401.6 358.9 401.9 363.9 402.1 368.9 402.1 374.0 402.0 379.0 401.9 384.0 401.6 389.0 401.3 394.0 401.1 399.0 400.8 404.1 400.5 409.1 400.1 414.1 399.7 419.1 399.3 424.1 398.9 429.1 398.5 434.1 398.1 439.1 397.6 444.1 397.2 449.1 396.7 454.1 396.2 459.1 395.6 464.1 395.1 469.1 394.6 474.1 394.1 479.1 393.6 484.1 393.2 489.1 392.8 494.1 392.4 499.1 391.9 504.1 391.5 509.1 391.0 514.1 390.5 519.1 389.9 524.1 389.1 529.1 388.3 534.0 387.4 539.0 386.3 543.9 385.2 548.8 384.0 553.7 382.8 558.5 381.5 563.4 380.3 568.3 379.0 573.1 377.6 578.0 376.3 582.8 374.8 587.6 373.3 592.4 371.8 597.2 370.3 602.0 368.8 606.8 367.3 611.6 365.9 616.4 364.4 621.2 363.0 626.0 358.1 624.8 353.1 623.6 348.1 622.5 343.1 621.7 338.1 620.8 333.1 619.9 328.0 619.4 323.0 619.8 318.4 621.9 314.8 625.5 311.6 629.5 308.3 633.3 308.7 627.9 309.2 622.4 309.6 617.0 310.1 611.5 310.5 606.1 310.9 600.6 311.4 595.2 311.8 589.8 312.2 584.3 312.7 578.9 313.2 573.4 313.7 568.0 314.3 562.6 314.9 557.1 315.5 551.7 316.2 546.3 316.8 540.9 317.5 535.5 318.3 530.1 319.1 524.6 319.9 519.3 320.8 513.9 321.7 508.5 322.7 503.1 323.7 497.7 324.6 492.4 325.5 487.0 326.1 481.5 326.7 476.1 327.4 470.7 328.2 465.3 329.1 459.9 329.9 454.5 330.7 449.1 331.5 443.7 332.3 438.3 333.1 432.9 333.9 427.5 334.8 422.1 335.6 416.7 336.5 411.3 337.4 405.9 338.4 400.6 339.4 395.2 340.6 389.9 341.7 384.5 342.8 379.2 343.6 373.8 344.3 368.4 345.0 363.0 345.9 357.6 346.7 352.2 347.6 346.8 348.6 341.4 350.0 336.1 352.2 331.1 355.4 326.8 359.5 323.2 364.1 320.2 368.9 317.6 373.8 315.1 378.5 312.4 383.3 309.7 388.0 307.1Z" fill="rgba(244,251,246,0.50)"/><use href="#msl" fill="none" stroke="#a9c2ad" stroke-width="1.9" stroke-opacity="0.0"/><use href="#msl" fill="none" stroke="#566860" stroke-width="0.88" stroke-opacity="0.88"/>
<path d="M531.0 319.0 531.0 319.0 531.0 319.0 531.0 319.0 531.0 319.0 531.0 319.0 531.0 319.0 531.0 319.0 531.0 319.0 531.0 319.0 531.0 319.0 531.0 319.0 531.0 319.0 534.7 322.9 538.5 326.7 542.0 330.7 544.9 335.3 546.8 340.3 548.3 345.5 549.6 350.7 550.8 355.9 552.0 361.1 553.2 366.4 554.2 371.7 555.2 377.0 556.3 382.2 557.3 387.5 558.3 392.8 559.3 398.1 560.5 403.3 561.8 408.5 563.1 413.7 564.4 419.0 565.7 424.2 567.1 429.3 568.6 434.5 570.2 439.6 571.8 444.8 573.3 449.9 574.7 455.1 576.2 460.3 577.6 465.5 579.0 470.7 580.4 475.9 581.8 481.0 583.2 486.2 584.6 491.4 586.2 496.6 587.8 501.7 589.5 506.8 591.2 511.9 593.0 517.0 594.7 522.0 596.4 527.1 598.2 532.2 600.0 537.3 601.6 542.4 603.3 547.5 604.7 552.7 606.1 557.9 607.3 563.1 608.6 568.3 610.0 573.5 611.7 578.6 613.6 583.7 615.6 588.6 617.7 593.6 619.7 598.6 621.2 603.7 622.0 609.0 622.4 614.4 617.8 613.8 613.2 613.1 608.6 612.9 604.0 613.5 599.5 614.6 595.1 616.0 590.8 617.7 586.5 619.5 582.3 621.6 578.2 623.7 574.1 625.9 570.0 628.0 567.3 623.2 564.5 618.5 561.8 613.7 559.3 608.8 557.1 603.8 555.0 598.7 553.1 593.6 551.2 588.4 549.4 583.3 547.7 578.1 545.9 572.8 544.2 567.6 542.5 562.4 540.8 557.2 539.1 552.0 537.5 546.7 536.0 541.5 534.5 536.2 533.2 530.9 532.0 525.5 530.8 520.1 529.8 514.8 528.8 509.4 527.8 504.0 526.9 498.5 526.0 493.1 525.1 487.7 524.3 482.3 523.6 476.9 522.8 471.4 522.2 466.0 521.6 460.5 521.1 455.0 520.7 449.6 520.3 444.1 519.9 438.6 519.6 433.1 519.3 427.7 519.1 422.2 519.0 416.7 518.9 411.2 518.9 405.7 519.0 400.2 519.2 394.7 519.5 389.3 520.0 383.8 520.5 378.3 521.1 372.9 521.7 367.4 522.4 362.0 523.1 356.5 524.0 351.1 524.9 345.7 525.8 340.3 526.8 334.9 528.0 329.5 529.4 324.3Z" fill="rgba(244,251,246,0.50)"/><use href="#msr" fill="none" stroke="#a9c2ad" stroke-width="1.9" stroke-opacity="0.0"/><use href="#msr" fill="none" stroke="#566860" stroke-width="0.88" stroke-opacity="0.88"/>
<path d="M322.5 611.7 326.6 610.6 330.7 609.4 334.8 608.3 338.9 607.4 343.1 606.7 347.3 606.3 351.5 606.1 355.8 606.0 360.0 605.8 360.1 610.1 360.2 614.4 360.3 618.8 360.5 623.1 360.6 627.4 360.6 631.7 360.7 636.0 360.7 640.3 360.7 644.7 360.8 649.0 360.8 653.3 357.4 654.1 354.1 655.0 350.7 655.8 347.3 656.4 343.8 656.6 340.4 656.5 336.9 656.3 333.5 656.0 330.0 655.8 329.3 651.8 328.5 647.8 327.8 643.8 327.0 639.8 326.3 635.8 325.6 631.8 325.0 627.8 324.4 623.8 323.7 619.7 323.1 615.7Z" fill="rgba(225,235,228,0.35)"/><use href="#mcl" fill="none" stroke="#a3bca7" stroke-width="2.0" stroke-opacity="0.12"/><use href="#mcl" fill="none" stroke="#48584e" stroke-width="1.1" stroke-opacity="0.95"/>
<path d="M573.3 595.5 577.6 594.7 581.9 593.8 586.2 592.9 590.5 592.2 594.9 591.5 599.3 591.0 603.6 590.7 608.0 590.5 612.4 590.3 616.8 590.0 616.8 594.1 616.7 598.3 616.7 602.4 616.7 606.6 616.6 610.7 616.5 614.8 616.3 619.0 616.1 623.1 616.0 627.3 615.8 631.4 612.2 632.8 608.7 634.2 605.1 635.6 601.6 636.9 597.9 638.0 594.2 638.8 590.4 639.4 586.6 639.9 582.8 640.4 579.0 640.9 578.4 636.4 577.8 631.8 577.2 627.3 576.6 622.8 576.0 618.2 575.5 613.7 574.9 609.1 574.4 604.6 573.8 600.0Z" fill="rgba(225,235,228,0.35)"/><use href="#mcr" fill="none" stroke="#a3bca7" stroke-width="2.0" stroke-opacity="0.12"/><use href="#mcr" fill="none" stroke="#48584e" stroke-width="1.1" stroke-opacity="0.95"/>
<path d="M361.7 630.0 366.0 629.9 370.3 629.8 374.6 629.8 378.8 629.7 383.1 629.6 387.4 629.5 391.7 629.4 396.0 629.4 400.3 629.3 404.6 629.2 408.8 629.2 413.1 629.1 417.4 629.0 421.7 629.0 426.0 628.9 430.3 628.9 434.6 628.9 438.8 628.8 443.1 628.8 447.4 628.8 451.7 628.7 456.0 628.7 460.3 628.7 464.6 628.6 468.9 628.6 473.1 628.6 477.4 628.6 481.7 628.5 486.0 628.5 486.0 632.9 486.0 637.2 486.0 641.6 486.0 645.9 486.0 650.3 486.1 654.6 486.2 659.0 486.3 663.3 486.4 667.7 486.5 672.0 482.1 672.0 477.7 671.9 473.2 671.9 468.8 671.9 464.4 671.8 460.0 671.8 455.6 671.8 451.1 671.7 446.7 671.7 442.3 671.7 437.9 671.7 433.5 671.6 429.0 671.6 424.6 671.5 420.2 671.5 415.8 671.5 411.3 671.4 406.9 671.4 402.5 671.3 398.1 671.3 393.7 671.2 389.2 671.2 384.8 671.1 380.4 671.1 376.0 671.0 371.6 671.0 367.1 670.9 362.7 670.9 358.3 670.8 358.6 666.7 359.0 662.6 359.3 658.6 359.6 654.5 360.0 650.4 360.3 646.3 360.7 642.2 361.0 638.2 361.4 634.1Z" fill="rgba(225,235,228,0.35)"/><use href="#mhl" fill="none" stroke="#a3bca7" stroke-width="2.0" stroke-opacity="0.12"/><use href="#mhl" fill="none" stroke="#48584e" stroke-width="1.1" stroke-opacity="0.95"/>
<path d="M490.0 629.0 494.3 629.2 498.5 629.4 502.8 629.6 507.0 629.8 511.3 630.0 515.6 630.1 519.8 630.3 524.1 630.5 528.4 630.6 532.6 630.7 536.9 630.9 541.1 631.0 545.4 631.1 549.7 631.2 553.9 631.3 558.2 631.4 558.2 634.3 558.2 637.1 558.2 640.0 558.2 642.8 558.2 645.7 558.2 648.6 558.2 651.4 558.2 654.3 558.2 657.1 558.2 660.0 553.9 660.9 549.6 661.9 545.3 662.9 541.1 663.8 536.8 664.7 532.5 665.6 528.2 666.4 523.8 667.2 519.5 667.8 515.2 668.4 510.8 669.0 506.4 669.5 502.1 670.0 497.7 670.5 493.4 671.0 489.0 671.5 489.1 667.2 489.2 663.0 489.3 658.7 489.4 654.5 489.5 650.2 489.6 646.0 489.7 641.7 489.8 637.5 489.9 633.2Z" fill="rgba(225,235,228,0.35)"/><use href="#mhr" fill="none" stroke="#a3bca7" stroke-width="2.0" stroke-opacity="0.12"/><use href="#mhr" fill="none" stroke="#48584e" stroke-width="1.1" stroke-opacity="0.95"/>
<path d="M450 309 L512 313 L516.5 318 L512 330 L498 335 L496 434 L492 442 L468 333 L456 331 L449 320Z" fill="#e4e4e9" fill-opacity=".9"/>
<path d="M361.7 630H486M358.3 670.8 L486.5 672M490 629 L558.2 631.4 V660 L489 671.5" fill="none" stroke="#6f8474" stroke-width="2.2" stroke-opacity=".9"/>
<path d="M361.7 631H486M490 630 L558.2 632.4" fill="none" stroke="#2f3d34" stroke-width="1.2" stroke-opacity=".7" stroke-dasharray="7 3 2 3"/>
<path d="M360.5 628.0 357.8 671.0" fill="none" stroke="#7f9483" stroke-width="4.5" stroke-opacity="0.9"/>
<path d="M322.5 611.7 Q341 606 360 605.8 M330 655.8 Q346 657 360.8 653.3 M573.3 595.5 Q595 591 616.8 590 M579 640.9 Q598 639 615.8 631.4" fill="none" stroke="#5d7664" stroke-width="2" stroke-opacity=".9"/>
<path d="M324 614 Q341 608.5 359 608 M575 598 Q595 594 616 592.5" fill="none" stroke="#27332b" stroke-width="1.4" stroke-opacity=".7" stroke-dasharray="5 3"/>
<path d="M509 440 L531 440 L540 500 L552 548 L576 622 L560 632 L500 630 L508 580 L505 541 L499 500Z" fill="#8fae95" fill-opacity=".30"/>
<path d="M398 440 L388 540 L372 600 L364 626 L352 610 L366 560 L380 500Z" fill="#8fae95" fill-opacity=".22"/>
<path d="M426.7 546.7 L494 541.7 M511 542.7 L550.7 548.3" fill="none" stroke="#86a08b" stroke-width="2.4"/>
<path d="M426.7 546.7 L494 541.7 M511 542.7 L550.7 548.3" fill="none" stroke="#3f5146" stroke-width=".8"/>
<path d="M398.0 330.0 398.7 335.8 399.5 341.7 400.3 347.5 401.0 353.3 401.6 359.2 402.0 365.0 402.1 370.8 402.1 376.5 401.9 382.2 401.7 388.0 401.3 393.9 401.0 400.0 400.6 406.4 400.2 413.0 399.7 419.7 399.1 426.5 398.6 433.3 398.0 440.0 397.4 446.6 396.8 453.0 396.1 459.4 395.4 465.9 394.7 472.8 394.0 480.0 393.3 487.8 392.6 496.2 391.9 504.8 391.1 513.5 390.1 522.0 389.0 530.0 387.6 537.7 386.0 545.2 384.3 552.6 382.5 559.7 380.7 566.5 379.0 573.0 377.3 579.2 375.5 585.2 373.8 590.9 372.0 596.3 370.4 601.4 369.0 606.0 367.8 610.1 366.7 613.6 365.8 616.8 364.9 619.8 364.0 622.8 363.0 626.0" fill="none" stroke="#a3bca7" stroke-width="3.2" stroke-opacity="0.5"/>
<path d="M527.0 334.0 526.1 339.1 525.3 344.2 524.4 349.2 523.5 354.4 522.7 359.6 522.0 365.0 521.3 370.5 520.7 376.2 520.1 381.9 519.6 387.8 519.2 393.8 519.0 400.0 518.9 406.4 518.9 413.0 519.1 419.7 519.3 426.5 519.6 433.3 520.0 440.0 520.4 446.6 520.9 453.0 521.5 459.4 522.2 465.9 523.0 472.8 524.0 480.0 525.2 487.8 526.5 496.2 527.9 504.8 529.5 513.5 531.2 522.0 533.0 530.0 534.9 537.7 537.1 545.2 539.3 552.6 541.6 559.7 543.8 566.5 546.0 573.0 548.1 579.2 550.1 585.1 552.1 590.8 554.0 596.2 556.0 601.3 558.0 606.0 560.0 610.3 562.0 614.1 564.0 617.7 566.0 621.1 568.0 624.5 570.0 628.0" fill="none" stroke="#a3bca7" stroke-width="3.2" stroke-opacity="0.5"/>
<path d="M546.7 345.6 547.6 354.7 548.4 363.9 549.3 373.1 550.2 382.2 551.1 391.2 552.0 400.0 553.0 408.7 553.9 417.4 555.0 425.9 556.0 434.2 557.0 442.3 558.0 450.0 558.9 457.1 559.7 463.7 560.5 470.0 561.4 476.3 562.5 482.9 564.0 490.0 565.8 497.8 567.9 505.9 570.2 514.4 572.7 523.0 575.3 531.6 578.0 540.0 580.8 548.3 583.7 556.7 586.8 565.0 589.9 573.3 593.0 581.7 596.0 590.0" fill="none" stroke="#a6c0aa" stroke-width="4" stroke-opacity="0.4"/>
<path d="M535.0 368.0 535.1 376.7 535.2 385.4 535.3 394.1 535.4 402.8 535.7 411.4 536.0 420.0 536.4 428.4 537.0 436.8 537.6 445.1 538.3 453.4 539.1 461.7 540.0 470.0 541.1 478.3 542.2 486.7 543.5 495.0 544.9 503.3 546.4 511.7 548.0 520.0 549.8 528.3 551.7 536.7 553.8 545.0 555.9 553.3 558.0 561.7 560.0 570.0" fill="none" stroke="#a6c0aa" stroke-width="3.5" stroke-opacity="0.35"/>
<path d="M352.0 340.0 351.6 350.0 351.2 360.0 350.8 370.0 350.4 380.0 349.8 390.0 349.0 400.0 348.0 410.0 346.7 420.0 345.3 430.0 343.9 440.0 342.4 450.0 341.0 460.0 339.7 470.0 338.3 480.0 336.9 490.0 335.6 500.0 334.3 510.0 333.0 520.0 331.7 530.3 330.5 541.0 329.2 551.8 328.1 562.1 327.0 571.6 326.0 580.0 325.2 587.0 324.4 592.7 323.8 597.8 323.2 602.4 322.6 607.0 322.0 612.0" fill="none" stroke="#a6c0aa" stroke-width="4" stroke-opacity="0.4"/>
<path d="M372.0 330.0 371.4 341.7 370.8 353.3 370.2 365.0 369.6 376.7 368.9 388.3 368.0 400.0 366.9 411.7 365.6 423.3 364.2 435.0 362.8 446.7 361.4 458.3 360.0 470.0 358.7 481.8 357.3 493.7 356.0 505.6 354.7 517.4 353.3 528.9 352.0 540.0 350.7 550.6 349.3 560.7 348.0 570.6 346.7 580.4 345.3 590.1 344.0 600.0" fill="none" stroke="#a6c0aa" stroke-width="3.5" stroke-opacity="0.3"/>
<path d="M392.8 304.4 389.8 306.1 386.8 307.8 383.8 309.5 380.8 311.1 377.8 312.8 375.0 314.4 372.2 315.9 369.4 317.4 366.6 318.8 364.0 320.2 361.6 321.7 359.4 323.3 357.5 324.9 355.8 326.4 354.3 328.0 353.0 329.8 351.7 331.9 350.6 334.4 349.6 337.5 348.7 341.0 347.9 344.9 347.3 348.9 346.6 352.9 346.0 356.7 345.4 360.4 344.9 364.1 344.4 367.8 343.9 371.5 343.4 375.2 342.8 378.9 342.1 382.5 341.4 386.1 340.6 389.7 339.8 393.3 339.1 397.0 338.3 401.0 337.5 405.2 336.8 409.8 336.0 414.4 335.3 419.0 334.6 423.5 333.9 427.8 333.3 431.8 332.7 435.5 332.2 439.2 331.7 442.8 331.1 446.4 330.6 450.0 330.0 453.8 329.4 457.6 328.8 461.4 328.2 465.1 327.7 468.8 327.2 472.2 326.8 475.2 326.5 477.8 326.3 480.3 326.0 483.0 325.6 486.1 325.0 490.0 324.2 494.8 323.2 500.2 322.2 506.1 321.1 512.3 320.0 518.7 319.0 525.0 318.1 531.4 317.2 538.1 316.3 545.0 315.5 551.9 314.7 558.6 314.0 565.0 313.4 571.1 312.8 577.1 312.4 582.9 311.9 588.6 311.5 594.3 311.0 600.0 310.5 605.6 310.1 611.2 309.6 616.8 309.2 622.3 308.7 627.8 308.3 633.3" fill="none" stroke="#a5b9a8" stroke-width="1.9" stroke-opacity="0.85"/>
<path d="M531.0 319.0 533.3 321.5 535.7 323.9 538.1 326.3 540.4 328.8 542.6 331.4 544.4 334.4 545.9 337.7 547.2 341.3 548.2 345.1 549.2 349.0 550.1 352.9 551.0 356.7 551.9 360.4 552.7 364.1 553.4 367.8 554.2 371.5 554.9 375.2 555.6 378.9 556.3 382.5 557.0 386.1 557.7 389.7 558.4 393.3 559.1 397.0 560.0 401.0 561.0 405.2 562.1 409.8 563.2 414.4 564.4 419.0 565.6 423.5 566.7 427.8 567.8 431.7 568.9 435.5 570.0 439.1 571.1 442.6 572.2 446.2 573.3 450.0 574.4 454.0 575.6 458.1 576.7 462.2 577.8 466.4 578.9 470.5 580.0 474.4 581.0 478.1 582.0 481.7 582.9 485.2 583.9 488.7 584.9 492.3 586.0 496.0 587.2 499.8 588.5 503.7 589.8 507.6 591.1 511.6 592.6 515.7 594.0 520.0 595.5 524.5 597.1 529.1 598.8 533.9 600.4 538.7 602.0 543.5 603.5 548.3 604.8 553.1 606.1 557.9 607.2 562.7 608.4 567.5 609.7 572.2 611.0 576.7 612.6 581.1 614.3 585.5 616.1 589.8 617.8 593.9 619.3 597.6 620.5 601.0 621.3 603.9 621.7 606.3 621.9 608.4 622.0 610.3 622.2 612.3 622.4 614.4" fill="none" stroke="#a5b9a8" stroke-width="1.9" stroke-opacity="0.85"/>
<path d="M308.3 633.3 309.1 632.4 310.0 631.6 310.8 630.9 311.6 630.1 312.4 629.2 313.3 628.3 314.1 627.2 315.0 626.0 315.9 624.6 316.8 623.0 317.8 621.2 318.7 619.4 319.7 617.5 320.6 615.7 321.6 613.8 322.5 612.0" fill="none" stroke="#a5b9a8" stroke-width="1.8" stroke-opacity="0.8"/>
<path d="M492.3 441.0 492.6 444.5 492.8 448.0 493.0 451.4 493.3 454.8 493.5 458.3 493.8 462.0 494.1 465.8 494.5 470.0 494.9 474.5 495.4 479.4 495.9 484.6 496.5 489.9 497.0 495.2 497.6 500.4 498.2 505.4 498.8 510.0 499.4 514.3 500.1 518.2 500.7 522.0 501.4 525.7 502.1 529.3 502.7 533.0 503.3 536.9 503.8 541.0 504.3 545.4 504.9 550.0 505.4 554.8 505.9 559.7 506.3 564.5 506.5 569.2 506.5 573.8 506.2 578.0 505.6 581.9 504.7 585.6 503.6 589.2 502.3 592.6 501.0 595.9 499.6 599.2 498.2 602.6 497.0 606.0" fill="none" stroke="#8ba18f" stroke-width="20" stroke-opacity="0.92" stroke-linecap="round"/>
<path d="M497.0 606.0 496.1 608.7 495.1 611.3 494.1 613.7 493.2 616.2 492.2 618.9 491.4 621.8 490.6 625.2 490.0 629.0 489.6 633.4 489.3 638.3 489.1 643.7 488.9 649.2 488.9 655.0 488.8 660.8 488.7 666.5 488.6 672.0" fill="none" stroke="#8ba18f" stroke-width="12" stroke-opacity="0.95"/>
<path d="M464.4 331.0 465.1 334.0 465.7 337.0 466.4 339.9 467.0 342.8 467.7 345.8 468.4 349.0 469.2 352.3 470.0 356.0 470.9 360.0 471.8 364.2 472.8 368.6 473.8 373.2 474.8 377.9 475.9 382.6 476.9 387.3 478.0 392.0 479.1 396.6 480.3 401.3 481.5 406.0 482.7 410.8 483.9 415.5 485.0 420.3 486.1 425.1 487.0 430.0 487.8 434.9 488.5 439.9 489.2 444.9 489.8 449.9 490.3 454.9 490.8 460.0 491.4 465.0 492.0 470.0" fill="none" stroke="#8ba18f" stroke-width="6.5" stroke-linecap="round"/>
<path d="M496.5 333.5 496.6 339.3 496.8 344.9 496.9 350.6 497.0 356.3 497.2 362.0 497.3 367.8 497.4 373.8 497.5 380.0 497.6 386.7 497.7 393.9 497.8 401.4 497.8 408.9 497.9 416.2 497.9 423.0 498.0 429.0 498.0 434.0 498.0 437.8 498.0 440.7 497.9 442.8 497.9 444.4 497.8 445.7 497.7 446.9 497.7 448.3 497.6 450.0" fill="none" stroke="#8ba18f" stroke-width="6.5" stroke-linecap="round"/>
<path d="M461.2 331.0 461.9 334.0 462.5 337.0 463.2 339.9 463.8 342.8 464.5 345.8 465.2 349.0 466.0 352.3 466.8 356.0 467.7 360.0 468.6 364.2 469.6 368.6 470.6 373.2 471.6 377.9 472.7 382.6 473.7 387.3 474.8 392.0 475.9 396.6 477.2 401.3 478.5 406.0 479.8 410.8 481.0 415.5 482.1 420.3 483.1 425.1 483.8 430.0 484.3 434.9 484.5 439.9 484.5 444.9 484.4 449.9 484.3 454.9 484.3 460.0 484.3 465.0 484.5 470.0 484.9 475.1 485.3 480.2 485.8 485.4 486.4 490.6 487.0 495.7 487.6 500.6 488.2 505.4 488.8 510.0 489.4 514.3 490.1 518.2 490.7 522.0 491.4 525.7 492.1 529.3 492.7 533.0 493.3 536.9 493.8 541.0 494.3 545.4 494.9 550.0 495.4 554.8 495.9 559.7 496.3 564.5 496.5 569.2 496.5 573.8 496.2 578.0 495.6 581.9 494.7 585.6 493.6 589.2 492.3 592.6 491.0 595.9 489.6 599.2 488.2 602.6 487.0 606.0" fill="none" stroke="#2f4036" stroke-width="1" stroke-opacity="0.7"/>
<path d="M504.5 470.0 505.0 475.1 505.6 480.2 506.1 485.4 506.6 490.6 507.1 495.7 507.7 500.6 508.2 505.4 508.8 510.0 509.4 514.3 510.1 518.2 510.7 522.0 511.4 525.7 512.1 529.3 512.7 533.0 513.3 536.9 513.8 541.0 514.3 545.4 514.9 550.0 515.4 554.8 515.9 559.7 516.3 564.5 516.5 569.2 516.5 573.8 516.2 578.0 515.6 581.9 514.7 585.6 513.6 589.2 512.3 592.6 511.0 595.9 509.6 599.2 508.2 602.6 507.0 606.0" fill="none" stroke="#55705c" stroke-width="0.9" stroke-opacity="0.5"/>
<path d="M492.3 441.0 492.6 444.5 492.8 448.0 493.0 451.4 493.3 454.8 493.5 458.3 493.8 462.0 494.1 465.8 494.5 470.0 494.9 474.5 495.4 479.4 495.9 484.6 496.5 489.9 497.0 495.2 497.6 500.4 498.2 505.4 498.8 510.0 499.4 514.3 500.1 518.2 500.7 522.0 501.4 525.7 502.1 529.3 502.7 533.0 503.3 536.9 503.8 541.0 504.3 545.4 504.9 550.0 505.4 554.8 505.9 559.7 506.3 564.5 506.5 569.2 506.5 573.8 506.2 578.0 505.6 581.9 504.7 585.6 503.6 589.2 502.3 592.6 501.0 595.9 499.6 599.2 498.2 602.6 497.0 606.0" fill="none" stroke="#c4c9c5" stroke-width="9"/>
<path d="M492.3 441.0 492.6 444.5 492.8 448.0 493.0 451.4 493.3 454.8 493.5 458.3 493.8 462.0 494.1 465.8 494.5 470.0 494.9 474.5 495.4 479.4 495.9 484.6 496.5 489.9 497.0 495.2 497.6 500.4 498.2 505.4 498.8 510.0 499.4 514.3 500.1 518.2 500.7 522.0 501.4 525.7 502.1 529.3 502.7 533.0 503.3 536.9 503.8 541.0 504.3 545.4 504.9 550.0 505.4 554.8 505.9 559.7 506.3 564.5 506.5 569.2 506.5 573.8 506.2 578.0 505.6 581.9 504.7 585.6 503.6 589.2 502.3 592.6 501.0 595.9 499.6 599.2 498.2 602.6 497.0 606.0" fill="none" stroke="#f2f3f2" stroke-width="8" stroke-dasharray="1.8 2.2"/>
<path d="M492.3 441.0 492.6 444.5 492.8 448.0 493.0 451.4 493.3 454.8 493.5 458.3 493.8 462.0 494.1 465.8 494.5 470.0 494.9 474.5 495.4 479.4 495.9 484.6 496.5 489.9 497.0 495.2 497.6 500.4 498.2 505.4 498.8 510.0 499.4 514.3 500.1 518.2 500.7 522.0 501.4 525.7 502.1 529.3 502.7 533.0 503.3 536.9 503.8 541.0 504.3 545.4 504.9 550.0 505.4 554.8 505.9 559.7 506.3 564.5 506.5 569.2 506.5 573.8 506.2 578.0 505.6 581.9 504.7 585.6 503.6 589.2 502.3 592.6 501.0 595.9 499.6 599.2 498.2 602.6 497.0 606.0" fill="none" stroke="#7d8580" stroke-width="8" stroke-opacity="0.55" stroke-dasharray="0.9 3.1"/>
<path d="M497.0 606.0 496.1 608.7 495.1 611.3 494.1 613.7 493.2 616.2 492.2 618.9 491.4 621.8 490.6 625.2 490.0 629.0 489.6 633.4 489.3 638.3 489.1 643.7 488.9 649.2 488.9 655.0 488.8 660.8 488.7 666.5 488.6 672.0" fill="none" stroke="#c4c9c5" stroke-width="5"/>
<path d="M497.0 606.0 496.1 608.7 495.1 611.3 494.1 613.7 493.2 616.2 492.2 618.9 491.4 621.8 490.6 625.2 490.0 629.0 489.6 633.4 489.3 638.3 489.1 643.7 488.9 649.2 488.9 655.0 488.8 660.8 488.7 666.5 488.6 672.0" fill="none" stroke="#f2f3f2" stroke-width="4.4" stroke-dasharray="1.8 2.2"/>
<path d="M492.3 441.0 492.6 444.5 492.8 448.0 493.0 451.4 493.3 454.8 493.5 458.3 493.8 462.0 494.1 465.8 494.5 470.0 494.9 474.5 495.4 479.4 495.9 484.6 496.5 489.9 497.0 495.2 497.6 500.4 498.2 505.4 498.8 510.0 499.4 514.3 500.1 518.2 500.7 522.0 501.4 525.7 502.1 529.3 502.7 533.0 503.3 536.9 503.8 541.0 504.3 545.4 504.9 550.0 505.4 554.8 505.9 559.7 506.3 564.5 506.5 569.2 506.5 573.8 506.2 578.0 505.6 582.0 504.7 585.8 503.5 589.4 502.2 592.9 500.8 596.3 499.4 599.6 498.1 602.8 497.0 606.0 496.0 609.0 495.0 611.6 494.0 614.1 493.0 616.6 492.1 619.1 491.3 622.0 490.6 625.2 490.0 629.0 489.6 633.4 489.3 638.3 489.1 643.7 488.9 649.2 488.9 655.0 488.8 660.8 488.7 666.5 488.6 672.0" fill="none" stroke="#2c322e" stroke-width="2.0" stroke-opacity="0.85" stroke-dasharray="3 1.6"/>
<path d="M467.8 333.0 468.5 335.9 469.1 338.7 469.8 341.5 470.4 344.2 471.1 347.1 471.7 350.2 472.5 353.4 473.3 357.0 474.2 360.9 475.1 365.1 476.1 369.5 477.1 374.1 478.2 378.8 479.2 383.6 480.3 388.3 481.3 393.0 482.4 397.8 483.5 403.0 484.7 408.3 485.9 413.6 487.0 418.7 488.1 423.4 489.0 427.6 489.8 431.0 490.4 433.6 490.8 435.5 491.2 436.8 491.4 437.8 491.6 438.5 491.8 439.2 492.0 439.9 492.3 441.0" fill="none" stroke="#e6e9e6" stroke-width="3.6" stroke-dasharray="1.7 1.5"/>
<path d="M467.8 333.0 468.5 335.9 469.1 338.7 469.8 341.5 470.4 344.2 471.1 347.1 471.7 350.2 472.5 353.4 473.3 357.0 474.2 360.9 475.1 365.1 476.1 369.5 477.1 374.1 478.2 378.8 479.2 383.6 480.3 388.3 481.3 393.0 482.4 397.8 483.5 403.0 484.7 408.3 485.9 413.6 487.0 418.7 488.1 423.4 489.0 427.6 489.8 431.0 490.4 433.6 490.8 435.5 491.2 436.8 491.4 437.8 491.6 438.5 491.8 439.2 492.0 439.9 492.3 441.0" fill="none" stroke="#343c38" stroke-width="1.5" stroke-opacity="0.9" stroke-dasharray="2.2 1.4"/>
<path d="M493.6 334.0 493.7 339.7 493.8 345.3 493.9 350.9 494.0 356.5 494.1 362.2 494.2 367.9 494.3 373.9 494.4 380.0 494.5 386.7 494.6 393.9 494.7 401.5 494.7 409.1 494.8 416.5 494.8 423.3 494.8 429.2 494.8 434.0 494.7 437.5 494.6 440.0 494.4 441.6 494.3 442.6 494.1 443.3 493.9 444.0 493.7 444.8 493.5 446.0" fill="none" stroke="#e6e9e6" stroke-width="3" stroke-dasharray="1.7 1.5"/>
<path d="M493.6 334.0 493.7 339.7 493.8 345.3 493.9 350.9 494.0 356.5 494.1 362.2 494.2 367.9 494.3 373.9 494.4 380.0 494.5 386.7 494.6 393.9 494.7 401.5 494.7 409.1 494.8 416.5 494.8 423.3 494.8 429.2 494.8 434.0 494.7 437.5 494.6 440.0 494.4 441.6 494.3 442.6 494.1 443.3 493.9 444.0 493.7 444.8 493.5 446.0" fill="none" stroke="#343c38" stroke-width="1.3" stroke-opacity="0.9" stroke-dasharray="2.2 1.4"/>
<path d="M450.0 151.0 453.3 151.2 456.7 151.4 460.0 151.5 463.4 151.6 466.7 151.8 470.0 152.1 473.4 152.6 476.7 153.3 480.1 154.3 483.6 155.5 487.2 156.8 490.7 158.3 494.2 159.9 497.5 161.5 500.5 163.0 503.3 164.4 505.8 165.7 508.0 167.0 510.1 168.2 512.0 169.4 513.7 170.7 515.3 172.0 516.7 173.4 518.0 175.0 519.1 176.7 519.9 178.5 520.5 180.4 521.0 182.3 521.5 184.4 521.9 186.5 522.4 188.7 523.0 191.0 523.7 193.4 524.5 196.0 525.4 198.7 526.2 201.4 527.0 204.2 527.8 206.9 528.4 209.5 529.0 212.0 529.5 214.3 529.9 216.5 530.2 218.6 530.5 220.6 530.7 222.7 530.9 224.7 531.0 226.8 531.0 229.0 531.0 231.3 530.8 233.7 530.6 236.1 530.3 238.5 530.0 241.0 529.7 243.4 529.3 245.7 529.0 248.0 528.6 250.1 528.1 252.1 527.6 253.9 527.0 255.8 526.5 257.7 526.1 259.7 525.7 261.9 525.5 264.4 525.4 267.2 525.5 270.2 525.6 273.5 525.8 276.8 526.0 280.3 526.3 283.6 526.7 286.9 527.0 290.0 527.4 293.0 528.0 296.1 528.6 299.1 529.2 302.0 529.8 304.9 530.4 307.5 530.8 309.9 531.0 312.0 531.0 313.7 530.9 315.2 530.7 316.3 530.4 317.3 530.0 318.2 529.6 319.1 529.3 320.0 529.0 321.0" fill="none" stroke="#94ae98" stroke-width="4.2" stroke-linecap="round"/>
<path d="M450.0 151.0 453.3 151.2 456.7 151.4 460.0 151.5 463.4 151.6 466.7 151.8 470.0 152.1 473.4 152.6 476.7 153.3 480.1 154.3 483.6 155.5 487.2 156.8 490.7 158.3 494.2 159.9 497.5 161.5 500.5 163.0 503.3 164.4 505.8 165.7 508.0 167.0 510.1 168.2 512.0 169.4 513.7 170.7 515.3 172.0 516.7 173.4 518.0 175.0 519.1 176.7 519.9 178.5 520.5 180.4 521.0 182.3 521.5 184.4 521.9 186.5 522.4 188.7 523.0 191.0 523.7 193.4 524.5 196.0 525.4 198.7 526.2 201.4 527.0 204.2 527.8 206.9 528.4 209.5 529.0 212.0 529.5 214.3 529.9 216.5 530.2 218.6 530.5 220.6 530.7 222.7 530.9 224.7 531.0 226.8 531.0 229.0 531.0 231.3 530.8 233.7 530.6 236.1 530.3 238.5 530.0 241.0 529.7 243.4 529.3 245.7 529.0 248.0 528.6 250.1 528.1 252.1 527.6 253.9 527.0 255.8 526.5 257.7 526.1 259.7 525.7 261.9 525.5 264.4 525.4 267.2 525.5 270.2 525.6 273.5 525.8 276.8 526.0 280.3 526.3 283.6 526.7 286.9 527.0 290.0 527.4 293.0 528.0 296.1 528.6 299.1 529.2 302.0 529.8 304.9 530.4 307.5 530.8 309.9 531.0 312.0 531.0 313.7 530.9 315.2 530.7 316.3 530.4 317.3 530.0 318.2 529.6 319.1 529.3 320.0 529.0 321.0" fill="none" stroke="#566e5c" stroke-width="0.8" stroke-opacity="0.8"/>
<path d="M529.0 321.0 528.2 320.4 527.5 319.7 526.7 319.0 525.9 318.3 525.2 317.6 524.4 317.0 523.7 316.5 523.0 316.0 522.3 315.6 521.6 315.1 520.9 314.7 520.2 314.4 519.6 314.2 518.9 314.1 518.4 314.1 517.8 314.4 517.3 314.9 516.8 315.6 516.3 316.6 515.9 317.6 515.5 318.7 515.2 319.9 514.8 321.0 514.5 322.0 514.3 323.0 514.1 324.0 514.0 325.1 513.9 326.2 513.8 327.2 513.6 328.2 513.4 329.1 513.0 330.0 512.5 330.8 511.8 331.5 511.1 332.2 510.3 332.9 509.5 333.5 508.7 334.1 507.8 334.6 507.0 335.0 506.2 335.4 505.3 335.7 504.4 336.1 503.4 336.3 502.5 336.5 501.6 336.6 500.8 336.7 500.0 336.7 499.3 336.6 498.6 336.4 498.0 336.2 497.4 335.8 496.8 335.5 496.2 335.1 495.6 334.8 495.0 334.5" fill="none" stroke="#94ae98" stroke-width="3.2" stroke-linecap="round"/>
<path d="M517.0 316.0 516.6 316.9 516.2 317.8 515.8 318.6 515.4 319.5 515.0 320.4 514.7 321.2 514.3 322.1 514.0 323.0 513.7 323.9 513.5 324.8 513.3 325.6 513.1 326.5 512.9 327.4 512.8 328.2 512.6 329.1 512.4 330.0" fill="none" stroke="#2c3630" stroke-width="1.6" stroke-opacity="0.8" stroke-dasharray="2 1.5"/>
<path d="M512.0 168.5 511.6 168.1 511.5 167.6 511.4 167.0 511.3 166.4 511.0 165.9 510.4 165.8 509.4 166.0 507.8 166.7 505.5 167.9 502.6 169.5 499.2 171.5 495.5 173.8 491.7 176.3 487.9 178.9 484.3 181.6 481.0 184.4 478.0 187.3 475.0 190.4 472.0 193.7 469.2 197.1 466.4 200.6 463.8 204.1 461.3 207.6 459.0 211.0 456.8 214.3 454.8 217.5 452.9 220.7 451.1 223.9 449.5 227.1 448.0 230.5 446.7 234.0 445.5 237.8 444.5 241.9 443.8 246.2 443.2 250.8 442.8 255.5 442.5 260.2 442.3 264.7 442.1 269.0 442.0 273.0 442.0 276.7 442.1 280.2 442.3 283.6 442.6 286.9 442.9 290.0 443.3 292.8 443.7 295.5 444.0 298.0 444.3 300.2 444.6 302.0 444.9 303.5 445.2 304.9 445.5 306.3 445.9 307.7 446.4 309.2 447.0 311.0 447.6 313.1 448.4 315.5 449.1 318.0 449.9 320.6 450.8 323.1 451.8 325.4 452.9 327.4 454.0 329.0 455.3 330.1 456.6 330.9 458.1 331.4 459.7 331.7 461.3 331.8 462.9 332.0 464.5 332.2 466.0 332.5" fill="none" stroke="#94ae98" stroke-width="3.8" stroke-linecap="round"/>
<path d="M512.0 168.5 511.6 168.1 511.5 167.6 511.4 167.0 511.3 166.4 511.0 165.9 510.4 165.8 509.4 166.0 507.8 166.7 505.5 167.9 502.6 169.5 499.2 171.5 495.5 173.8 491.7 176.3 487.9 178.9 484.3 181.6 481.0 184.4 478.0 187.3 475.0 190.4 472.0 193.7 469.2 197.1 466.4 200.6 463.8 204.1 461.3 207.6 459.0 211.0 456.8 214.3 454.8 217.5 452.9 220.7 451.1 223.9 449.5 227.1 448.0 230.5 446.7 234.0 445.5 237.8 444.5 241.9 443.8 246.2 443.2 250.8 442.8 255.5 442.5 260.2 442.3 264.7 442.1 269.0 442.0 273.0 442.0 276.7 442.1 280.2 442.3 283.6 442.6 286.9 442.9 290.0 443.3 292.8 443.7 295.5 444.0 298.0 444.3 300.2 444.6 302.0 444.9 303.5 445.2 304.9 445.5 306.3 445.9 307.7 446.4 309.2 447.0 311.0 447.6 313.1 448.4 315.5 449.1 318.0 449.9 320.6 450.8 323.1 451.8 325.4 452.9 327.4 454.0 329.0 455.3 330.1 456.6 330.9 458.1 331.4 459.7 331.7 461.3 331.8 462.9 332.0 464.5 332.2 466.0 332.5" fill="none" stroke="#3f5848" stroke-width="0.9" stroke-opacity="0.85"/>
<path d="M470.0 152.0 467.5 151.8 465.1 151.5 462.7 151.2 460.3 150.9 457.8 150.6 455.3 150.5 452.7 150.6 450.0 151.0 447.1 151.5 444.0 152.2 440.7 153.0 437.5 153.9 434.2 155.1 431.1 156.5 428.2 158.1 425.5 160.0 423.1 162.2 420.8 164.6 418.7 167.2 416.8 170.1 414.9 173.2 413.2 176.5 411.6 180.1 410.0 184.0 408.5 188.3 407.2 193.0 406.0 198.0 404.9 203.2 403.8 208.6 402.9 213.9 401.9 219.1 401.0 224.0 400.1 228.8 399.1 233.6 398.2 238.4 397.4 243.1 396.7 247.7 396.1 252.1 395.7 256.2 395.5 260.0 395.6 263.5 395.9 266.7 396.4 269.7 397.0 272.5 397.8 275.1 398.5 277.5 399.3 279.8 400.0 282.0 400.8 284.0 401.8 285.7 403.0 287.3 404.1 288.7 405.1 290.1 405.8 291.3 406.1 292.6 406.0 294.0 405.3 295.4 404.1 296.7 402.5 298.0 400.7 299.3 398.7 300.6 396.7 301.8 394.8 303.1 393.0 304.4" fill="none" stroke="#94ae98" stroke-width="2.6" stroke-opacity="0.9"/>
<path d="M392.8 304.4 395.0 305.9 397.3 307.5 399.5 309.1 401.7 310.6 403.9 312.2 406.2 313.7 408.4 315.2 410.6 316.7 412.8 318.2 415.0 319.7 417.2 321.2 419.5 322.7 421.7 324.2 423.9 325.5 426.1 326.7 428.3 327.8 430.5 328.7 432.7 329.4 434.9 330.0 437.1 330.5 439.4 331.0 441.6 331.4 443.8 331.9 446.0 332.4" fill="none" stroke="#1d2420" stroke-width="2.2"/>
<path d="M393.0 304.4 396.4 304.3 399.8 304.1 403.3 304.0 406.7 303.8 410.1 303.7 413.5 303.6 416.8 303.5 420.0 303.5 423.1 303.5 426.2 303.6 429.2 303.8 432.2 303.9 435.1 304.1 438.1 304.3 441.0 304.4 444.0 304.6" fill="none" stroke="#2a332d" stroke-width="1.6"/>
<path d="M446.0 305.6 449.0 305.6 452.0 305.6 455.0 305.6 457.9 305.6 460.9 305.7 463.9 305.7 467.0 305.8 470.0 306.0 473.1 306.2 476.4 306.6 479.7 306.9 482.9 307.3 486.2 307.7 489.3 308.2 492.3 308.6 495.0 309.0 497.5 309.4 499.8 309.8 502.0 310.2 504.0 310.7 506.0 311.1 507.9 311.5 509.9 312.0 512.0 312.4" fill="none" stroke="#15191a" stroke-width="2"/>
<path d="M507 270 L512 284 M514 266 L518 279 M449 317 L470 322 L486 318 M452 321 L462 326" fill="none" stroke="#8a9a90" stroke-width=".8"/>
</g></g>
</svg>
<div id="wm">3Dyyds.com</div>
</body>
</html>
